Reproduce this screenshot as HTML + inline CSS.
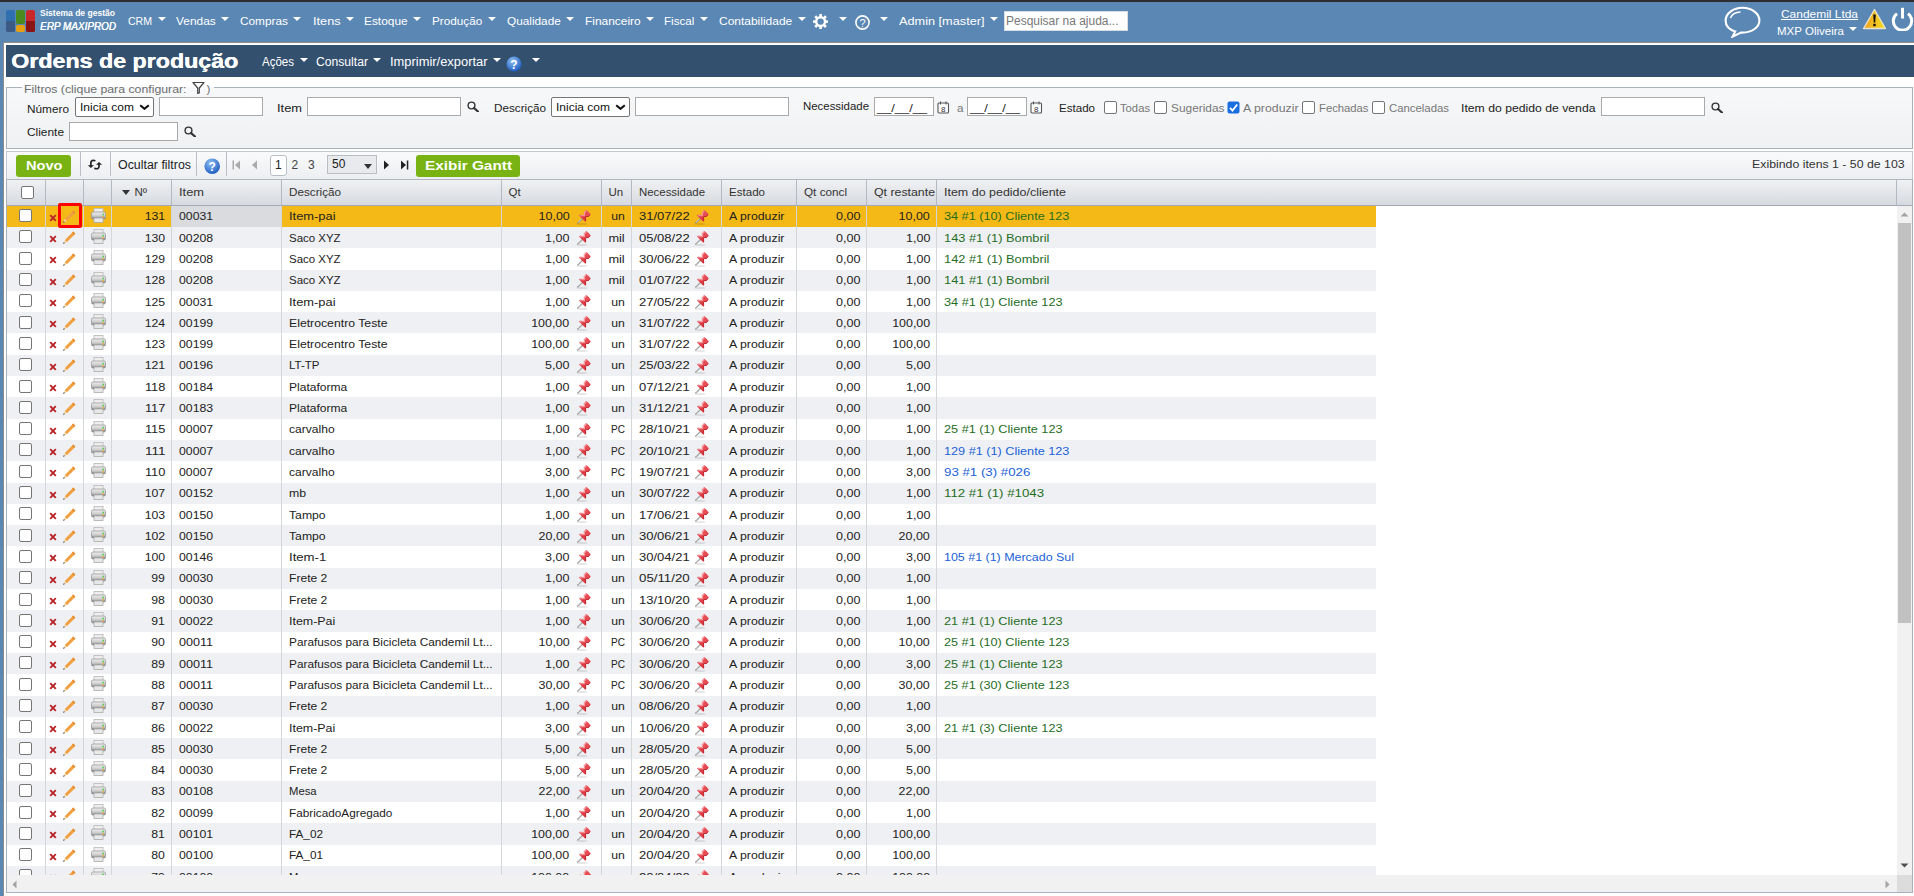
<!DOCTYPE html><html><head><meta charset="utf-8"><title>Ordens de produção</title><style>
html,body{margin:0;padding:0}
body{width:1914px;height:896px;overflow:hidden;position:relative;background:#fff;font-family:"Liberation Sans", sans-serif}
.t{position:absolute;white-space:nowrap;line-height:1.149;transform-origin:left center;}
</style></head><body>
<div style="position:absolute;left:0px;top:0px;width:1914px;height:2px;background:#2e2e2e"></div>
<div style="position:absolute;left:0px;top:2px;width:1914px;height:40px;background:#5b87b4"></div>
<div style="position:absolute;left:0px;top:42px;width:3px;height:854px;background:#5b87b4"></div>
<div style="position:absolute;left:3px;top:42px;width:1911px;height:1px;background:#8c8c8c"></div>
<div style="position:absolute;left:3px;top:42px;width:1px;height:854px;background:#8c8c8c"></div>
<div style="position:absolute;left:6px;top:45px;width:1908px;height:32px;background:#34506f"></div>
<div style="position:absolute;left:6px;top:10px;width:9px;height:22px;background:#2f6fb0;border-radius:2px"></div>
<div style="position:absolute;left:6px;top:21px;width:9px;height:11px;background:#3d5a86;border-radius:0 0 2px 2px"></div>
<div style="position:absolute;left:16px;top:10px;width:9px;height:14px;background:#4a8a1e;border-radius:2px"></div>
<div style="position:absolute;left:16px;top:25px;width:9px;height:7px;background:#e8a010;border-radius:2px"></div>
<div style="position:absolute;left:26px;top:10px;width:9px;height:22px;background:#c8282a;border-radius:2px"></div>
<div style="position:absolute;left:26px;top:21px;width:9px;height:11px;background:#8a1414;border-radius:0 0 2px 2px"></div>
<div class="t" id="t0" style="transform:scaleX(0.9490);left:40px;top:8.46px;font-size:9px;color:#fff;font-weight:bold;">Sistema de gestão</div>
<div class="t" id="t1" style="transform:scaleX(0.9053);left:39.5px;top:19.95px;font-size:11px;color:#fff;font-weight:normal;font-style:italic;text-shadow:0.3px 0 0 #fff;">ERP MAXIPROD</div>
<div class="t" id="t2" style="transform:scaleX(0.9159);left:128.0px;top:15.39px;font-size:11.5px;color:#fff;font-weight:normal;">CRM</div>
<div style="position:absolute;left:157.8px;top:17px;width:0;height:0;border-left:4.0px solid transparent;border-right:4.0px solid transparent;border-top:4px solid #fff"></div>
<div class="t" id="t3" style="transform:scaleX(1.0345);left:176.1px;top:15.39px;font-size:11.5px;color:#fff;font-weight:normal;">Vendas</div>
<div style="position:absolute;left:221.3px;top:17px;width:0;height:0;border-left:4.0px solid transparent;border-right:4.0px solid transparent;border-top:4px solid #fff"></div>
<div class="t" id="t4" style="transform:scaleX(1.0288);left:240.1px;top:15.39px;font-size:11.5px;color:#fff;font-weight:normal;">Compras</div>
<div style="position:absolute;left:293.4px;top:17px;width:0;height:0;border-left:4.0px solid transparent;border-right:4.0px solid transparent;border-top:4px solid #fff"></div>
<div class="t" id="t5" style="transform:scaleX(1.1068);left:312.5px;top:15.39px;font-size:11.5px;color:#fff;font-weight:normal;">Itens</div>
<div style="position:absolute;left:346.4px;top:17px;width:0;height:0;border-left:4.0px solid transparent;border-right:4.0px solid transparent;border-top:4px solid #fff"></div>
<div class="t" id="t6" style="transform:scaleX(1.0331);left:364.2px;top:15.39px;font-size:11.5px;color:#fff;font-weight:normal;">Estoque</div>
<div style="position:absolute;left:412.9px;top:17px;width:0;height:0;border-left:4.0px solid transparent;border-right:4.0px solid transparent;border-top:4px solid #fff"></div>
<div class="t" id="t7" style="transform:scaleX(1.0196);left:432.1px;top:15.39px;font-size:11.5px;color:#fff;font-weight:normal;">Produção</div>
<div style="position:absolute;left:487.8px;top:17px;width:0;height:0;border-left:4.0px solid transparent;border-right:4.0px solid transparent;border-top:4px solid #fff"></div>
<div class="t" id="t8" style="transform:scaleX(1.0260);left:506.9px;top:15.39px;font-size:11.5px;color:#fff;font-weight:normal;">Qualidade</div>
<div style="position:absolute;left:566.1px;top:17px;width:0;height:0;border-left:4.0px solid transparent;border-right:4.0px solid transparent;border-top:4px solid #fff"></div>
<div class="t" id="t9" style="transform:scaleX(1.0372);left:584.9px;top:15.39px;font-size:11.5px;color:#fff;font-weight:normal;">Financeiro</div>
<div style="position:absolute;left:645.8px;top:17px;width:0;height:0;border-left:4.0px solid transparent;border-right:4.0px solid transparent;border-top:4px solid #fff"></div>
<div class="t" id="t10" style="transform:scaleX(1.0089);left:664.4px;top:15.39px;font-size:11.5px;color:#fff;font-weight:normal;">Fiscal</div>
<div style="position:absolute;left:700.4px;top:17px;width:0;height:0;border-left:4.0px solid transparent;border-right:4.0px solid transparent;border-top:4px solid #fff"></div>
<div class="t" id="t11" style="transform:scaleX(1.0406);left:719.3px;top:15.39px;font-size:11.5px;color:#fff;font-weight:normal;">Contabilidade</div>
<div style="position:absolute;left:797.9px;top:17px;width:0;height:0;border-left:4.0px solid transparent;border-right:4.0px solid transparent;border-top:4px solid #fff"></div>
<svg style="position:absolute;left:813.3px;top:14px" width="15.2" height="15.2" viewBox="0 0 15.2 15.2"><g fill="#fff"><rect x="6.3" y="0" width="2.6" height="4" transform="rotate(0 7.6 7.6)"/><rect x="6.3" y="0" width="2.6" height="4" transform="rotate(45 7.6 7.6)"/><rect x="6.3" y="0" width="2.6" height="4" transform="rotate(90 7.6 7.6)"/><rect x="6.3" y="0" width="2.6" height="4" transform="rotate(135 7.6 7.6)"/><rect x="6.3" y="0" width="2.6" height="4" transform="rotate(180 7.6 7.6)"/><rect x="6.3" y="0" width="2.6" height="4" transform="rotate(225 7.6 7.6)"/><rect x="6.3" y="0" width="2.6" height="4" transform="rotate(270 7.6 7.6)"/><rect x="6.3" y="0" width="2.6" height="4" transform="rotate(315 7.6 7.6)"/><circle cx="7.6" cy="7.6" r="5.6"/></g><circle cx="7.6" cy="7.6" r="3.2" fill="#5b87b4"/></svg>
<div style="position:absolute;left:838.8px;top:17px;width:0;height:0;border-left:4.0px solid transparent;border-right:4.0px solid transparent;border-top:4px solid #fff"></div>
<svg style="position:absolute;left:854.7px;top:15px" width="15" height="15" viewBox="0 0 15 15"><circle cx="7.5" cy="7.5" r="6.6" fill="none" stroke="#fff" stroke-width="1.6"/><text x="7.5" y="11.6" font-family="Liberation Sans" font-size="11" fill="#fff" text-anchor="middle">?</text></svg>
<div style="position:absolute;left:879.8px;top:17px;width:0;height:0;border-left:4.0px solid transparent;border-right:4.0px solid transparent;border-top:4px solid #fff"></div>
<div class="t" id="t12" style="transform:scaleX(1.1057);left:898.5px;top:15.39px;font-size:11.5px;color:#fff;font-weight:normal;">Admin [master]</div>
<div style="position:absolute;left:990px;top:17px;width:0;height:0;border-left:4.0px solid transparent;border-right:4.0px solid transparent;border-top:4px solid #fff"></div>
<div style="position:absolute;left:1003.5px;top:11px;width:124.5px;height:20px;background:#fff;box-sizing:border-box;border:1px solid #d8dde4"></div>
<div class="t" id="t13" style="transform:scaleX(0.9978);left:1006px;top:14.94px;font-size:12px;color:#777;font-weight:normal;">Pesquisar na ajuda...</div>
<svg style="position:absolute;left:1724px;top:6px" width="37" height="32" viewBox="0 0 37 32"><path d="M18.5 1.8 C9 1.8 1.6 7.6 1.6 14.4 C1.6 19.6 5.6 23.6 11.2 25.4 L8.6 30.6 L17 26.6 C17.5 26.6 18 26.6 18.5 26.6 C28 26.6 35.4 21 35.4 14.4 C35.4 7.6 28 1.8 18.5 1.8 Z" fill="none" stroke="#fff" stroke-width="2.1"/><path d="M6.5 12 C8 8 11.5 6.2 16.5 6" fill="none" stroke="#fff" stroke-width="1.6"/></svg>
<div class="t" id="t14" style="transform:scaleX(1.0383);left:1780.5px;top:7.99px;font-size:11.5px;color:#fff;font-weight:normal;text-decoration:underline;">Candemil Ltda</div>
<div class="t" id="t15" style="transform:scaleX(1.0016);left:1776.5px;top:25.19px;font-size:11.5px;color:#fff;font-weight:normal;">MXP Oliveira</div>
<div style="position:absolute;left:1849.3px;top:27px;width:0;height:0;border-left:4.0px solid transparent;border-right:4.0px solid transparent;border-top:4.5px solid #fff"></div>
<svg style="position:absolute;left:1861.5px;top:8px" width="25" height="22" viewBox="0 0 25 22"><defs><linearGradient id="wg" x1="0" y1="0" x2="1" y2="0"><stop offset="0" stop-color="#f0a020"/><stop offset="1" stop-color="#f4e020"/></linearGradient></defs><path d="M12.5 1.5 L23.5 20.5 L1.5 20.5 Z" fill="url(#wg)" stroke="#e8e4d0" stroke-width="1.3" stroke-linejoin="round"/><path d="M11.2 6.5 L13.8 6.5 L13.2 14.5 L11.8 14.5 Z" fill="#111"/><rect x="11.3" y="15.8" width="2.4" height="2.4" fill="#111"/></svg>
<svg style="position:absolute;left:1891px;top:7px" width="23" height="24" viewBox="0 0 23 24"><path d="M6 6.6 A9.2 9.2 0 1 0 17 6.6" fill="none" stroke="#fff" stroke-width="3"/><line x1="11.5" y1="0.8" x2="11.5" y2="11.5" stroke="#fff" stroke-width="3"/></svg>
<div class="t" id="t16" style="transform:scaleX(1.1606);left:11px;top:49.60px;font-size:20px;color:#fff;font-weight:bold;text-shadow:0.5px 0 0 #fff;">Ordens de produção</div>
<div class="t" id="t17" style="transform:scaleX(0.9593);left:261.5px;top:55.94px;font-size:12px;color:#fff;font-weight:normal;">Ações</div>
<div style="position:absolute;left:299.7px;top:58px;width:0;height:0;border-left:4.0px solid transparent;border-right:4.0px solid transparent;border-top:4.5px solid #fff"></div>
<div class="t" id="t18" style="transform:scaleX(1.0125);left:316px;top:55.94px;font-size:12px;color:#fff;font-weight:normal;">Consultar</div>
<div style="position:absolute;left:372.9px;top:58px;width:0;height:0;border-left:4.0px solid transparent;border-right:4.0px solid transparent;border-top:4.5px solid #fff"></div>
<div class="t" id="t19" style="transform:scaleX(1.0751);left:390px;top:55.94px;font-size:12px;color:#fff;font-weight:normal;">Imprimir/exportar</div>
<div style="position:absolute;left:493.1px;top:58px;width:0;height:0;border-left:4.0px solid transparent;border-right:4.0px solid transparent;border-top:4.5px solid #fff"></div>
<svg style="position:absolute;left:506px;top:56px" width="16" height="16" viewBox="0 0 16 16"><defs><radialGradient id="hg" cx="40%" cy="30%" r="70%"><stop offset="0" stop-color="#8fc0f5"/><stop offset="1" stop-color="#1f5fc0"/></radialGradient></defs><circle cx="8" cy="8" r="7.5" fill="url(#hg)"/><text x="8" y="12.5" font-family="Liberation Sans" font-weight="bold" font-size="12" fill="#fff" text-anchor="middle">?</text></svg>
<div style="position:absolute;left:532px;top:58px;width:0;height:0;border-left:4.0px solid transparent;border-right:4.0px solid transparent;border-top:4.5px solid #fff"></div>
<div style="position:absolute;left:6px;top:87px;width:1907px;height:62px;background:linear-gradient(#f7f8f9,#eff1f3);box-sizing:border-box;border:1px solid #aab1b9"></div>
<div style="position:absolute;left:22px;top:80px;width:192px;height:7px;background:#fff"></div>
<div style="position:absolute;left:22px;top:87px;width:192px;height:7px;background:#f7f8f9"></div>
<div class="t" id="t20" style="transform:scaleX(1.0682);left:24px;top:83.09px;font-size:11.5px;color:#6e6e6e;font-weight:normal;">Filtros (clique para configurar:</div>
<svg style="position:absolute;left:192px;top:81px" width="13" height="13" viewBox="0 0 13 13"><path d="M1 1.5 L12 1.5 L7.3 7 L7.3 12 L5.7 12.5 L5.7 7 Z" fill="none" stroke="#444" stroke-width="1.2" stroke-linejoin="round"/></svg>
<div class="t" id="t21" style="left:206.5px;top:83.09px;font-size:11.5px;color:#6e6e6e;font-weight:normal;">)</div>
<div class="t" id="t22" style="transform:scaleX(1.0267);left:27px;top:102.59px;font-size:11.5px;color:#222;font-weight:normal;">Número</div>
<div style="position:absolute;left:74.5px;top:97.3px;width:79px;height:20px;background:#fff;box-sizing:border-box;border:1px solid #767676;border-radius:2px"></div>
<div class="t" id="t23" style="transform:scaleX(1.0428);left:79.5px;top:101.09px;font-size:11.5px;color:#111;font-weight:normal;">Inicia com</div>
<svg style="position:absolute;left:138.5px;top:104.3px" width="11" height="6" viewBox="0 0 11 6"><path d="M1.2 1.2 L5.5 4.8 L9.8 1.2" fill="none" stroke="#111" stroke-width="2.1"/></svg>
<div style="position:absolute;left:159px;top:97.3px;width:104px;height:19px;background:#fff;box-sizing:border-box;border:1px solid #a9a9a9"></div>
<div class="t" id="t24" style="transform:scaleX(1.1173);left:276.5px;top:102.49px;font-size:11.5px;color:#222;font-weight:normal;">Item</div>
<div style="position:absolute;left:307px;top:97.3px;width:154px;height:19px;background:#fff;box-sizing:border-box;border:1px solid #a9a9a9"></div>
<svg style="position:absolute;left:466.5px;top:101px" width="12" height="11" viewBox="0 0 12 11"><circle cx="4.5" cy="4.5" r="3.4" fill="none" stroke="#333" stroke-width="1.4"/><line x1="7" y1="7" x2="11" y2="10.5" stroke="#333" stroke-width="2.2" stroke-linecap="round"/></svg>
<div class="t" id="t25" style="transform:scaleX(1.0168);left:493.5px;top:102.49px;font-size:11.5px;color:#222;font-weight:normal;">Descrição</div>
<div style="position:absolute;left:550.5px;top:97.3px;width:79px;height:20px;background:#fff;box-sizing:border-box;border:1px solid #767676;border-radius:2px"></div>
<div class="t" id="t26" style="transform:scaleX(1.0428);left:555.5px;top:101.09px;font-size:11.5px;color:#111;font-weight:normal;">Inicia com</div>
<svg style="position:absolute;left:614.5px;top:104.3px" width="11" height="6" viewBox="0 0 11 6"><path d="M1.2 1.2 L5.5 4.8 L9.8 1.2" fill="none" stroke="#111" stroke-width="2.1"/></svg>
<div style="position:absolute;left:635.3px;top:97.3px;width:153.5px;height:19px;background:#fff;box-sizing:border-box;border:1px solid #a9a9a9"></div>
<div class="t" id="t27" style="transform:scaleX(0.9927);left:802.5px;top:99.79px;font-size:11.5px;color:#222;font-weight:normal;">Necessidade</div>
<div style="position:absolute;left:874.2px;top:97.3px;width:59.6px;height:19px;background:#fff;box-sizing:border-box;border:1px solid #a9a9a9"></div>
<div class="t" id="t28" style="transform:scaleX(1.1169);left:877px;top:102.09px;font-size:11.5px;color:#222;font-weight:normal;">__/__/__</div>
<svg style="position:absolute;left:937px;top:101px" width="13" height="13" viewBox="0 0 13 13"><rect x="1" y="2" width="10.5" height="10" rx="1" fill="#fff" stroke="#555" stroke-width="1.1"/><line x1="3.5" y1="0.5" x2="3.5" y2="3.5" stroke="#555" stroke-width="1.1"/><line x1="9" y1="0.5" x2="9" y2="3.5" stroke="#555" stroke-width="1.1"/><text x="6.3" y="11" font-family="Liberation Sans" font-size="8" fill="#333" text-anchor="middle">8</text></svg>
<div class="t" id="t29" style="transform:scaleX(1.0146);left:956.5px;top:101.79px;font-size:11.5px;color:#777;font-weight:normal;">a</div>
<div style="position:absolute;left:967.2px;top:97.3px;width:59.6px;height:19px;background:#fff;box-sizing:border-box;border:1px solid #a9a9a9"></div>
<div class="t" id="t30" style="transform:scaleX(1.1169);left:970px;top:102.09px;font-size:11.5px;color:#222;font-weight:normal;">__/__/__</div>
<svg style="position:absolute;left:1030px;top:101px" width="13" height="13" viewBox="0 0 13 13"><rect x="1" y="2" width="10.5" height="10" rx="1" fill="#fff" stroke="#555" stroke-width="1.1"/><line x1="3.5" y1="0.5" x2="3.5" y2="3.5" stroke="#555" stroke-width="1.1"/><line x1="9" y1="0.5" x2="9" y2="3.5" stroke="#555" stroke-width="1.1"/><text x="6.3" y="11" font-family="Liberation Sans" font-size="8" fill="#333" text-anchor="middle">8</text></svg>
<div class="t" id="t31" style="transform:scaleX(1.0052);left:1058.5px;top:101.89px;font-size:11.5px;color:#222;font-weight:normal;">Estado</div>
<div style="position:absolute;left:1104px;top:101px;width:13px;height:13px;background:#fff;box-sizing:border-box;border:1px solid #767676;border-radius:2px"></div>
<div class="t" id="t32" style="transform:scaleX(0.9776);left:1120px;top:101.79px;font-size:11.5px;color:#777;font-weight:normal;">Todas</div>
<div style="position:absolute;left:1154px;top:101px;width:13px;height:13px;background:#fff;box-sizing:border-box;border:1px solid #767676;border-radius:2px"></div>
<div class="t" id="t33" style="transform:scaleX(1.0329);left:1170.5px;top:101.79px;font-size:11.5px;color:#777;font-weight:normal;">Sugeridas</div>
<svg style="position:absolute;left:1227px;top:101px" width="13" height="13" viewBox="0 0 13 13"><rect x="0.5" y="0.5" width="12" height="12" rx="2" fill="#1a6fe0"/><path d="M3 6.8 L5.5 9.5 L10.2 3.5" fill="none" stroke="#fff" stroke-width="1.8"/></svg>
<div class="t" id="t34" style="transform:scaleX(1.0718);left:1243px;top:101.79px;font-size:11.5px;color:#777;font-weight:normal;">A produzir</div>
<div style="position:absolute;left:1302px;top:101px;width:13px;height:13px;background:#fff;box-sizing:border-box;border:1px solid #767676;border-radius:2px"></div>
<div class="t" id="t35" style="transform:scaleX(0.9799);left:1318.5px;top:101.79px;font-size:11.5px;color:#777;font-weight:normal;">Fechadas</div>
<div style="position:absolute;left:1372px;top:101px;width:13px;height:13px;background:#fff;box-sizing:border-box;border:1px solid #767676;border-radius:2px"></div>
<div class="t" id="t36" style="transform:scaleX(0.9879);left:1388.5px;top:101.79px;font-size:11.5px;color:#777;font-weight:normal;">Canceladas</div>
<div class="t" id="t37" style="transform:scaleX(1.0623);left:1461px;top:102.49px;font-size:11.5px;color:#222;font-weight:normal;">Item do pedido de venda</div>
<div style="position:absolute;left:1601.4px;top:97.3px;width:103.5px;height:19px;background:#fff;box-sizing:border-box;border:1px solid #a9a9a9"></div>
<svg style="position:absolute;left:1710.5px;top:101.5px" width="12" height="11" viewBox="0 0 12 11"><circle cx="4.5" cy="4.5" r="3.4" fill="none" stroke="#333" stroke-width="1.4"/><line x1="7" y1="7" x2="11" y2="10.5" stroke="#333" stroke-width="2.2" stroke-linecap="round"/></svg>
<div class="t" id="t38" style="transform:scaleX(1.0332);left:27px;top:126.09px;font-size:11.5px;color:#222;font-weight:normal;">Cliente</div>
<div style="position:absolute;left:69.4px;top:121.6px;width:108.2px;height:19px;background:#fff;box-sizing:border-box;border:1px solid #a9a9a9"></div>
<svg style="position:absolute;left:184px;top:125.8px" width="12" height="11" viewBox="0 0 12 11"><circle cx="4.5" cy="4.5" r="3.4" fill="none" stroke="#333" stroke-width="1.4"/><line x1="7" y1="7" x2="11" y2="10.5" stroke="#333" stroke-width="2.2" stroke-linecap="round"/></svg>
<div style="position:absolute;left:6px;top:151px;width:1907px;height:29px;background:linear-gradient(#f9fafb,#eceef1);box-sizing:border-box;border:1px solid #c3c8ce;border-bottom:none"></div>
<div style="position:absolute;left:16px;top:154.5px;width:55px;height:22.5px;background:#78b313;border-radius:3px"></div>
<div class="t" id="t39" style="transform:scaleX(1.1231);left:25.5px;top:158.83px;font-size:13px;color:#fff;font-weight:bold;">Novo</div>
<div style="position:absolute;left:80px;top:152px;width:1px;height:24px;background:#b9bec6"></div>
<div style="position:absolute;left:110px;top:152px;width:1px;height:24px;background:#b9bec6"></div>
<div style="position:absolute;left:196px;top:152px;width:1px;height:24px;background:#b9bec6"></div>
<div style="position:absolute;left:226px;top:152px;width:1px;height:24px;background:#b9bec6"></div>
<svg style="position:absolute;left:84px;top:155px" width="22" height="20" viewBox="0 0 22 20"><path d="M11.4 5.8 Q7.2 4.6 6.9 7.4 L6.9 11" fill="none" stroke="#222" stroke-width="1.7"/><path d="M3.8 10.2 L10 10.2 L6.9 13 Z" fill="#222"/><path d="M10.3 13.4 Q14.8 14.6 15 11.8 L15 9" fill="none" stroke="#222" stroke-width="1.7"/><path d="M12 9.8 L18.1 9.8 L15 7 Z" fill="#222"/></svg>
<div class="t" id="t40" style="transform:scaleX(1.0327);left:117.5px;top:158.64px;font-size:12px;color:#222;font-weight:normal;">Ocultar filtros</div>
<svg style="position:absolute;left:203.5px;top:158px" width="17" height="17" viewBox="0 0 17 17"><defs><radialGradient id="hg2" cx="40%" cy="30%" r="70%"><stop offset="0" stop-color="#8fc0f5"/><stop offset="1" stop-color="#1f5fc0"/></radialGradient></defs><circle cx="8.2" cy="8.2" r="7.8" fill="url(#hg2)"/><text x="8.2" y="12.8" font-family="Liberation Sans" font-weight="bold" font-size="12" fill="#fff" text-anchor="middle">?</text></svg>
<svg style="position:absolute;left:232px;top:159.5px" width="9" height="10" viewBox="0 0 9 10"><rect x="0.5" y="0.5" width="1.5" height="9" fill="#aaa"/><path d="M8 0.5 L8 9.5 L3 5 Z" fill="#aaa"/></svg>
<svg style="position:absolute;left:251px;top:159.5px" width="7" height="10" viewBox="0 0 7 10"><path d="M6 0.5 L6 9.5 L1 5 Z" fill="#aaa"/></svg>
<div style="position:absolute;left:269.5px;top:154.5px;width:17.5px;height:21.5px;background:#fff;box-sizing:border-box;border:1px solid #b9bec5;border-radius:3px"></div>
<div class="t" id="t41" style="left:275px;top:158.64px;font-size:12px;color:#222;font-weight:normal;">1</div>
<div class="t" id="t42" style="left:291.5px;top:158.64px;font-size:12px;color:#444;font-weight:normal;">2</div>
<div class="t" id="t43" style="left:308px;top:158.64px;font-size:12px;color:#444;font-weight:normal;">3</div>
<div style="position:absolute;left:327px;top:155.3px;width:49.5px;height:18.5px;background:#e8eaed;box-sizing:border-box;border:1px solid #b9bec5"></div>
<div class="t" id="t44" style="left:332px;top:157.64px;font-size:12px;color:#222;font-weight:normal;">50</div>
<div style="position:absolute;left:364px;top:164px;width:0;height:0;border-left:4.5px solid transparent;border-right:4.5px solid transparent;border-top:5px solid #333"></div>
<svg style="position:absolute;left:383px;top:159.5px" width="7" height="10" viewBox="0 0 7 10"><path d="M1 0.5 L1 9.5 L6 5 Z" fill="#222"/></svg>
<svg style="position:absolute;left:400px;top:159.5px" width="9" height="10" viewBox="0 0 9 10"><path d="M1 0.5 L1 9.5 L6 5 Z" fill="#222"/><rect x="6.8" y="0.5" width="1.5" height="9" fill="#222"/></svg>
<div style="position:absolute;left:416px;top:154.5px;width:104px;height:22px;background:#78b313;border-radius:3px"></div>
<div class="t" id="t45" style="transform:scaleX(1.1807);left:424.5px;top:158.83px;font-size:13px;color:#fff;font-weight:bold;">Exibir Gantt</div>
<div class="t" id="t46" style="transform:scaleX(1.0696);right:9px;top:157.79px;font-size:11.5px;color:#333;font-weight:normal;transform-origin:right center;">Exibindo itens 1 - 50 de 103</div>
<div style="position:absolute;left:6px;top:179px;width:1907px;height:714px;box-sizing:border-box;border:1px solid #a9b0b9;border-top:1px solid #b0b6be"></div>
<div style="position:absolute;left:7px;top:180px;width:1890px;height:26px;background:linear-gradient(#f0f1f3,#d6dae0);border-bottom:1px solid #a4abb4;box-sizing:border-box"></div>
<div style="position:absolute;left:1897px;top:180px;width:15px;height:26px;background:linear-gradient(#f0f1f3,#d6dae0);border-bottom:1px solid #a4abb4;box-sizing:border-box"></div>
<div style="position:absolute;left:45.0px;top:180px;width:1px;height:25px;background:#b3b9c1"></div>
<div style="position:absolute;left:83.0px;top:180px;width:1px;height:25px;background:#b3b9c1"></div>
<div style="position:absolute;left:111.0px;top:180px;width:1px;height:25px;background:#b3b9c1"></div>
<div style="position:absolute;left:171.0px;top:180px;width:1px;height:25px;background:#b3b9c1"></div>
<div style="position:absolute;left:281.0px;top:180px;width:1px;height:25px;background:#b3b9c1"></div>
<div style="position:absolute;left:501.0px;top:180px;width:1px;height:25px;background:#b3b9c1"></div>
<div style="position:absolute;left:601.0px;top:180px;width:1px;height:25px;background:#b3b9c1"></div>
<div style="position:absolute;left:631.0px;top:180px;width:1px;height:25px;background:#b3b9c1"></div>
<div style="position:absolute;left:721.0px;top:180px;width:1px;height:25px;background:#b3b9c1"></div>
<div style="position:absolute;left:796.0px;top:180px;width:1px;height:25px;background:#b3b9c1"></div>
<div style="position:absolute;left:866.0px;top:180px;width:1px;height:25px;background:#b3b9c1"></div>
<div style="position:absolute;left:936.0px;top:180px;width:1px;height:25px;background:#b3b9c1"></div>
<div style="position:absolute;left:1896.0px;top:180px;width:1px;height:25px;background:#b3b9c1"></div>
<div style="position:absolute;left:20.5px;top:185.5px;width:13px;height:13px;background:#fff;box-sizing:border-box;border:1px solid #767676;border-radius:2px"></div>
<div style="position:absolute;left:122px;top:189.5px;width:0;height:0;border-left:4.0px solid transparent;border-right:4.0px solid transparent;border-top:5px solid #333"></div>
<div class="t" id="t47" style="left:134.5px;top:185.99px;font-size:11.5px;color:#333;font-weight:normal;">Nº</div>
<div class="t" id="t48" style="transform:scaleX(1.1173);left:178.5px;top:185.99px;font-size:11.5px;color:#333;font-weight:normal;">Item</div>
<div class="t" id="t49" style="transform:scaleX(1.0168);left:288.5px;top:185.99px;font-size:11.5px;color:#333;font-weight:normal;">Descrição</div>
<div class="t" id="t50" style="left:508.5px;top:185.99px;font-size:11.5px;color:#333;font-weight:normal;">Qt</div>
<div class="t" id="t51" style="left:608.5px;top:185.99px;font-size:11.5px;color:#333;font-weight:normal;">Un</div>
<div class="t" id="t52" style="transform:scaleX(0.9927);left:639px;top:185.99px;font-size:11.5px;color:#333;font-weight:normal;">Necessidade</div>
<div class="t" id="t53" style="transform:scaleX(1.0052);left:728.5px;top:185.99px;font-size:11.5px;color:#333;font-weight:normal;">Estado</div>
<div class="t" id="t54" style="transform:scaleX(1.0193);left:803.5px;top:185.99px;font-size:11.5px;color:#333;font-weight:normal;">Qt concl</div>
<div class="t" id="t55" style="transform:scaleX(1.0722);left:873.5px;top:185.99px;font-size:11.5px;color:#333;font-weight:normal;">Qt restante</div>
<div class="t" id="t56" style="transform:scaleX(1.0841);left:943.5px;top:185.99px;font-size:11.5px;color:#333;font-weight:normal;">Item do pedido/cliente</div>
<div style="position:absolute;left:7px;top:205.67px;width:1890px;height:669.33px;overflow:hidden">
<div style="position:absolute;left:0;top:0.000px;width:1369px;height:21.3px;background:#f5b917"></div>
<div style="position:absolute;left:165px;top:0;width:110px;height:21.3px;background:#d9dbde"></div>
<div style="position:absolute;left:38.0px;top:0.000px;width:1px;height:21.3px;background:#d3d7dc"></div>
<div style="position:absolute;left:76.0px;top:0.000px;width:1px;height:21.3px;background:#d3d7dc"></div>
<div style="position:absolute;left:104.0px;top:0.000px;width:1px;height:21.3px;background:#d3d7dc"></div>
<div style="position:absolute;left:164.0px;top:0.000px;width:1px;height:21.3px;background:#d3d7dc"></div>
<div style="position:absolute;left:274.0px;top:0.000px;width:1px;height:21.3px;background:#d3d7dc"></div>
<div style="position:absolute;left:494.0px;top:0.000px;width:1px;height:21.3px;background:#d3d7dc"></div>
<div style="position:absolute;left:594.0px;top:0.000px;width:1px;height:21.3px;background:#d3d7dc"></div>
<div style="position:absolute;left:624.0px;top:0.000px;width:1px;height:21.3px;background:#d3d7dc"></div>
<div style="position:absolute;left:714.0px;top:0.000px;width:1px;height:21.3px;background:#d3d7dc"></div>
<div style="position:absolute;left:789.0px;top:0.000px;width:1px;height:21.3px;background:#d3d7dc"></div>
<div style="position:absolute;left:859.0px;top:0.000px;width:1px;height:21.3px;background:#d3d7dc"></div>
<div style="position:absolute;left:929.0px;top:0.000px;width:1px;height:21.3px;background:#d3d7dc"></div>
<div style="position:absolute;left:12px;top:3.50px;width:13px;height:13px;background:#fff;box-sizing:border-box;border:1px solid #767676;border-radius:2px"></div>
<svg style="position:absolute;left:42px;top:8.00px" width="8" height="8" viewBox="0 0 8 8"><path d="M1.2 1.2 L6.8 6.8 M6.8 1.2 L1.2 6.8" stroke="#b82428" stroke-width="1.9"/></svg>
<svg style="position:absolute;left:55px;top:3.50px" width="15" height="15" viewBox="0 0 14 14"><path d="M2.5 9.5 L10.5 1.5 L12.5 3.5 L4.5 11.5 Z" fill="#f0a040"/><path d="M10.5 1.5 L12.5 3.5 L11.5 4.5 L9.5 2.5 Z" fill="#e88a30"/><path d="M2.5 9.5 L4.5 11.5 L1 13 Z" fill="#f6e0b0"/><path d="M1 13 L1.8 11.3 L2.7 12.2 Z" fill="#333"/></svg>
<svg style="position:absolute;left:83.5px;top:2.00px" width="15" height="15" viewBox="0 0 15 15"><defs><linearGradient id="pg0" x1="0" y1="0" x2="0" y2="1"><stop offset="0" stop-color="#f0f0f0"/><stop offset="0.6" stop-color="#c8c8c8"/><stop offset="1" stop-color="#6a6a6a"/></linearGradient></defs><rect x="3" y="0.5" width="9" height="4" fill="#eee" stroke="#b8b8b8" stroke-width="0.8"/><rect x="0.5" y="4" width="14" height="7" rx="1.5" fill="url(#pg0)" stroke="#999" stroke-width="0.8"/><rect x="3" y="10" width="9" height="4.5" fill="#e8e8e8" stroke="#aaa" stroke-width="0.8"/><circle cx="12.2" cy="6.5" r="0.9" fill="#5c5"/><circle cx="12.2" cy="8.8" r="0.9" fill="#ea3"/></svg>
<div class="t" id="t57" style="transform:scaleX(1.0666);right:1732px;top:4.69px;font-size:11.5px;color:#222;font-weight:normal;transform-origin:right center;">131</div>
<div class="t" id="t58" style="transform:scaleX(1.0664);left:171.5px;top:4.69px;font-size:11.5px;color:#222;font-weight:normal;">00031</div>
<div class="t" id="t59" style="transform:scaleX(1.1196);left:281.5px;top:4.69px;font-size:11.5px;color:#222;font-weight:normal;">Item-pai</div>
<div class="t" id="t60" style="transform:scaleX(1.0837);right:1327.5px;top:4.69px;font-size:11.5px;color:#222;font-weight:normal;transform-origin:right center;">10,00</div>
<svg style="position:absolute;left:565px;top:0.00px" width="24" height="21" viewBox="0 0 24 21"><ellipse cx="10" cy="18" rx="5.5" ry="0.9" fill="#000" opacity="0.10"/><g transform="translate(5.2,17.6) rotate(-45)"><line x1="0.3" y1="0" x2="8" y2="0" stroke="#8c8c8c" stroke-width="1.3"/><line x1="1.5" y1="-0.3" x2="7" y2="-0.3" stroke="#f0f0f0" stroke-width="0.6"/><path d="M7 -4.4 L8.2 -4.4 L10.8 -1.2 L10.8 1.2 L8.2 4.4 L7 4.4 Z" fill="#e03a42"/><path d="M10.8 -1.2 L12.6 -3.2 L15.9 -3.2 Q16.6 0 15.9 3.2 L12.6 3.2 L10.8 1.2 Z" fill="#e64c54"/><path d="M7.5 -3.6 L10.5 -0.6 L12.8 -2.5 L15.5 -2.5" fill="none" stroke="#f8a4a8" stroke-width="1"/><path d="M8 4 L10.8 1 L12.8 2.8 L15.6 2.8" fill="none" stroke="#b8202a" stroke-width="0.8"/></g></svg>
<div class="t" id="t61" style="transform:scaleX(1.0612);right:1272px;top:4.69px;font-size:11.5px;color:#222;font-weight:normal;transform-origin:right center;">un</div>
<div class="t" id="t62" style="transform:scaleX(1.1320);left:631.5px;top:4.69px;font-size:11.5px;color:#222;font-weight:normal;">31/07/22</div>
<svg style="position:absolute;left:683px;top:0.00px" width="24" height="21" viewBox="0 0 24 21"><ellipse cx="10" cy="18" rx="5.5" ry="0.9" fill="#000" opacity="0.10"/><g transform="translate(5.2,17.6) rotate(-45)"><line x1="0.3" y1="0" x2="8" y2="0" stroke="#8c8c8c" stroke-width="1.3"/><line x1="1.5" y1="-0.3" x2="7" y2="-0.3" stroke="#f0f0f0" stroke-width="0.6"/><path d="M7 -4.4 L8.2 -4.4 L10.8 -1.2 L10.8 1.2 L8.2 4.4 L7 4.4 Z" fill="#e03a42"/><path d="M10.8 -1.2 L12.6 -3.2 L15.9 -3.2 Q16.6 0 15.9 3.2 L12.6 3.2 L10.8 1.2 Z" fill="#e64c54"/><path d="M7.5 -3.6 L10.5 -0.6 L12.8 -2.5 L15.5 -2.5" fill="none" stroke="#f8a4a8" stroke-width="1"/><path d="M8 4 L10.8 1 L12.8 2.8 L15.6 2.8" fill="none" stroke="#b8202a" stroke-width="0.8"/></g></svg>
<div class="t" id="t63" style="transform:scaleX(1.0712);left:721.5px;top:4.69px;font-size:11.5px;color:#222;font-weight:normal;">A produzir</div>
<div class="t" id="t64" style="transform:scaleX(1.0883);right:1037px;top:4.69px;font-size:11.5px;color:#222;font-weight:normal;transform-origin:right center;">0,00</div>
<div class="t" id="t65" style="transform:scaleX(1.0837);right:967px;top:4.69px;font-size:11.5px;color:#222;font-weight:normal;transform-origin:right center;">10,00</div>
<div class="t" id="t66" style="transform:scaleX(1.1016);left:936.5px;top:4.69px;font-size:11.5px;color:#1f6e1f;font-weight:normal;">34 #1 (10) Cliente 123</div>
<div style="position:absolute;left:0;top:21.300px;width:1369px;height:21.3px;background:#eff0f3"></div>
<div style="position:absolute;left:38.0px;top:21.300px;width:1px;height:21.3px;background:#d3d7dc"></div>
<div style="position:absolute;left:76.0px;top:21.300px;width:1px;height:21.3px;background:#d3d7dc"></div>
<div style="position:absolute;left:104.0px;top:21.300px;width:1px;height:21.3px;background:#d3d7dc"></div>
<div style="position:absolute;left:164.0px;top:21.300px;width:1px;height:21.3px;background:#d3d7dc"></div>
<div style="position:absolute;left:274.0px;top:21.300px;width:1px;height:21.3px;background:#d3d7dc"></div>
<div style="position:absolute;left:494.0px;top:21.300px;width:1px;height:21.3px;background:#d3d7dc"></div>
<div style="position:absolute;left:594.0px;top:21.300px;width:1px;height:21.3px;background:#d3d7dc"></div>
<div style="position:absolute;left:624.0px;top:21.300px;width:1px;height:21.3px;background:#d3d7dc"></div>
<div style="position:absolute;left:714.0px;top:21.300px;width:1px;height:21.3px;background:#d3d7dc"></div>
<div style="position:absolute;left:789.0px;top:21.300px;width:1px;height:21.3px;background:#d3d7dc"></div>
<div style="position:absolute;left:859.0px;top:21.300px;width:1px;height:21.3px;background:#d3d7dc"></div>
<div style="position:absolute;left:929.0px;top:21.300px;width:1px;height:21.3px;background:#d3d7dc"></div>
<div style="position:absolute;left:12px;top:24.80px;width:13px;height:13px;background:#fff;box-sizing:border-box;border:1px solid #767676;border-radius:2px"></div>
<svg style="position:absolute;left:42px;top:29.30px" width="8" height="8" viewBox="0 0 8 8"><path d="M1.2 1.2 L6.8 6.8 M6.8 1.2 L1.2 6.8" stroke="#b82428" stroke-width="1.9"/></svg>
<svg style="position:absolute;left:55px;top:24.80px" width="15" height="15" viewBox="0 0 14 14"><path d="M2.5 9.5 L10.5 1.5 L12.5 3.5 L4.5 11.5 Z" fill="#f0a040"/><path d="M10.5 1.5 L12.5 3.5 L11.5 4.5 L9.5 2.5 Z" fill="#e88a30"/><path d="M2.5 9.5 L4.5 11.5 L1 13 Z" fill="#f6e0b0"/><path d="M1 13 L1.8 11.3 L2.7 12.2 Z" fill="#333"/></svg>
<svg style="position:absolute;left:83.5px;top:23.30px" width="15" height="15" viewBox="0 0 15 15"><defs><linearGradient id="pg1" x1="0" y1="0" x2="0" y2="1"><stop offset="0" stop-color="#f0f0f0"/><stop offset="0.6" stop-color="#c8c8c8"/><stop offset="1" stop-color="#6a6a6a"/></linearGradient></defs><rect x="3" y="0.5" width="9" height="4" fill="#eee" stroke="#b8b8b8" stroke-width="0.8"/><rect x="0.5" y="4" width="14" height="7" rx="1.5" fill="url(#pg1)" stroke="#999" stroke-width="0.8"/><rect x="3" y="10" width="9" height="4.5" fill="#e8e8e8" stroke="#aaa" stroke-width="0.8"/><circle cx="12.2" cy="6.5" r="0.9" fill="#5c5"/><circle cx="12.2" cy="8.8" r="0.9" fill="#ea3"/></svg>
<div class="t" id="t67" style="transform:scaleX(1.0666);right:1732px;top:25.99px;font-size:11.5px;color:#222;font-weight:normal;transform-origin:right center;">130</div>
<div class="t" id="t68" style="transform:scaleX(1.0664);left:171.5px;top:25.99px;font-size:11.5px;color:#222;font-weight:normal;">00208</div>
<div class="t" id="t69" style="transform:scaleX(0.9961);left:281.5px;top:25.99px;font-size:11.5px;color:#222;font-weight:normal;">Saco XYZ</div>
<div class="t" id="t70" style="transform:scaleX(1.0883);right:1327.5px;top:25.99px;font-size:11.5px;color:#222;font-weight:normal;transform-origin:right center;">1,00</div>
<svg style="position:absolute;left:565px;top:21.30px" width="24" height="21" viewBox="0 0 24 21"><ellipse cx="10" cy="18" rx="5.5" ry="0.9" fill="#000" opacity="0.10"/><g transform="translate(5.2,17.6) rotate(-45)"><line x1="0.3" y1="0" x2="8" y2="0" stroke="#8c8c8c" stroke-width="1.3"/><line x1="1.5" y1="-0.3" x2="7" y2="-0.3" stroke="#f0f0f0" stroke-width="0.6"/><path d="M7 -4.4 L8.2 -4.4 L10.8 -1.2 L10.8 1.2 L8.2 4.4 L7 4.4 Z" fill="#e03a42"/><path d="M10.8 -1.2 L12.6 -3.2 L15.9 -3.2 Q16.6 0 15.9 3.2 L12.6 3.2 L10.8 1.2 Z" fill="#e64c54"/><path d="M7.5 -3.6 L10.5 -0.6 L12.8 -2.5 L15.5 -2.5" fill="none" stroke="#f8a4a8" stroke-width="1"/><path d="M8 4 L10.8 1 L12.8 2.8 L15.6 2.8" fill="none" stroke="#b8202a" stroke-width="0.8"/></g></svg>
<div class="t" id="t71" style="transform:scaleX(1.1103);right:1272px;top:25.99px;font-size:11.5px;color:#222;font-weight:normal;transform-origin:right center;">mil</div>
<div class="t" id="t72" style="transform:scaleX(1.1320);left:631.5px;top:25.99px;font-size:11.5px;color:#222;font-weight:normal;">05/08/22</div>
<svg style="position:absolute;left:683px;top:21.30px" width="24" height="21" viewBox="0 0 24 21"><ellipse cx="10" cy="18" rx="5.5" ry="0.9" fill="#000" opacity="0.10"/><g transform="translate(5.2,17.6) rotate(-45)"><line x1="0.3" y1="0" x2="8" y2="0" stroke="#8c8c8c" stroke-width="1.3"/><line x1="1.5" y1="-0.3" x2="7" y2="-0.3" stroke="#f0f0f0" stroke-width="0.6"/><path d="M7 -4.4 L8.2 -4.4 L10.8 -1.2 L10.8 1.2 L8.2 4.4 L7 4.4 Z" fill="#e03a42"/><path d="M10.8 -1.2 L12.6 -3.2 L15.9 -3.2 Q16.6 0 15.9 3.2 L12.6 3.2 L10.8 1.2 Z" fill="#e64c54"/><path d="M7.5 -3.6 L10.5 -0.6 L12.8 -2.5 L15.5 -2.5" fill="none" stroke="#f8a4a8" stroke-width="1"/><path d="M8 4 L10.8 1 L12.8 2.8 L15.6 2.8" fill="none" stroke="#b8202a" stroke-width="0.8"/></g></svg>
<div class="t" id="t73" style="transform:scaleX(1.0712);left:721.5px;top:25.99px;font-size:11.5px;color:#222;font-weight:normal;">A produzir</div>
<div class="t" id="t74" style="transform:scaleX(1.0883);right:1037px;top:25.99px;font-size:11.5px;color:#222;font-weight:normal;transform-origin:right center;">0,00</div>
<div class="t" id="t75" style="transform:scaleX(1.0883);right:967px;top:25.99px;font-size:11.5px;color:#222;font-weight:normal;transform-origin:right center;">1,00</div>
<div class="t" id="t76" style="transform:scaleX(1.1141);left:936.5px;top:25.99px;font-size:11.5px;color:#1f6e1f;font-weight:normal;">143 #1 (1) Bombril</div>
<div style="position:absolute;left:0;top:42.600px;width:1369px;height:21.3px;background:#fff"></div>
<div style="position:absolute;left:38.0px;top:42.600px;width:1px;height:21.3px;background:#d3d7dc"></div>
<div style="position:absolute;left:76.0px;top:42.600px;width:1px;height:21.3px;background:#d3d7dc"></div>
<div style="position:absolute;left:104.0px;top:42.600px;width:1px;height:21.3px;background:#d3d7dc"></div>
<div style="position:absolute;left:164.0px;top:42.600px;width:1px;height:21.3px;background:#d3d7dc"></div>
<div style="position:absolute;left:274.0px;top:42.600px;width:1px;height:21.3px;background:#d3d7dc"></div>
<div style="position:absolute;left:494.0px;top:42.600px;width:1px;height:21.3px;background:#d3d7dc"></div>
<div style="position:absolute;left:594.0px;top:42.600px;width:1px;height:21.3px;background:#d3d7dc"></div>
<div style="position:absolute;left:624.0px;top:42.600px;width:1px;height:21.3px;background:#d3d7dc"></div>
<div style="position:absolute;left:714.0px;top:42.600px;width:1px;height:21.3px;background:#d3d7dc"></div>
<div style="position:absolute;left:789.0px;top:42.600px;width:1px;height:21.3px;background:#d3d7dc"></div>
<div style="position:absolute;left:859.0px;top:42.600px;width:1px;height:21.3px;background:#d3d7dc"></div>
<div style="position:absolute;left:929.0px;top:42.600px;width:1px;height:21.3px;background:#d3d7dc"></div>
<div style="position:absolute;left:12px;top:46.10px;width:13px;height:13px;background:#fff;box-sizing:border-box;border:1px solid #767676;border-radius:2px"></div>
<svg style="position:absolute;left:42px;top:50.60px" width="8" height="8" viewBox="0 0 8 8"><path d="M1.2 1.2 L6.8 6.8 M6.8 1.2 L1.2 6.8" stroke="#b82428" stroke-width="1.9"/></svg>
<svg style="position:absolute;left:55px;top:46.10px" width="15" height="15" viewBox="0 0 14 14"><path d="M2.5 9.5 L10.5 1.5 L12.5 3.5 L4.5 11.5 Z" fill="#f0a040"/><path d="M10.5 1.5 L12.5 3.5 L11.5 4.5 L9.5 2.5 Z" fill="#e88a30"/><path d="M2.5 9.5 L4.5 11.5 L1 13 Z" fill="#f6e0b0"/><path d="M1 13 L1.8 11.3 L2.7 12.2 Z" fill="#333"/></svg>
<svg style="position:absolute;left:83.5px;top:44.60px" width="15" height="15" viewBox="0 0 15 15"><defs><linearGradient id="pg2" x1="0" y1="0" x2="0" y2="1"><stop offset="0" stop-color="#f0f0f0"/><stop offset="0.6" stop-color="#c8c8c8"/><stop offset="1" stop-color="#6a6a6a"/></linearGradient></defs><rect x="3" y="0.5" width="9" height="4" fill="#eee" stroke="#b8b8b8" stroke-width="0.8"/><rect x="0.5" y="4" width="14" height="7" rx="1.5" fill="url(#pg2)" stroke="#999" stroke-width="0.8"/><rect x="3" y="10" width="9" height="4.5" fill="#e8e8e8" stroke="#aaa" stroke-width="0.8"/><circle cx="12.2" cy="6.5" r="0.9" fill="#5c5"/><circle cx="12.2" cy="8.8" r="0.9" fill="#ea3"/></svg>
<div class="t" id="t77" style="transform:scaleX(1.0666);right:1732px;top:47.29px;font-size:11.5px;color:#222;font-weight:normal;transform-origin:right center;">129</div>
<div class="t" id="t78" style="transform:scaleX(1.0664);left:171.5px;top:47.29px;font-size:11.5px;color:#222;font-weight:normal;">00208</div>
<div class="t" id="t79" style="transform:scaleX(0.9961);left:281.5px;top:47.29px;font-size:11.5px;color:#222;font-weight:normal;">Saco XYZ</div>
<div class="t" id="t80" style="transform:scaleX(1.0883);right:1327.5px;top:47.29px;font-size:11.5px;color:#222;font-weight:normal;transform-origin:right center;">1,00</div>
<svg style="position:absolute;left:565px;top:42.60px" width="24" height="21" viewBox="0 0 24 21"><ellipse cx="10" cy="18" rx="5.5" ry="0.9" fill="#000" opacity="0.10"/><g transform="translate(5.2,17.6) rotate(-45)"><line x1="0.3" y1="0" x2="8" y2="0" stroke="#8c8c8c" stroke-width="1.3"/><line x1="1.5" y1="-0.3" x2="7" y2="-0.3" stroke="#f0f0f0" stroke-width="0.6"/><path d="M7 -4.4 L8.2 -4.4 L10.8 -1.2 L10.8 1.2 L8.2 4.4 L7 4.4 Z" fill="#e03a42"/><path d="M10.8 -1.2 L12.6 -3.2 L15.9 -3.2 Q16.6 0 15.9 3.2 L12.6 3.2 L10.8 1.2 Z" fill="#e64c54"/><path d="M7.5 -3.6 L10.5 -0.6 L12.8 -2.5 L15.5 -2.5" fill="none" stroke="#f8a4a8" stroke-width="1"/><path d="M8 4 L10.8 1 L12.8 2.8 L15.6 2.8" fill="none" stroke="#b8202a" stroke-width="0.8"/></g></svg>
<div class="t" id="t81" style="transform:scaleX(1.1103);right:1272px;top:47.29px;font-size:11.5px;color:#222;font-weight:normal;transform-origin:right center;">mil</div>
<div class="t" id="t82" style="transform:scaleX(1.1320);left:631.5px;top:47.29px;font-size:11.5px;color:#222;font-weight:normal;">30/06/22</div>
<svg style="position:absolute;left:683px;top:42.60px" width="24" height="21" viewBox="0 0 24 21"><ellipse cx="10" cy="18" rx="5.5" ry="0.9" fill="#000" opacity="0.10"/><g transform="translate(5.2,17.6) rotate(-45)"><line x1="0.3" y1="0" x2="8" y2="0" stroke="#8c8c8c" stroke-width="1.3"/><line x1="1.5" y1="-0.3" x2="7" y2="-0.3" stroke="#f0f0f0" stroke-width="0.6"/><path d="M7 -4.4 L8.2 -4.4 L10.8 -1.2 L10.8 1.2 L8.2 4.4 L7 4.4 Z" fill="#e03a42"/><path d="M10.8 -1.2 L12.6 -3.2 L15.9 -3.2 Q16.6 0 15.9 3.2 L12.6 3.2 L10.8 1.2 Z" fill="#e64c54"/><path d="M7.5 -3.6 L10.5 -0.6 L12.8 -2.5 L15.5 -2.5" fill="none" stroke="#f8a4a8" stroke-width="1"/><path d="M8 4 L10.8 1 L12.8 2.8 L15.6 2.8" fill="none" stroke="#b8202a" stroke-width="0.8"/></g></svg>
<div class="t" id="t83" style="transform:scaleX(1.0712);left:721.5px;top:47.29px;font-size:11.5px;color:#222;font-weight:normal;">A produzir</div>
<div class="t" id="t84" style="transform:scaleX(1.0883);right:1037px;top:47.29px;font-size:11.5px;color:#222;font-weight:normal;transform-origin:right center;">0,00</div>
<div class="t" id="t85" style="transform:scaleX(1.0883);right:967px;top:47.29px;font-size:11.5px;color:#222;font-weight:normal;transform-origin:right center;">1,00</div>
<div class="t" id="t86" style="transform:scaleX(1.1141);left:936.5px;top:47.29px;font-size:11.5px;color:#1f6e1f;font-weight:normal;">142 #1 (1) Bombril</div>
<div style="position:absolute;left:0;top:63.900px;width:1369px;height:21.3px;background:#eff0f3"></div>
<div style="position:absolute;left:38.0px;top:63.900px;width:1px;height:21.3px;background:#d3d7dc"></div>
<div style="position:absolute;left:76.0px;top:63.900px;width:1px;height:21.3px;background:#d3d7dc"></div>
<div style="position:absolute;left:104.0px;top:63.900px;width:1px;height:21.3px;background:#d3d7dc"></div>
<div style="position:absolute;left:164.0px;top:63.900px;width:1px;height:21.3px;background:#d3d7dc"></div>
<div style="position:absolute;left:274.0px;top:63.900px;width:1px;height:21.3px;background:#d3d7dc"></div>
<div style="position:absolute;left:494.0px;top:63.900px;width:1px;height:21.3px;background:#d3d7dc"></div>
<div style="position:absolute;left:594.0px;top:63.900px;width:1px;height:21.3px;background:#d3d7dc"></div>
<div style="position:absolute;left:624.0px;top:63.900px;width:1px;height:21.3px;background:#d3d7dc"></div>
<div style="position:absolute;left:714.0px;top:63.900px;width:1px;height:21.3px;background:#d3d7dc"></div>
<div style="position:absolute;left:789.0px;top:63.900px;width:1px;height:21.3px;background:#d3d7dc"></div>
<div style="position:absolute;left:859.0px;top:63.900px;width:1px;height:21.3px;background:#d3d7dc"></div>
<div style="position:absolute;left:929.0px;top:63.900px;width:1px;height:21.3px;background:#d3d7dc"></div>
<div style="position:absolute;left:12px;top:67.40px;width:13px;height:13px;background:#fff;box-sizing:border-box;border:1px solid #767676;border-radius:2px"></div>
<svg style="position:absolute;left:42px;top:71.90px" width="8" height="8" viewBox="0 0 8 8"><path d="M1.2 1.2 L6.8 6.8 M6.8 1.2 L1.2 6.8" stroke="#b82428" stroke-width="1.9"/></svg>
<svg style="position:absolute;left:55px;top:67.40px" width="15" height="15" viewBox="0 0 14 14"><path d="M2.5 9.5 L10.5 1.5 L12.5 3.5 L4.5 11.5 Z" fill="#f0a040"/><path d="M10.5 1.5 L12.5 3.5 L11.5 4.5 L9.5 2.5 Z" fill="#e88a30"/><path d="M2.5 9.5 L4.5 11.5 L1 13 Z" fill="#f6e0b0"/><path d="M1 13 L1.8 11.3 L2.7 12.2 Z" fill="#333"/></svg>
<svg style="position:absolute;left:83.5px;top:65.90px" width="15" height="15" viewBox="0 0 15 15"><defs><linearGradient id="pg3" x1="0" y1="0" x2="0" y2="1"><stop offset="0" stop-color="#f0f0f0"/><stop offset="0.6" stop-color="#c8c8c8"/><stop offset="1" stop-color="#6a6a6a"/></linearGradient></defs><rect x="3" y="0.5" width="9" height="4" fill="#eee" stroke="#b8b8b8" stroke-width="0.8"/><rect x="0.5" y="4" width="14" height="7" rx="1.5" fill="url(#pg3)" stroke="#999" stroke-width="0.8"/><rect x="3" y="10" width="9" height="4.5" fill="#e8e8e8" stroke="#aaa" stroke-width="0.8"/><circle cx="12.2" cy="6.5" r="0.9" fill="#5c5"/><circle cx="12.2" cy="8.8" r="0.9" fill="#ea3"/></svg>
<div class="t" id="t87" style="transform:scaleX(1.0666);right:1732px;top:68.59px;font-size:11.5px;color:#222;font-weight:normal;transform-origin:right center;">128</div>
<div class="t" id="t88" style="transform:scaleX(1.0664);left:171.5px;top:68.59px;font-size:11.5px;color:#222;font-weight:normal;">00208</div>
<div class="t" id="t89" style="transform:scaleX(0.9961);left:281.5px;top:68.59px;font-size:11.5px;color:#222;font-weight:normal;">Saco XYZ</div>
<div class="t" id="t90" style="transform:scaleX(1.0883);right:1327.5px;top:68.59px;font-size:11.5px;color:#222;font-weight:normal;transform-origin:right center;">1,00</div>
<svg style="position:absolute;left:565px;top:63.90px" width="24" height="21" viewBox="0 0 24 21"><ellipse cx="10" cy="18" rx="5.5" ry="0.9" fill="#000" opacity="0.10"/><g transform="translate(5.2,17.6) rotate(-45)"><line x1="0.3" y1="0" x2="8" y2="0" stroke="#8c8c8c" stroke-width="1.3"/><line x1="1.5" y1="-0.3" x2="7" y2="-0.3" stroke="#f0f0f0" stroke-width="0.6"/><path d="M7 -4.4 L8.2 -4.4 L10.8 -1.2 L10.8 1.2 L8.2 4.4 L7 4.4 Z" fill="#e03a42"/><path d="M10.8 -1.2 L12.6 -3.2 L15.9 -3.2 Q16.6 0 15.9 3.2 L12.6 3.2 L10.8 1.2 Z" fill="#e64c54"/><path d="M7.5 -3.6 L10.5 -0.6 L12.8 -2.5 L15.5 -2.5" fill="none" stroke="#f8a4a8" stroke-width="1"/><path d="M8 4 L10.8 1 L12.8 2.8 L15.6 2.8" fill="none" stroke="#b8202a" stroke-width="0.8"/></g></svg>
<div class="t" id="t91" style="transform:scaleX(1.1103);right:1272px;top:68.59px;font-size:11.5px;color:#222;font-weight:normal;transform-origin:right center;">mil</div>
<div class="t" id="t92" style="transform:scaleX(1.1320);left:631.5px;top:68.59px;font-size:11.5px;color:#222;font-weight:normal;">01/07/22</div>
<svg style="position:absolute;left:683px;top:63.90px" width="24" height="21" viewBox="0 0 24 21"><ellipse cx="10" cy="18" rx="5.5" ry="0.9" fill="#000" opacity="0.10"/><g transform="translate(5.2,17.6) rotate(-45)"><line x1="0.3" y1="0" x2="8" y2="0" stroke="#8c8c8c" stroke-width="1.3"/><line x1="1.5" y1="-0.3" x2="7" y2="-0.3" stroke="#f0f0f0" stroke-width="0.6"/><path d="M7 -4.4 L8.2 -4.4 L10.8 -1.2 L10.8 1.2 L8.2 4.4 L7 4.4 Z" fill="#e03a42"/><path d="M10.8 -1.2 L12.6 -3.2 L15.9 -3.2 Q16.6 0 15.9 3.2 L12.6 3.2 L10.8 1.2 Z" fill="#e64c54"/><path d="M7.5 -3.6 L10.5 -0.6 L12.8 -2.5 L15.5 -2.5" fill="none" stroke="#f8a4a8" stroke-width="1"/><path d="M8 4 L10.8 1 L12.8 2.8 L15.6 2.8" fill="none" stroke="#b8202a" stroke-width="0.8"/></g></svg>
<div class="t" id="t93" style="transform:scaleX(1.0712);left:721.5px;top:68.59px;font-size:11.5px;color:#222;font-weight:normal;">A produzir</div>
<div class="t" id="t94" style="transform:scaleX(1.0883);right:1037px;top:68.59px;font-size:11.5px;color:#222;font-weight:normal;transform-origin:right center;">0,00</div>
<div class="t" id="t95" style="transform:scaleX(1.0883);right:967px;top:68.59px;font-size:11.5px;color:#222;font-weight:normal;transform-origin:right center;">1,00</div>
<div class="t" id="t96" style="transform:scaleX(1.1141);left:936.5px;top:68.59px;font-size:11.5px;color:#1f6e1f;font-weight:normal;">141 #1 (1) Bombril</div>
<div style="position:absolute;left:0;top:85.200px;width:1369px;height:21.3px;background:#fff"></div>
<div style="position:absolute;left:38.0px;top:85.200px;width:1px;height:21.3px;background:#d3d7dc"></div>
<div style="position:absolute;left:76.0px;top:85.200px;width:1px;height:21.3px;background:#d3d7dc"></div>
<div style="position:absolute;left:104.0px;top:85.200px;width:1px;height:21.3px;background:#d3d7dc"></div>
<div style="position:absolute;left:164.0px;top:85.200px;width:1px;height:21.3px;background:#d3d7dc"></div>
<div style="position:absolute;left:274.0px;top:85.200px;width:1px;height:21.3px;background:#d3d7dc"></div>
<div style="position:absolute;left:494.0px;top:85.200px;width:1px;height:21.3px;background:#d3d7dc"></div>
<div style="position:absolute;left:594.0px;top:85.200px;width:1px;height:21.3px;background:#d3d7dc"></div>
<div style="position:absolute;left:624.0px;top:85.200px;width:1px;height:21.3px;background:#d3d7dc"></div>
<div style="position:absolute;left:714.0px;top:85.200px;width:1px;height:21.3px;background:#d3d7dc"></div>
<div style="position:absolute;left:789.0px;top:85.200px;width:1px;height:21.3px;background:#d3d7dc"></div>
<div style="position:absolute;left:859.0px;top:85.200px;width:1px;height:21.3px;background:#d3d7dc"></div>
<div style="position:absolute;left:929.0px;top:85.200px;width:1px;height:21.3px;background:#d3d7dc"></div>
<div style="position:absolute;left:12px;top:88.70px;width:13px;height:13px;background:#fff;box-sizing:border-box;border:1px solid #767676;border-radius:2px"></div>
<svg style="position:absolute;left:42px;top:93.20px" width="8" height="8" viewBox="0 0 8 8"><path d="M1.2 1.2 L6.8 6.8 M6.8 1.2 L1.2 6.8" stroke="#b82428" stroke-width="1.9"/></svg>
<svg style="position:absolute;left:55px;top:88.70px" width="15" height="15" viewBox="0 0 14 14"><path d="M2.5 9.5 L10.5 1.5 L12.5 3.5 L4.5 11.5 Z" fill="#f0a040"/><path d="M10.5 1.5 L12.5 3.5 L11.5 4.5 L9.5 2.5 Z" fill="#e88a30"/><path d="M2.5 9.5 L4.5 11.5 L1 13 Z" fill="#f6e0b0"/><path d="M1 13 L1.8 11.3 L2.7 12.2 Z" fill="#333"/></svg>
<svg style="position:absolute;left:83.5px;top:87.20px" width="15" height="15" viewBox="0 0 15 15"><defs><linearGradient id="pg4" x1="0" y1="0" x2="0" y2="1"><stop offset="0" stop-color="#f0f0f0"/><stop offset="0.6" stop-color="#c8c8c8"/><stop offset="1" stop-color="#6a6a6a"/></linearGradient></defs><rect x="3" y="0.5" width="9" height="4" fill="#eee" stroke="#b8b8b8" stroke-width="0.8"/><rect x="0.5" y="4" width="14" height="7" rx="1.5" fill="url(#pg4)" stroke="#999" stroke-width="0.8"/><rect x="3" y="10" width="9" height="4.5" fill="#e8e8e8" stroke="#aaa" stroke-width="0.8"/><circle cx="12.2" cy="6.5" r="0.9" fill="#5c5"/><circle cx="12.2" cy="8.8" r="0.9" fill="#ea3"/></svg>
<div class="t" id="t97" style="transform:scaleX(1.0666);right:1732px;top:89.89px;font-size:11.5px;color:#222;font-weight:normal;transform-origin:right center;">125</div>
<div class="t" id="t98" style="transform:scaleX(1.0664);left:171.5px;top:89.89px;font-size:11.5px;color:#222;font-weight:normal;">00031</div>
<div class="t" id="t99" style="transform:scaleX(1.1196);left:281.5px;top:89.89px;font-size:11.5px;color:#222;font-weight:normal;">Item-pai</div>
<div class="t" id="t100" style="transform:scaleX(1.0883);right:1327.5px;top:89.89px;font-size:11.5px;color:#222;font-weight:normal;transform-origin:right center;">1,00</div>
<svg style="position:absolute;left:565px;top:85.20px" width="24" height="21" viewBox="0 0 24 21"><ellipse cx="10" cy="18" rx="5.5" ry="0.9" fill="#000" opacity="0.10"/><g transform="translate(5.2,17.6) rotate(-45)"><line x1="0.3" y1="0" x2="8" y2="0" stroke="#8c8c8c" stroke-width="1.3"/><line x1="1.5" y1="-0.3" x2="7" y2="-0.3" stroke="#f0f0f0" stroke-width="0.6"/><path d="M7 -4.4 L8.2 -4.4 L10.8 -1.2 L10.8 1.2 L8.2 4.4 L7 4.4 Z" fill="#e03a42"/><path d="M10.8 -1.2 L12.6 -3.2 L15.9 -3.2 Q16.6 0 15.9 3.2 L12.6 3.2 L10.8 1.2 Z" fill="#e64c54"/><path d="M7.5 -3.6 L10.5 -0.6 L12.8 -2.5 L15.5 -2.5" fill="none" stroke="#f8a4a8" stroke-width="1"/><path d="M8 4 L10.8 1 L12.8 2.8 L15.6 2.8" fill="none" stroke="#b8202a" stroke-width="0.8"/></g></svg>
<div class="t" id="t101" style="transform:scaleX(1.0612);right:1272px;top:89.89px;font-size:11.5px;color:#222;font-weight:normal;transform-origin:right center;">un</div>
<div class="t" id="t102" style="transform:scaleX(1.1320);left:631.5px;top:89.89px;font-size:11.5px;color:#222;font-weight:normal;">27/05/22</div>
<svg style="position:absolute;left:683px;top:85.20px" width="24" height="21" viewBox="0 0 24 21"><ellipse cx="10" cy="18" rx="5.5" ry="0.9" fill="#000" opacity="0.10"/><g transform="translate(5.2,17.6) rotate(-45)"><line x1="0.3" y1="0" x2="8" y2="0" stroke="#8c8c8c" stroke-width="1.3"/><line x1="1.5" y1="-0.3" x2="7" y2="-0.3" stroke="#f0f0f0" stroke-width="0.6"/><path d="M7 -4.4 L8.2 -4.4 L10.8 -1.2 L10.8 1.2 L8.2 4.4 L7 4.4 Z" fill="#e03a42"/><path d="M10.8 -1.2 L12.6 -3.2 L15.9 -3.2 Q16.6 0 15.9 3.2 L12.6 3.2 L10.8 1.2 Z" fill="#e64c54"/><path d="M7.5 -3.6 L10.5 -0.6 L12.8 -2.5 L15.5 -2.5" fill="none" stroke="#f8a4a8" stroke-width="1"/><path d="M8 4 L10.8 1 L12.8 2.8 L15.6 2.8" fill="none" stroke="#b8202a" stroke-width="0.8"/></g></svg>
<div class="t" id="t103" style="transform:scaleX(1.0712);left:721.5px;top:89.89px;font-size:11.5px;color:#222;font-weight:normal;">A produzir</div>
<div class="t" id="t104" style="transform:scaleX(1.0883);right:1037px;top:89.89px;font-size:11.5px;color:#222;font-weight:normal;transform-origin:right center;">0,00</div>
<div class="t" id="t105" style="transform:scaleX(1.0883);right:967px;top:89.89px;font-size:11.5px;color:#222;font-weight:normal;transform-origin:right center;">1,00</div>
<div class="t" id="t106" style="transform:scaleX(1.1037);left:936.5px;top:89.89px;font-size:11.5px;color:#1f6e1f;font-weight:normal;">34 #1 (1) Cliente 123</div>
<div style="position:absolute;left:0;top:106.500px;width:1369px;height:21.3px;background:#eff0f3"></div>
<div style="position:absolute;left:38.0px;top:106.500px;width:1px;height:21.3px;background:#d3d7dc"></div>
<div style="position:absolute;left:76.0px;top:106.500px;width:1px;height:21.3px;background:#d3d7dc"></div>
<div style="position:absolute;left:104.0px;top:106.500px;width:1px;height:21.3px;background:#d3d7dc"></div>
<div style="position:absolute;left:164.0px;top:106.500px;width:1px;height:21.3px;background:#d3d7dc"></div>
<div style="position:absolute;left:274.0px;top:106.500px;width:1px;height:21.3px;background:#d3d7dc"></div>
<div style="position:absolute;left:494.0px;top:106.500px;width:1px;height:21.3px;background:#d3d7dc"></div>
<div style="position:absolute;left:594.0px;top:106.500px;width:1px;height:21.3px;background:#d3d7dc"></div>
<div style="position:absolute;left:624.0px;top:106.500px;width:1px;height:21.3px;background:#d3d7dc"></div>
<div style="position:absolute;left:714.0px;top:106.500px;width:1px;height:21.3px;background:#d3d7dc"></div>
<div style="position:absolute;left:789.0px;top:106.500px;width:1px;height:21.3px;background:#d3d7dc"></div>
<div style="position:absolute;left:859.0px;top:106.500px;width:1px;height:21.3px;background:#d3d7dc"></div>
<div style="position:absolute;left:929.0px;top:106.500px;width:1px;height:21.3px;background:#d3d7dc"></div>
<div style="position:absolute;left:12px;top:110.00px;width:13px;height:13px;background:#fff;box-sizing:border-box;border:1px solid #767676;border-radius:2px"></div>
<svg style="position:absolute;left:42px;top:114.50px" width="8" height="8" viewBox="0 0 8 8"><path d="M1.2 1.2 L6.8 6.8 M6.8 1.2 L1.2 6.8" stroke="#b82428" stroke-width="1.9"/></svg>
<svg style="position:absolute;left:55px;top:110.00px" width="15" height="15" viewBox="0 0 14 14"><path d="M2.5 9.5 L10.5 1.5 L12.5 3.5 L4.5 11.5 Z" fill="#f0a040"/><path d="M10.5 1.5 L12.5 3.5 L11.5 4.5 L9.5 2.5 Z" fill="#e88a30"/><path d="M2.5 9.5 L4.5 11.5 L1 13 Z" fill="#f6e0b0"/><path d="M1 13 L1.8 11.3 L2.7 12.2 Z" fill="#333"/></svg>
<svg style="position:absolute;left:83.5px;top:108.50px" width="15" height="15" viewBox="0 0 15 15"><defs><linearGradient id="pg5" x1="0" y1="0" x2="0" y2="1"><stop offset="0" stop-color="#f0f0f0"/><stop offset="0.6" stop-color="#c8c8c8"/><stop offset="1" stop-color="#6a6a6a"/></linearGradient></defs><rect x="3" y="0.5" width="9" height="4" fill="#eee" stroke="#b8b8b8" stroke-width="0.8"/><rect x="0.5" y="4" width="14" height="7" rx="1.5" fill="url(#pg5)" stroke="#999" stroke-width="0.8"/><rect x="3" y="10" width="9" height="4.5" fill="#e8e8e8" stroke="#aaa" stroke-width="0.8"/><circle cx="12.2" cy="6.5" r="0.9" fill="#5c5"/><circle cx="12.2" cy="8.8" r="0.9" fill="#ea3"/></svg>
<div class="t" id="t107" style="transform:scaleX(1.0666);right:1732px;top:111.19px;font-size:11.5px;color:#222;font-weight:normal;transform-origin:right center;">124</div>
<div class="t" id="t108" style="transform:scaleX(1.0664);left:171.5px;top:111.19px;font-size:11.5px;color:#222;font-weight:normal;">00199</div>
<div class="t" id="t109" style="transform:scaleX(1.0648);left:281.5px;top:111.19px;font-size:11.5px;color:#222;font-weight:normal;">Eletrocentro Teste</div>
<div class="t" id="t110" style="transform:scaleX(1.0802);right:1327.5px;top:111.19px;font-size:11.5px;color:#222;font-weight:normal;transform-origin:right center;">100,00</div>
<svg style="position:absolute;left:565px;top:106.50px" width="24" height="21" viewBox="0 0 24 21"><ellipse cx="10" cy="18" rx="5.5" ry="0.9" fill="#000" opacity="0.10"/><g transform="translate(5.2,17.6) rotate(-45)"><line x1="0.3" y1="0" x2="8" y2="0" stroke="#8c8c8c" stroke-width="1.3"/><line x1="1.5" y1="-0.3" x2="7" y2="-0.3" stroke="#f0f0f0" stroke-width="0.6"/><path d="M7 -4.4 L8.2 -4.4 L10.8 -1.2 L10.8 1.2 L8.2 4.4 L7 4.4 Z" fill="#e03a42"/><path d="M10.8 -1.2 L12.6 -3.2 L15.9 -3.2 Q16.6 0 15.9 3.2 L12.6 3.2 L10.8 1.2 Z" fill="#e64c54"/><path d="M7.5 -3.6 L10.5 -0.6 L12.8 -2.5 L15.5 -2.5" fill="none" stroke="#f8a4a8" stroke-width="1"/><path d="M8 4 L10.8 1 L12.8 2.8 L15.6 2.8" fill="none" stroke="#b8202a" stroke-width="0.8"/></g></svg>
<div class="t" id="t111" style="transform:scaleX(1.0612);right:1272px;top:111.19px;font-size:11.5px;color:#222;font-weight:normal;transform-origin:right center;">un</div>
<div class="t" id="t112" style="transform:scaleX(1.1320);left:631.5px;top:111.19px;font-size:11.5px;color:#222;font-weight:normal;">31/07/22</div>
<svg style="position:absolute;left:683px;top:106.50px" width="24" height="21" viewBox="0 0 24 21"><ellipse cx="10" cy="18" rx="5.5" ry="0.9" fill="#000" opacity="0.10"/><g transform="translate(5.2,17.6) rotate(-45)"><line x1="0.3" y1="0" x2="8" y2="0" stroke="#8c8c8c" stroke-width="1.3"/><line x1="1.5" y1="-0.3" x2="7" y2="-0.3" stroke="#f0f0f0" stroke-width="0.6"/><path d="M7 -4.4 L8.2 -4.4 L10.8 -1.2 L10.8 1.2 L8.2 4.4 L7 4.4 Z" fill="#e03a42"/><path d="M10.8 -1.2 L12.6 -3.2 L15.9 -3.2 Q16.6 0 15.9 3.2 L12.6 3.2 L10.8 1.2 Z" fill="#e64c54"/><path d="M7.5 -3.6 L10.5 -0.6 L12.8 -2.5 L15.5 -2.5" fill="none" stroke="#f8a4a8" stroke-width="1"/><path d="M8 4 L10.8 1 L12.8 2.8 L15.6 2.8" fill="none" stroke="#b8202a" stroke-width="0.8"/></g></svg>
<div class="t" id="t113" style="transform:scaleX(1.0712);left:721.5px;top:111.19px;font-size:11.5px;color:#222;font-weight:normal;">A produzir</div>
<div class="t" id="t114" style="transform:scaleX(1.0883);right:1037px;top:111.19px;font-size:11.5px;color:#222;font-weight:normal;transform-origin:right center;">0,00</div>
<div class="t" id="t115" style="transform:scaleX(1.0802);right:967px;top:111.19px;font-size:11.5px;color:#222;font-weight:normal;transform-origin:right center;">100,00</div>
<div style="position:absolute;left:0;top:127.800px;width:1369px;height:21.3px;background:#fff"></div>
<div style="position:absolute;left:38.0px;top:127.800px;width:1px;height:21.3px;background:#d3d7dc"></div>
<div style="position:absolute;left:76.0px;top:127.800px;width:1px;height:21.3px;background:#d3d7dc"></div>
<div style="position:absolute;left:104.0px;top:127.800px;width:1px;height:21.3px;background:#d3d7dc"></div>
<div style="position:absolute;left:164.0px;top:127.800px;width:1px;height:21.3px;background:#d3d7dc"></div>
<div style="position:absolute;left:274.0px;top:127.800px;width:1px;height:21.3px;background:#d3d7dc"></div>
<div style="position:absolute;left:494.0px;top:127.800px;width:1px;height:21.3px;background:#d3d7dc"></div>
<div style="position:absolute;left:594.0px;top:127.800px;width:1px;height:21.3px;background:#d3d7dc"></div>
<div style="position:absolute;left:624.0px;top:127.800px;width:1px;height:21.3px;background:#d3d7dc"></div>
<div style="position:absolute;left:714.0px;top:127.800px;width:1px;height:21.3px;background:#d3d7dc"></div>
<div style="position:absolute;left:789.0px;top:127.800px;width:1px;height:21.3px;background:#d3d7dc"></div>
<div style="position:absolute;left:859.0px;top:127.800px;width:1px;height:21.3px;background:#d3d7dc"></div>
<div style="position:absolute;left:929.0px;top:127.800px;width:1px;height:21.3px;background:#d3d7dc"></div>
<div style="position:absolute;left:12px;top:131.30px;width:13px;height:13px;background:#fff;box-sizing:border-box;border:1px solid #767676;border-radius:2px"></div>
<svg style="position:absolute;left:42px;top:135.80px" width="8" height="8" viewBox="0 0 8 8"><path d="M1.2 1.2 L6.8 6.8 M6.8 1.2 L1.2 6.8" stroke="#b82428" stroke-width="1.9"/></svg>
<svg style="position:absolute;left:55px;top:131.30px" width="15" height="15" viewBox="0 0 14 14"><path d="M2.5 9.5 L10.5 1.5 L12.5 3.5 L4.5 11.5 Z" fill="#f0a040"/><path d="M10.5 1.5 L12.5 3.5 L11.5 4.5 L9.5 2.5 Z" fill="#e88a30"/><path d="M2.5 9.5 L4.5 11.5 L1 13 Z" fill="#f6e0b0"/><path d="M1 13 L1.8 11.3 L2.7 12.2 Z" fill="#333"/></svg>
<svg style="position:absolute;left:83.5px;top:129.80px" width="15" height="15" viewBox="0 0 15 15"><defs><linearGradient id="pg6" x1="0" y1="0" x2="0" y2="1"><stop offset="0" stop-color="#f0f0f0"/><stop offset="0.6" stop-color="#c8c8c8"/><stop offset="1" stop-color="#6a6a6a"/></linearGradient></defs><rect x="3" y="0.5" width="9" height="4" fill="#eee" stroke="#b8b8b8" stroke-width="0.8"/><rect x="0.5" y="4" width="14" height="7" rx="1.5" fill="url(#pg6)" stroke="#999" stroke-width="0.8"/><rect x="3" y="10" width="9" height="4.5" fill="#e8e8e8" stroke="#aaa" stroke-width="0.8"/><circle cx="12.2" cy="6.5" r="0.9" fill="#5c5"/><circle cx="12.2" cy="8.8" r="0.9" fill="#ea3"/></svg>
<div class="t" id="t116" style="transform:scaleX(1.0666);right:1732px;top:132.49px;font-size:11.5px;color:#222;font-weight:normal;transform-origin:right center;">123</div>
<div class="t" id="t117" style="transform:scaleX(1.0664);left:171.5px;top:132.49px;font-size:11.5px;color:#222;font-weight:normal;">00199</div>
<div class="t" id="t118" style="transform:scaleX(1.0648);left:281.5px;top:132.49px;font-size:11.5px;color:#222;font-weight:normal;">Eletrocentro Teste</div>
<div class="t" id="t119" style="transform:scaleX(1.0802);right:1327.5px;top:132.49px;font-size:11.5px;color:#222;font-weight:normal;transform-origin:right center;">100,00</div>
<svg style="position:absolute;left:565px;top:127.80px" width="24" height="21" viewBox="0 0 24 21"><ellipse cx="10" cy="18" rx="5.5" ry="0.9" fill="#000" opacity="0.10"/><g transform="translate(5.2,17.6) rotate(-45)"><line x1="0.3" y1="0" x2="8" y2="0" stroke="#8c8c8c" stroke-width="1.3"/><line x1="1.5" y1="-0.3" x2="7" y2="-0.3" stroke="#f0f0f0" stroke-width="0.6"/><path d="M7 -4.4 L8.2 -4.4 L10.8 -1.2 L10.8 1.2 L8.2 4.4 L7 4.4 Z" fill="#e03a42"/><path d="M10.8 -1.2 L12.6 -3.2 L15.9 -3.2 Q16.6 0 15.9 3.2 L12.6 3.2 L10.8 1.2 Z" fill="#e64c54"/><path d="M7.5 -3.6 L10.5 -0.6 L12.8 -2.5 L15.5 -2.5" fill="none" stroke="#f8a4a8" stroke-width="1"/><path d="M8 4 L10.8 1 L12.8 2.8 L15.6 2.8" fill="none" stroke="#b8202a" stroke-width="0.8"/></g></svg>
<div class="t" id="t120" style="transform:scaleX(1.0612);right:1272px;top:132.49px;font-size:11.5px;color:#222;font-weight:normal;transform-origin:right center;">un</div>
<div class="t" id="t121" style="transform:scaleX(1.1320);left:631.5px;top:132.49px;font-size:11.5px;color:#222;font-weight:normal;">31/07/22</div>
<svg style="position:absolute;left:683px;top:127.80px" width="24" height="21" viewBox="0 0 24 21"><ellipse cx="10" cy="18" rx="5.5" ry="0.9" fill="#000" opacity="0.10"/><g transform="translate(5.2,17.6) rotate(-45)"><line x1="0.3" y1="0" x2="8" y2="0" stroke="#8c8c8c" stroke-width="1.3"/><line x1="1.5" y1="-0.3" x2="7" y2="-0.3" stroke="#f0f0f0" stroke-width="0.6"/><path d="M7 -4.4 L8.2 -4.4 L10.8 -1.2 L10.8 1.2 L8.2 4.4 L7 4.4 Z" fill="#e03a42"/><path d="M10.8 -1.2 L12.6 -3.2 L15.9 -3.2 Q16.6 0 15.9 3.2 L12.6 3.2 L10.8 1.2 Z" fill="#e64c54"/><path d="M7.5 -3.6 L10.5 -0.6 L12.8 -2.5 L15.5 -2.5" fill="none" stroke="#f8a4a8" stroke-width="1"/><path d="M8 4 L10.8 1 L12.8 2.8 L15.6 2.8" fill="none" stroke="#b8202a" stroke-width="0.8"/></g></svg>
<div class="t" id="t122" style="transform:scaleX(1.0712);left:721.5px;top:132.49px;font-size:11.5px;color:#222;font-weight:normal;">A produzir</div>
<div class="t" id="t123" style="transform:scaleX(1.0883);right:1037px;top:132.49px;font-size:11.5px;color:#222;font-weight:normal;transform-origin:right center;">0,00</div>
<div class="t" id="t124" style="transform:scaleX(1.0802);right:967px;top:132.49px;font-size:11.5px;color:#222;font-weight:normal;transform-origin:right center;">100,00</div>
<div style="position:absolute;left:0;top:149.100px;width:1369px;height:21.3px;background:#eff0f3"></div>
<div style="position:absolute;left:38.0px;top:149.100px;width:1px;height:21.3px;background:#d3d7dc"></div>
<div style="position:absolute;left:76.0px;top:149.100px;width:1px;height:21.3px;background:#d3d7dc"></div>
<div style="position:absolute;left:104.0px;top:149.100px;width:1px;height:21.3px;background:#d3d7dc"></div>
<div style="position:absolute;left:164.0px;top:149.100px;width:1px;height:21.3px;background:#d3d7dc"></div>
<div style="position:absolute;left:274.0px;top:149.100px;width:1px;height:21.3px;background:#d3d7dc"></div>
<div style="position:absolute;left:494.0px;top:149.100px;width:1px;height:21.3px;background:#d3d7dc"></div>
<div style="position:absolute;left:594.0px;top:149.100px;width:1px;height:21.3px;background:#d3d7dc"></div>
<div style="position:absolute;left:624.0px;top:149.100px;width:1px;height:21.3px;background:#d3d7dc"></div>
<div style="position:absolute;left:714.0px;top:149.100px;width:1px;height:21.3px;background:#d3d7dc"></div>
<div style="position:absolute;left:789.0px;top:149.100px;width:1px;height:21.3px;background:#d3d7dc"></div>
<div style="position:absolute;left:859.0px;top:149.100px;width:1px;height:21.3px;background:#d3d7dc"></div>
<div style="position:absolute;left:929.0px;top:149.100px;width:1px;height:21.3px;background:#d3d7dc"></div>
<div style="position:absolute;left:12px;top:152.60px;width:13px;height:13px;background:#fff;box-sizing:border-box;border:1px solid #767676;border-radius:2px"></div>
<svg style="position:absolute;left:42px;top:157.10px" width="8" height="8" viewBox="0 0 8 8"><path d="M1.2 1.2 L6.8 6.8 M6.8 1.2 L1.2 6.8" stroke="#b82428" stroke-width="1.9"/></svg>
<svg style="position:absolute;left:55px;top:152.60px" width="15" height="15" viewBox="0 0 14 14"><path d="M2.5 9.5 L10.5 1.5 L12.5 3.5 L4.5 11.5 Z" fill="#f0a040"/><path d="M10.5 1.5 L12.5 3.5 L11.5 4.5 L9.5 2.5 Z" fill="#e88a30"/><path d="M2.5 9.5 L4.5 11.5 L1 13 Z" fill="#f6e0b0"/><path d="M1 13 L1.8 11.3 L2.7 12.2 Z" fill="#333"/></svg>
<svg style="position:absolute;left:83.5px;top:151.10px" width="15" height="15" viewBox="0 0 15 15"><defs><linearGradient id="pg7" x1="0" y1="0" x2="0" y2="1"><stop offset="0" stop-color="#f0f0f0"/><stop offset="0.6" stop-color="#c8c8c8"/><stop offset="1" stop-color="#6a6a6a"/></linearGradient></defs><rect x="3" y="0.5" width="9" height="4" fill="#eee" stroke="#b8b8b8" stroke-width="0.8"/><rect x="0.5" y="4" width="14" height="7" rx="1.5" fill="url(#pg7)" stroke="#999" stroke-width="0.8"/><rect x="3" y="10" width="9" height="4.5" fill="#e8e8e8" stroke="#aaa" stroke-width="0.8"/><circle cx="12.2" cy="6.5" r="0.9" fill="#5c5"/><circle cx="12.2" cy="8.8" r="0.9" fill="#ea3"/></svg>
<div class="t" id="t125" style="transform:scaleX(1.0666);right:1732px;top:153.79px;font-size:11.5px;color:#222;font-weight:normal;transform-origin:right center;">121</div>
<div class="t" id="t126" style="transform:scaleX(1.0664);left:171.5px;top:153.79px;font-size:11.5px;color:#222;font-weight:normal;">00196</div>
<div class="t" id="t127" style="transform:scaleX(1.0008);left:281.5px;top:153.79px;font-size:11.5px;color:#222;font-weight:normal;">LT-TP</div>
<div class="t" id="t128" style="transform:scaleX(1.0883);right:1327.5px;top:153.79px;font-size:11.5px;color:#222;font-weight:normal;transform-origin:right center;">5,00</div>
<svg style="position:absolute;left:565px;top:149.10px" width="24" height="21" viewBox="0 0 24 21"><ellipse cx="10" cy="18" rx="5.5" ry="0.9" fill="#000" opacity="0.10"/><g transform="translate(5.2,17.6) rotate(-45)"><line x1="0.3" y1="0" x2="8" y2="0" stroke="#8c8c8c" stroke-width="1.3"/><line x1="1.5" y1="-0.3" x2="7" y2="-0.3" stroke="#f0f0f0" stroke-width="0.6"/><path d="M7 -4.4 L8.2 -4.4 L10.8 -1.2 L10.8 1.2 L8.2 4.4 L7 4.4 Z" fill="#e03a42"/><path d="M10.8 -1.2 L12.6 -3.2 L15.9 -3.2 Q16.6 0 15.9 3.2 L12.6 3.2 L10.8 1.2 Z" fill="#e64c54"/><path d="M7.5 -3.6 L10.5 -0.6 L12.8 -2.5 L15.5 -2.5" fill="none" stroke="#f8a4a8" stroke-width="1"/><path d="M8 4 L10.8 1 L12.8 2.8 L15.6 2.8" fill="none" stroke="#b8202a" stroke-width="0.8"/></g></svg>
<div class="t" id="t129" style="transform:scaleX(1.0612);right:1272px;top:153.79px;font-size:11.5px;color:#222;font-weight:normal;transform-origin:right center;">un</div>
<div class="t" id="t130" style="transform:scaleX(1.1320);left:631.5px;top:153.79px;font-size:11.5px;color:#222;font-weight:normal;">25/03/22</div>
<svg style="position:absolute;left:683px;top:149.10px" width="24" height="21" viewBox="0 0 24 21"><ellipse cx="10" cy="18" rx="5.5" ry="0.9" fill="#000" opacity="0.10"/><g transform="translate(5.2,17.6) rotate(-45)"><line x1="0.3" y1="0" x2="8" y2="0" stroke="#8c8c8c" stroke-width="1.3"/><line x1="1.5" y1="-0.3" x2="7" y2="-0.3" stroke="#f0f0f0" stroke-width="0.6"/><path d="M7 -4.4 L8.2 -4.4 L10.8 -1.2 L10.8 1.2 L8.2 4.4 L7 4.4 Z" fill="#e03a42"/><path d="M10.8 -1.2 L12.6 -3.2 L15.9 -3.2 Q16.6 0 15.9 3.2 L12.6 3.2 L10.8 1.2 Z" fill="#e64c54"/><path d="M7.5 -3.6 L10.5 -0.6 L12.8 -2.5 L15.5 -2.5" fill="none" stroke="#f8a4a8" stroke-width="1"/><path d="M8 4 L10.8 1 L12.8 2.8 L15.6 2.8" fill="none" stroke="#b8202a" stroke-width="0.8"/></g></svg>
<div class="t" id="t131" style="transform:scaleX(1.0712);left:721.5px;top:153.79px;font-size:11.5px;color:#222;font-weight:normal;">A produzir</div>
<div class="t" id="t132" style="transform:scaleX(1.0883);right:1037px;top:153.79px;font-size:11.5px;color:#222;font-weight:normal;transform-origin:right center;">0,00</div>
<div class="t" id="t133" style="transform:scaleX(1.0883);right:967px;top:153.79px;font-size:11.5px;color:#222;font-weight:normal;transform-origin:right center;">5,00</div>
<div style="position:absolute;left:0;top:170.400px;width:1369px;height:21.3px;background:#fff"></div>
<div style="position:absolute;left:38.0px;top:170.400px;width:1px;height:21.3px;background:#d3d7dc"></div>
<div style="position:absolute;left:76.0px;top:170.400px;width:1px;height:21.3px;background:#d3d7dc"></div>
<div style="position:absolute;left:104.0px;top:170.400px;width:1px;height:21.3px;background:#d3d7dc"></div>
<div style="position:absolute;left:164.0px;top:170.400px;width:1px;height:21.3px;background:#d3d7dc"></div>
<div style="position:absolute;left:274.0px;top:170.400px;width:1px;height:21.3px;background:#d3d7dc"></div>
<div style="position:absolute;left:494.0px;top:170.400px;width:1px;height:21.3px;background:#d3d7dc"></div>
<div style="position:absolute;left:594.0px;top:170.400px;width:1px;height:21.3px;background:#d3d7dc"></div>
<div style="position:absolute;left:624.0px;top:170.400px;width:1px;height:21.3px;background:#d3d7dc"></div>
<div style="position:absolute;left:714.0px;top:170.400px;width:1px;height:21.3px;background:#d3d7dc"></div>
<div style="position:absolute;left:789.0px;top:170.400px;width:1px;height:21.3px;background:#d3d7dc"></div>
<div style="position:absolute;left:859.0px;top:170.400px;width:1px;height:21.3px;background:#d3d7dc"></div>
<div style="position:absolute;left:929.0px;top:170.400px;width:1px;height:21.3px;background:#d3d7dc"></div>
<div style="position:absolute;left:12px;top:173.90px;width:13px;height:13px;background:#fff;box-sizing:border-box;border:1px solid #767676;border-radius:2px"></div>
<svg style="position:absolute;left:42px;top:178.40px" width="8" height="8" viewBox="0 0 8 8"><path d="M1.2 1.2 L6.8 6.8 M6.8 1.2 L1.2 6.8" stroke="#b82428" stroke-width="1.9"/></svg>
<svg style="position:absolute;left:55px;top:173.90px" width="15" height="15" viewBox="0 0 14 14"><path d="M2.5 9.5 L10.5 1.5 L12.5 3.5 L4.5 11.5 Z" fill="#f0a040"/><path d="M10.5 1.5 L12.5 3.5 L11.5 4.5 L9.5 2.5 Z" fill="#e88a30"/><path d="M2.5 9.5 L4.5 11.5 L1 13 Z" fill="#f6e0b0"/><path d="M1 13 L1.8 11.3 L2.7 12.2 Z" fill="#333"/></svg>
<svg style="position:absolute;left:83.5px;top:172.40px" width="15" height="15" viewBox="0 0 15 15"><defs><linearGradient id="pg8" x1="0" y1="0" x2="0" y2="1"><stop offset="0" stop-color="#f0f0f0"/><stop offset="0.6" stop-color="#c8c8c8"/><stop offset="1" stop-color="#6a6a6a"/></linearGradient></defs><rect x="3" y="0.5" width="9" height="4" fill="#eee" stroke="#b8b8b8" stroke-width="0.8"/><rect x="0.5" y="4" width="14" height="7" rx="1.5" fill="url(#pg8)" stroke="#999" stroke-width="0.8"/><rect x="3" y="10" width="9" height="4.5" fill="#e8e8e8" stroke="#aaa" stroke-width="0.8"/><circle cx="12.2" cy="6.5" r="0.9" fill="#5c5"/><circle cx="12.2" cy="8.8" r="0.9" fill="#ea3"/></svg>
<div class="t" id="t134" style="transform:scaleX(1.1156);right:1732px;top:175.09px;font-size:11.5px;color:#222;font-weight:normal;transform-origin:right center;">118</div>
<div class="t" id="t135" style="transform:scaleX(1.0664);left:171.5px;top:175.09px;font-size:11.5px;color:#222;font-weight:normal;">00184</div>
<div class="t" id="t136" style="transform:scaleX(1.0480);left:281.5px;top:175.09px;font-size:11.5px;color:#222;font-weight:normal;">Plataforma</div>
<div class="t" id="t137" style="transform:scaleX(1.0883);right:1327.5px;top:175.09px;font-size:11.5px;color:#222;font-weight:normal;transform-origin:right center;">1,00</div>
<svg style="position:absolute;left:565px;top:170.40px" width="24" height="21" viewBox="0 0 24 21"><ellipse cx="10" cy="18" rx="5.5" ry="0.9" fill="#000" opacity="0.10"/><g transform="translate(5.2,17.6) rotate(-45)"><line x1="0.3" y1="0" x2="8" y2="0" stroke="#8c8c8c" stroke-width="1.3"/><line x1="1.5" y1="-0.3" x2="7" y2="-0.3" stroke="#f0f0f0" stroke-width="0.6"/><path d="M7 -4.4 L8.2 -4.4 L10.8 -1.2 L10.8 1.2 L8.2 4.4 L7 4.4 Z" fill="#e03a42"/><path d="M10.8 -1.2 L12.6 -3.2 L15.9 -3.2 Q16.6 0 15.9 3.2 L12.6 3.2 L10.8 1.2 Z" fill="#e64c54"/><path d="M7.5 -3.6 L10.5 -0.6 L12.8 -2.5 L15.5 -2.5" fill="none" stroke="#f8a4a8" stroke-width="1"/><path d="M8 4 L10.8 1 L12.8 2.8 L15.6 2.8" fill="none" stroke="#b8202a" stroke-width="0.8"/></g></svg>
<div class="t" id="t138" style="transform:scaleX(1.0612);right:1272px;top:175.09px;font-size:11.5px;color:#222;font-weight:normal;transform-origin:right center;">un</div>
<div class="t" id="t139" style="transform:scaleX(1.1320);left:631.5px;top:175.09px;font-size:11.5px;color:#222;font-weight:normal;">07/12/21</div>
<svg style="position:absolute;left:683px;top:170.40px" width="24" height="21" viewBox="0 0 24 21"><ellipse cx="10" cy="18" rx="5.5" ry="0.9" fill="#000" opacity="0.10"/><g transform="translate(5.2,17.6) rotate(-45)"><line x1="0.3" y1="0" x2="8" y2="0" stroke="#8c8c8c" stroke-width="1.3"/><line x1="1.5" y1="-0.3" x2="7" y2="-0.3" stroke="#f0f0f0" stroke-width="0.6"/><path d="M7 -4.4 L8.2 -4.4 L10.8 -1.2 L10.8 1.2 L8.2 4.4 L7 4.4 Z" fill="#e03a42"/><path d="M10.8 -1.2 L12.6 -3.2 L15.9 -3.2 Q16.6 0 15.9 3.2 L12.6 3.2 L10.8 1.2 Z" fill="#e64c54"/><path d="M7.5 -3.6 L10.5 -0.6 L12.8 -2.5 L15.5 -2.5" fill="none" stroke="#f8a4a8" stroke-width="1"/><path d="M8 4 L10.8 1 L12.8 2.8 L15.6 2.8" fill="none" stroke="#b8202a" stroke-width="0.8"/></g></svg>
<div class="t" id="t140" style="transform:scaleX(1.0712);left:721.5px;top:175.09px;font-size:11.5px;color:#222;font-weight:normal;">A produzir</div>
<div class="t" id="t141" style="transform:scaleX(1.0883);right:1037px;top:175.09px;font-size:11.5px;color:#222;font-weight:normal;transform-origin:right center;">0,00</div>
<div class="t" id="t142" style="transform:scaleX(1.0883);right:967px;top:175.09px;font-size:11.5px;color:#222;font-weight:normal;transform-origin:right center;">1,00</div>
<div style="position:absolute;left:0;top:191.700px;width:1369px;height:21.3px;background:#eff0f3"></div>
<div style="position:absolute;left:38.0px;top:191.700px;width:1px;height:21.3px;background:#d3d7dc"></div>
<div style="position:absolute;left:76.0px;top:191.700px;width:1px;height:21.3px;background:#d3d7dc"></div>
<div style="position:absolute;left:104.0px;top:191.700px;width:1px;height:21.3px;background:#d3d7dc"></div>
<div style="position:absolute;left:164.0px;top:191.700px;width:1px;height:21.3px;background:#d3d7dc"></div>
<div style="position:absolute;left:274.0px;top:191.700px;width:1px;height:21.3px;background:#d3d7dc"></div>
<div style="position:absolute;left:494.0px;top:191.700px;width:1px;height:21.3px;background:#d3d7dc"></div>
<div style="position:absolute;left:594.0px;top:191.700px;width:1px;height:21.3px;background:#d3d7dc"></div>
<div style="position:absolute;left:624.0px;top:191.700px;width:1px;height:21.3px;background:#d3d7dc"></div>
<div style="position:absolute;left:714.0px;top:191.700px;width:1px;height:21.3px;background:#d3d7dc"></div>
<div style="position:absolute;left:789.0px;top:191.700px;width:1px;height:21.3px;background:#d3d7dc"></div>
<div style="position:absolute;left:859.0px;top:191.700px;width:1px;height:21.3px;background:#d3d7dc"></div>
<div style="position:absolute;left:929.0px;top:191.700px;width:1px;height:21.3px;background:#d3d7dc"></div>
<div style="position:absolute;left:12px;top:195.20px;width:13px;height:13px;background:#fff;box-sizing:border-box;border:1px solid #767676;border-radius:2px"></div>
<svg style="position:absolute;left:42px;top:199.70px" width="8" height="8" viewBox="0 0 8 8"><path d="M1.2 1.2 L6.8 6.8 M6.8 1.2 L1.2 6.8" stroke="#b82428" stroke-width="1.9"/></svg>
<svg style="position:absolute;left:55px;top:195.20px" width="15" height="15" viewBox="0 0 14 14"><path d="M2.5 9.5 L10.5 1.5 L12.5 3.5 L4.5 11.5 Z" fill="#f0a040"/><path d="M10.5 1.5 L12.5 3.5 L11.5 4.5 L9.5 2.5 Z" fill="#e88a30"/><path d="M2.5 9.5 L4.5 11.5 L1 13 Z" fill="#f6e0b0"/><path d="M1 13 L1.8 11.3 L2.7 12.2 Z" fill="#333"/></svg>
<svg style="position:absolute;left:83.5px;top:193.70px" width="15" height="15" viewBox="0 0 15 15"><defs><linearGradient id="pg9" x1="0" y1="0" x2="0" y2="1"><stop offset="0" stop-color="#f0f0f0"/><stop offset="0.6" stop-color="#c8c8c8"/><stop offset="1" stop-color="#6a6a6a"/></linearGradient></defs><rect x="3" y="0.5" width="9" height="4" fill="#eee" stroke="#b8b8b8" stroke-width="0.8"/><rect x="0.5" y="4" width="14" height="7" rx="1.5" fill="url(#pg9)" stroke="#999" stroke-width="0.8"/><rect x="3" y="10" width="9" height="4.5" fill="#e8e8e8" stroke="#aaa" stroke-width="0.8"/><circle cx="12.2" cy="6.5" r="0.9" fill="#5c5"/><circle cx="12.2" cy="8.8" r="0.9" fill="#ea3"/></svg>
<div class="t" id="t143" style="transform:scaleX(1.1156);right:1732px;top:196.39px;font-size:11.5px;color:#222;font-weight:normal;transform-origin:right center;">117</div>
<div class="t" id="t144" style="transform:scaleX(1.0664);left:171.5px;top:196.39px;font-size:11.5px;color:#222;font-weight:normal;">00183</div>
<div class="t" id="t145" style="transform:scaleX(1.0480);left:281.5px;top:196.39px;font-size:11.5px;color:#222;font-weight:normal;">Plataforma</div>
<div class="t" id="t146" style="transform:scaleX(1.0883);right:1327.5px;top:196.39px;font-size:11.5px;color:#222;font-weight:normal;transform-origin:right center;">1,00</div>
<svg style="position:absolute;left:565px;top:191.70px" width="24" height="21" viewBox="0 0 24 21"><ellipse cx="10" cy="18" rx="5.5" ry="0.9" fill="#000" opacity="0.10"/><g transform="translate(5.2,17.6) rotate(-45)"><line x1="0.3" y1="0" x2="8" y2="0" stroke="#8c8c8c" stroke-width="1.3"/><line x1="1.5" y1="-0.3" x2="7" y2="-0.3" stroke="#f0f0f0" stroke-width="0.6"/><path d="M7 -4.4 L8.2 -4.4 L10.8 -1.2 L10.8 1.2 L8.2 4.4 L7 4.4 Z" fill="#e03a42"/><path d="M10.8 -1.2 L12.6 -3.2 L15.9 -3.2 Q16.6 0 15.9 3.2 L12.6 3.2 L10.8 1.2 Z" fill="#e64c54"/><path d="M7.5 -3.6 L10.5 -0.6 L12.8 -2.5 L15.5 -2.5" fill="none" stroke="#f8a4a8" stroke-width="1"/><path d="M8 4 L10.8 1 L12.8 2.8 L15.6 2.8" fill="none" stroke="#b8202a" stroke-width="0.8"/></g></svg>
<div class="t" id="t147" style="transform:scaleX(1.0612);right:1272px;top:196.39px;font-size:11.5px;color:#222;font-weight:normal;transform-origin:right center;">un</div>
<div class="t" id="t148" style="transform:scaleX(1.1320);left:631.5px;top:196.39px;font-size:11.5px;color:#222;font-weight:normal;">31/12/21</div>
<svg style="position:absolute;left:683px;top:191.70px" width="24" height="21" viewBox="0 0 24 21"><ellipse cx="10" cy="18" rx="5.5" ry="0.9" fill="#000" opacity="0.10"/><g transform="translate(5.2,17.6) rotate(-45)"><line x1="0.3" y1="0" x2="8" y2="0" stroke="#8c8c8c" stroke-width="1.3"/><line x1="1.5" y1="-0.3" x2="7" y2="-0.3" stroke="#f0f0f0" stroke-width="0.6"/><path d="M7 -4.4 L8.2 -4.4 L10.8 -1.2 L10.8 1.2 L8.2 4.4 L7 4.4 Z" fill="#e03a42"/><path d="M10.8 -1.2 L12.6 -3.2 L15.9 -3.2 Q16.6 0 15.9 3.2 L12.6 3.2 L10.8 1.2 Z" fill="#e64c54"/><path d="M7.5 -3.6 L10.5 -0.6 L12.8 -2.5 L15.5 -2.5" fill="none" stroke="#f8a4a8" stroke-width="1"/><path d="M8 4 L10.8 1 L12.8 2.8 L15.6 2.8" fill="none" stroke="#b8202a" stroke-width="0.8"/></g></svg>
<div class="t" id="t149" style="transform:scaleX(1.0712);left:721.5px;top:196.39px;font-size:11.5px;color:#222;font-weight:normal;">A produzir</div>
<div class="t" id="t150" style="transform:scaleX(1.0883);right:1037px;top:196.39px;font-size:11.5px;color:#222;font-weight:normal;transform-origin:right center;">0,00</div>
<div class="t" id="t151" style="transform:scaleX(1.0883);right:967px;top:196.39px;font-size:11.5px;color:#222;font-weight:normal;transform-origin:right center;">1,00</div>
<div style="position:absolute;left:0;top:213.000px;width:1369px;height:21.3px;background:#fff"></div>
<div style="position:absolute;left:38.0px;top:213.000px;width:1px;height:21.3px;background:#d3d7dc"></div>
<div style="position:absolute;left:76.0px;top:213.000px;width:1px;height:21.3px;background:#d3d7dc"></div>
<div style="position:absolute;left:104.0px;top:213.000px;width:1px;height:21.3px;background:#d3d7dc"></div>
<div style="position:absolute;left:164.0px;top:213.000px;width:1px;height:21.3px;background:#d3d7dc"></div>
<div style="position:absolute;left:274.0px;top:213.000px;width:1px;height:21.3px;background:#d3d7dc"></div>
<div style="position:absolute;left:494.0px;top:213.000px;width:1px;height:21.3px;background:#d3d7dc"></div>
<div style="position:absolute;left:594.0px;top:213.000px;width:1px;height:21.3px;background:#d3d7dc"></div>
<div style="position:absolute;left:624.0px;top:213.000px;width:1px;height:21.3px;background:#d3d7dc"></div>
<div style="position:absolute;left:714.0px;top:213.000px;width:1px;height:21.3px;background:#d3d7dc"></div>
<div style="position:absolute;left:789.0px;top:213.000px;width:1px;height:21.3px;background:#d3d7dc"></div>
<div style="position:absolute;left:859.0px;top:213.000px;width:1px;height:21.3px;background:#d3d7dc"></div>
<div style="position:absolute;left:929.0px;top:213.000px;width:1px;height:21.3px;background:#d3d7dc"></div>
<div style="position:absolute;left:12px;top:216.50px;width:13px;height:13px;background:#fff;box-sizing:border-box;border:1px solid #767676;border-radius:2px"></div>
<svg style="position:absolute;left:42px;top:221.00px" width="8" height="8" viewBox="0 0 8 8"><path d="M1.2 1.2 L6.8 6.8 M6.8 1.2 L1.2 6.8" stroke="#b82428" stroke-width="1.9"/></svg>
<svg style="position:absolute;left:55px;top:216.50px" width="15" height="15" viewBox="0 0 14 14"><path d="M2.5 9.5 L10.5 1.5 L12.5 3.5 L4.5 11.5 Z" fill="#f0a040"/><path d="M10.5 1.5 L12.5 3.5 L11.5 4.5 L9.5 2.5 Z" fill="#e88a30"/><path d="M2.5 9.5 L4.5 11.5 L1 13 Z" fill="#f6e0b0"/><path d="M1 13 L1.8 11.3 L2.7 12.2 Z" fill="#333"/></svg>
<svg style="position:absolute;left:83.5px;top:215.00px" width="15" height="15" viewBox="0 0 15 15"><defs><linearGradient id="pg10" x1="0" y1="0" x2="0" y2="1"><stop offset="0" stop-color="#f0f0f0"/><stop offset="0.6" stop-color="#c8c8c8"/><stop offset="1" stop-color="#6a6a6a"/></linearGradient></defs><rect x="3" y="0.5" width="9" height="4" fill="#eee" stroke="#b8b8b8" stroke-width="0.8"/><rect x="0.5" y="4" width="14" height="7" rx="1.5" fill="url(#pg10)" stroke="#999" stroke-width="0.8"/><rect x="3" y="10" width="9" height="4.5" fill="#e8e8e8" stroke="#aaa" stroke-width="0.8"/><circle cx="12.2" cy="6.5" r="0.9" fill="#5c5"/><circle cx="12.2" cy="8.8" r="0.9" fill="#ea3"/></svg>
<div class="t" id="t152" style="transform:scaleX(1.1156);right:1732px;top:217.69px;font-size:11.5px;color:#222;font-weight:normal;transform-origin:right center;">115</div>
<div class="t" id="t153" style="transform:scaleX(1.0664);left:171.5px;top:217.69px;font-size:11.5px;color:#222;font-weight:normal;">00007</div>
<div class="t" id="t154" style="transform:scaleX(1.0503);left:281.5px;top:217.69px;font-size:11.5px;color:#222;font-weight:normal;">carvalho</div>
<div class="t" id="t155" style="transform:scaleX(1.0883);right:1327.5px;top:217.69px;font-size:11.5px;color:#222;font-weight:normal;transform-origin:right center;">1,00</div>
<svg style="position:absolute;left:565px;top:213.00px" width="24" height="21" viewBox="0 0 24 21"><ellipse cx="10" cy="18" rx="5.5" ry="0.9" fill="#000" opacity="0.10"/><g transform="translate(5.2,17.6) rotate(-45)"><line x1="0.3" y1="0" x2="8" y2="0" stroke="#8c8c8c" stroke-width="1.3"/><line x1="1.5" y1="-0.3" x2="7" y2="-0.3" stroke="#f0f0f0" stroke-width="0.6"/><path d="M7 -4.4 L8.2 -4.4 L10.8 -1.2 L10.8 1.2 L8.2 4.4 L7 4.4 Z" fill="#e03a42"/><path d="M10.8 -1.2 L12.6 -3.2 L15.9 -3.2 Q16.6 0 15.9 3.2 L12.6 3.2 L10.8 1.2 Z" fill="#e64c54"/><path d="M7.5 -3.6 L10.5 -0.6 L12.8 -2.5 L15.5 -2.5" fill="none" stroke="#f8a4a8" stroke-width="1"/><path d="M8 4 L10.8 1 L12.8 2.8 L15.6 2.8" fill="none" stroke="#b8202a" stroke-width="0.8"/></g></svg>
<div class="t" id="t156" style="transform:scaleX(0.8735);right:1272px;top:217.69px;font-size:11.5px;color:#222;font-weight:normal;transform-origin:right center;">PC</div>
<div class="t" id="t157" style="transform:scaleX(1.1320);left:631.5px;top:217.69px;font-size:11.5px;color:#222;font-weight:normal;">28/10/21</div>
<svg style="position:absolute;left:683px;top:213.00px" width="24" height="21" viewBox="0 0 24 21"><ellipse cx="10" cy="18" rx="5.5" ry="0.9" fill="#000" opacity="0.10"/><g transform="translate(5.2,17.6) rotate(-45)"><line x1="0.3" y1="0" x2="8" y2="0" stroke="#8c8c8c" stroke-width="1.3"/><line x1="1.5" y1="-0.3" x2="7" y2="-0.3" stroke="#f0f0f0" stroke-width="0.6"/><path d="M7 -4.4 L8.2 -4.4 L10.8 -1.2 L10.8 1.2 L8.2 4.4 L7 4.4 Z" fill="#e03a42"/><path d="M10.8 -1.2 L12.6 -3.2 L15.9 -3.2 Q16.6 0 15.9 3.2 L12.6 3.2 L10.8 1.2 Z" fill="#e64c54"/><path d="M7.5 -3.6 L10.5 -0.6 L12.8 -2.5 L15.5 -2.5" fill="none" stroke="#f8a4a8" stroke-width="1"/><path d="M8 4 L10.8 1 L12.8 2.8 L15.6 2.8" fill="none" stroke="#b8202a" stroke-width="0.8"/></g></svg>
<div class="t" id="t158" style="transform:scaleX(1.0712);left:721.5px;top:217.69px;font-size:11.5px;color:#222;font-weight:normal;">A produzir</div>
<div class="t" id="t159" style="transform:scaleX(1.0883);right:1037px;top:217.69px;font-size:11.5px;color:#222;font-weight:normal;transform-origin:right center;">0,00</div>
<div class="t" id="t160" style="transform:scaleX(1.0883);right:967px;top:217.69px;font-size:11.5px;color:#222;font-weight:normal;transform-origin:right center;">1,00</div>
<div class="t" id="t161" style="transform:scaleX(1.1037);left:936.5px;top:217.69px;font-size:11.5px;color:#1f6e1f;font-weight:normal;">25 #1 (1) Cliente 123</div>
<div style="position:absolute;left:0;top:234.300px;width:1369px;height:21.3px;background:#eff0f3"></div>
<div style="position:absolute;left:38.0px;top:234.300px;width:1px;height:21.3px;background:#d3d7dc"></div>
<div style="position:absolute;left:76.0px;top:234.300px;width:1px;height:21.3px;background:#d3d7dc"></div>
<div style="position:absolute;left:104.0px;top:234.300px;width:1px;height:21.3px;background:#d3d7dc"></div>
<div style="position:absolute;left:164.0px;top:234.300px;width:1px;height:21.3px;background:#d3d7dc"></div>
<div style="position:absolute;left:274.0px;top:234.300px;width:1px;height:21.3px;background:#d3d7dc"></div>
<div style="position:absolute;left:494.0px;top:234.300px;width:1px;height:21.3px;background:#d3d7dc"></div>
<div style="position:absolute;left:594.0px;top:234.300px;width:1px;height:21.3px;background:#d3d7dc"></div>
<div style="position:absolute;left:624.0px;top:234.300px;width:1px;height:21.3px;background:#d3d7dc"></div>
<div style="position:absolute;left:714.0px;top:234.300px;width:1px;height:21.3px;background:#d3d7dc"></div>
<div style="position:absolute;left:789.0px;top:234.300px;width:1px;height:21.3px;background:#d3d7dc"></div>
<div style="position:absolute;left:859.0px;top:234.300px;width:1px;height:21.3px;background:#d3d7dc"></div>
<div style="position:absolute;left:929.0px;top:234.300px;width:1px;height:21.3px;background:#d3d7dc"></div>
<div style="position:absolute;left:12px;top:237.80px;width:13px;height:13px;background:#fff;box-sizing:border-box;border:1px solid #767676;border-radius:2px"></div>
<svg style="position:absolute;left:42px;top:242.30px" width="8" height="8" viewBox="0 0 8 8"><path d="M1.2 1.2 L6.8 6.8 M6.8 1.2 L1.2 6.8" stroke="#b82428" stroke-width="1.9"/></svg>
<svg style="position:absolute;left:55px;top:237.80px" width="15" height="15" viewBox="0 0 14 14"><path d="M2.5 9.5 L10.5 1.5 L12.5 3.5 L4.5 11.5 Z" fill="#f0a040"/><path d="M10.5 1.5 L12.5 3.5 L11.5 4.5 L9.5 2.5 Z" fill="#e88a30"/><path d="M2.5 9.5 L4.5 11.5 L1 13 Z" fill="#f6e0b0"/><path d="M1 13 L1.8 11.3 L2.7 12.2 Z" fill="#333"/></svg>
<svg style="position:absolute;left:83.5px;top:236.30px" width="15" height="15" viewBox="0 0 15 15"><defs><linearGradient id="pg11" x1="0" y1="0" x2="0" y2="1"><stop offset="0" stop-color="#f0f0f0"/><stop offset="0.6" stop-color="#c8c8c8"/><stop offset="1" stop-color="#6a6a6a"/></linearGradient></defs><rect x="3" y="0.5" width="9" height="4" fill="#eee" stroke="#b8b8b8" stroke-width="0.8"/><rect x="0.5" y="4" width="14" height="7" rx="1.5" fill="url(#pg11)" stroke="#999" stroke-width="0.8"/><rect x="3" y="10" width="9" height="4.5" fill="#e8e8e8" stroke="#aaa" stroke-width="0.8"/><circle cx="12.2" cy="6.5" r="0.9" fill="#5c5"/><circle cx="12.2" cy="8.8" r="0.9" fill="#ea3"/></svg>
<div class="t" id="t162" style="transform:scaleX(1.1704);right:1732px;top:238.99px;font-size:11.5px;color:#222;font-weight:normal;transform-origin:right center;">111</div>
<div class="t" id="t163" style="transform:scaleX(1.0664);left:171.5px;top:238.99px;font-size:11.5px;color:#222;font-weight:normal;">00007</div>
<div class="t" id="t164" style="transform:scaleX(1.0503);left:281.5px;top:238.99px;font-size:11.5px;color:#222;font-weight:normal;">carvalho</div>
<div class="t" id="t165" style="transform:scaleX(1.0883);right:1327.5px;top:238.99px;font-size:11.5px;color:#222;font-weight:normal;transform-origin:right center;">1,00</div>
<svg style="position:absolute;left:565px;top:234.30px" width="24" height="21" viewBox="0 0 24 21"><ellipse cx="10" cy="18" rx="5.5" ry="0.9" fill="#000" opacity="0.10"/><g transform="translate(5.2,17.6) rotate(-45)"><line x1="0.3" y1="0" x2="8" y2="0" stroke="#8c8c8c" stroke-width="1.3"/><line x1="1.5" y1="-0.3" x2="7" y2="-0.3" stroke="#f0f0f0" stroke-width="0.6"/><path d="M7 -4.4 L8.2 -4.4 L10.8 -1.2 L10.8 1.2 L8.2 4.4 L7 4.4 Z" fill="#e03a42"/><path d="M10.8 -1.2 L12.6 -3.2 L15.9 -3.2 Q16.6 0 15.9 3.2 L12.6 3.2 L10.8 1.2 Z" fill="#e64c54"/><path d="M7.5 -3.6 L10.5 -0.6 L12.8 -2.5 L15.5 -2.5" fill="none" stroke="#f8a4a8" stroke-width="1"/><path d="M8 4 L10.8 1 L12.8 2.8 L15.6 2.8" fill="none" stroke="#b8202a" stroke-width="0.8"/></g></svg>
<div class="t" id="t166" style="transform:scaleX(0.8735);right:1272px;top:238.99px;font-size:11.5px;color:#222;font-weight:normal;transform-origin:right center;">PC</div>
<div class="t" id="t167" style="transform:scaleX(1.1320);left:631.5px;top:238.99px;font-size:11.5px;color:#222;font-weight:normal;">20/10/21</div>
<svg style="position:absolute;left:683px;top:234.30px" width="24" height="21" viewBox="0 0 24 21"><ellipse cx="10" cy="18" rx="5.5" ry="0.9" fill="#000" opacity="0.10"/><g transform="translate(5.2,17.6) rotate(-45)"><line x1="0.3" y1="0" x2="8" y2="0" stroke="#8c8c8c" stroke-width="1.3"/><line x1="1.5" y1="-0.3" x2="7" y2="-0.3" stroke="#f0f0f0" stroke-width="0.6"/><path d="M7 -4.4 L8.2 -4.4 L10.8 -1.2 L10.8 1.2 L8.2 4.4 L7 4.4 Z" fill="#e03a42"/><path d="M10.8 -1.2 L12.6 -3.2 L15.9 -3.2 Q16.6 0 15.9 3.2 L12.6 3.2 L10.8 1.2 Z" fill="#e64c54"/><path d="M7.5 -3.6 L10.5 -0.6 L12.8 -2.5 L15.5 -2.5" fill="none" stroke="#f8a4a8" stroke-width="1"/><path d="M8 4 L10.8 1 L12.8 2.8 L15.6 2.8" fill="none" stroke="#b8202a" stroke-width="0.8"/></g></svg>
<div class="t" id="t168" style="transform:scaleX(1.0712);left:721.5px;top:238.99px;font-size:11.5px;color:#222;font-weight:normal;">A produzir</div>
<div class="t" id="t169" style="transform:scaleX(1.0883);right:1037px;top:238.99px;font-size:11.5px;color:#222;font-weight:normal;transform-origin:right center;">0,00</div>
<div class="t" id="t170" style="transform:scaleX(1.0883);right:967px;top:238.99px;font-size:11.5px;color:#222;font-weight:normal;transform-origin:right center;">1,00</div>
<div class="t" id="t171" style="transform:scaleX(1.1016);left:936.5px;top:238.99px;font-size:11.5px;color:#1a62d8;font-weight:normal;">129 #1 (1) Cliente 123</div>
<div style="position:absolute;left:0;top:255.600px;width:1369px;height:21.3px;background:#fff"></div>
<div style="position:absolute;left:38.0px;top:255.600px;width:1px;height:21.3px;background:#d3d7dc"></div>
<div style="position:absolute;left:76.0px;top:255.600px;width:1px;height:21.3px;background:#d3d7dc"></div>
<div style="position:absolute;left:104.0px;top:255.600px;width:1px;height:21.3px;background:#d3d7dc"></div>
<div style="position:absolute;left:164.0px;top:255.600px;width:1px;height:21.3px;background:#d3d7dc"></div>
<div style="position:absolute;left:274.0px;top:255.600px;width:1px;height:21.3px;background:#d3d7dc"></div>
<div style="position:absolute;left:494.0px;top:255.600px;width:1px;height:21.3px;background:#d3d7dc"></div>
<div style="position:absolute;left:594.0px;top:255.600px;width:1px;height:21.3px;background:#d3d7dc"></div>
<div style="position:absolute;left:624.0px;top:255.600px;width:1px;height:21.3px;background:#d3d7dc"></div>
<div style="position:absolute;left:714.0px;top:255.600px;width:1px;height:21.3px;background:#d3d7dc"></div>
<div style="position:absolute;left:789.0px;top:255.600px;width:1px;height:21.3px;background:#d3d7dc"></div>
<div style="position:absolute;left:859.0px;top:255.600px;width:1px;height:21.3px;background:#d3d7dc"></div>
<div style="position:absolute;left:929.0px;top:255.600px;width:1px;height:21.3px;background:#d3d7dc"></div>
<div style="position:absolute;left:12px;top:259.10px;width:13px;height:13px;background:#fff;box-sizing:border-box;border:1px solid #767676;border-radius:2px"></div>
<svg style="position:absolute;left:42px;top:263.60px" width="8" height="8" viewBox="0 0 8 8"><path d="M1.2 1.2 L6.8 6.8 M6.8 1.2 L1.2 6.8" stroke="#b82428" stroke-width="1.9"/></svg>
<svg style="position:absolute;left:55px;top:259.10px" width="15" height="15" viewBox="0 0 14 14"><path d="M2.5 9.5 L10.5 1.5 L12.5 3.5 L4.5 11.5 Z" fill="#f0a040"/><path d="M10.5 1.5 L12.5 3.5 L11.5 4.5 L9.5 2.5 Z" fill="#e88a30"/><path d="M2.5 9.5 L4.5 11.5 L1 13 Z" fill="#f6e0b0"/><path d="M1 13 L1.8 11.3 L2.7 12.2 Z" fill="#333"/></svg>
<svg style="position:absolute;left:83.5px;top:257.60px" width="15" height="15" viewBox="0 0 15 15"><defs><linearGradient id="pg12" x1="0" y1="0" x2="0" y2="1"><stop offset="0" stop-color="#f0f0f0"/><stop offset="0.6" stop-color="#c8c8c8"/><stop offset="1" stop-color="#6a6a6a"/></linearGradient></defs><rect x="3" y="0.5" width="9" height="4" fill="#eee" stroke="#b8b8b8" stroke-width="0.8"/><rect x="0.5" y="4" width="14" height="7" rx="1.5" fill="url(#pg12)" stroke="#999" stroke-width="0.8"/><rect x="3" y="10" width="9" height="4.5" fill="#e8e8e8" stroke="#aaa" stroke-width="0.8"/><circle cx="12.2" cy="6.5" r="0.9" fill="#5c5"/><circle cx="12.2" cy="8.8" r="0.9" fill="#ea3"/></svg>
<div class="t" id="t172" style="transform:scaleX(1.1156);right:1732px;top:260.29px;font-size:11.5px;color:#222;font-weight:normal;transform-origin:right center;">110</div>
<div class="t" id="t173" style="transform:scaleX(1.0664);left:171.5px;top:260.29px;font-size:11.5px;color:#222;font-weight:normal;">00007</div>
<div class="t" id="t174" style="transform:scaleX(1.0503);left:281.5px;top:260.29px;font-size:11.5px;color:#222;font-weight:normal;">carvalho</div>
<div class="t" id="t175" style="transform:scaleX(1.0883);right:1327.5px;top:260.29px;font-size:11.5px;color:#222;font-weight:normal;transform-origin:right center;">3,00</div>
<svg style="position:absolute;left:565px;top:255.60px" width="24" height="21" viewBox="0 0 24 21"><ellipse cx="10" cy="18" rx="5.5" ry="0.9" fill="#000" opacity="0.10"/><g transform="translate(5.2,17.6) rotate(-45)"><line x1="0.3" y1="0" x2="8" y2="0" stroke="#8c8c8c" stroke-width="1.3"/><line x1="1.5" y1="-0.3" x2="7" y2="-0.3" stroke="#f0f0f0" stroke-width="0.6"/><path d="M7 -4.4 L8.2 -4.4 L10.8 -1.2 L10.8 1.2 L8.2 4.4 L7 4.4 Z" fill="#e03a42"/><path d="M10.8 -1.2 L12.6 -3.2 L15.9 -3.2 Q16.6 0 15.9 3.2 L12.6 3.2 L10.8 1.2 Z" fill="#e64c54"/><path d="M7.5 -3.6 L10.5 -0.6 L12.8 -2.5 L15.5 -2.5" fill="none" stroke="#f8a4a8" stroke-width="1"/><path d="M8 4 L10.8 1 L12.8 2.8 L15.6 2.8" fill="none" stroke="#b8202a" stroke-width="0.8"/></g></svg>
<div class="t" id="t176" style="transform:scaleX(0.8735);right:1272px;top:260.29px;font-size:11.5px;color:#222;font-weight:normal;transform-origin:right center;">PC</div>
<div class="t" id="t177" style="transform:scaleX(1.1320);left:631.5px;top:260.29px;font-size:11.5px;color:#222;font-weight:normal;">19/07/21</div>
<svg style="position:absolute;left:683px;top:255.60px" width="24" height="21" viewBox="0 0 24 21"><ellipse cx="10" cy="18" rx="5.5" ry="0.9" fill="#000" opacity="0.10"/><g transform="translate(5.2,17.6) rotate(-45)"><line x1="0.3" y1="0" x2="8" y2="0" stroke="#8c8c8c" stroke-width="1.3"/><line x1="1.5" y1="-0.3" x2="7" y2="-0.3" stroke="#f0f0f0" stroke-width="0.6"/><path d="M7 -4.4 L8.2 -4.4 L10.8 -1.2 L10.8 1.2 L8.2 4.4 L7 4.4 Z" fill="#e03a42"/><path d="M10.8 -1.2 L12.6 -3.2 L15.9 -3.2 Q16.6 0 15.9 3.2 L12.6 3.2 L10.8 1.2 Z" fill="#e64c54"/><path d="M7.5 -3.6 L10.5 -0.6 L12.8 -2.5 L15.5 -2.5" fill="none" stroke="#f8a4a8" stroke-width="1"/><path d="M8 4 L10.8 1 L12.8 2.8 L15.6 2.8" fill="none" stroke="#b8202a" stroke-width="0.8"/></g></svg>
<div class="t" id="t178" style="transform:scaleX(1.0712);left:721.5px;top:260.29px;font-size:11.5px;color:#222;font-weight:normal;">A produzir</div>
<div class="t" id="t179" style="transform:scaleX(1.0883);right:1037px;top:260.29px;font-size:11.5px;color:#222;font-weight:normal;transform-origin:right center;">0,00</div>
<div class="t" id="t180" style="transform:scaleX(1.0883);right:967px;top:260.29px;font-size:11.5px;color:#222;font-weight:normal;transform-origin:right center;">3,00</div>
<div class="t" id="t181" style="transform:scaleX(1.1545);left:936.5px;top:260.29px;font-size:11.5px;color:#1a62d8;font-weight:normal;">93 #1 (3) #026</div>
<div style="position:absolute;left:0;top:276.900px;width:1369px;height:21.3px;background:#eff0f3"></div>
<div style="position:absolute;left:38.0px;top:276.900px;width:1px;height:21.3px;background:#d3d7dc"></div>
<div style="position:absolute;left:76.0px;top:276.900px;width:1px;height:21.3px;background:#d3d7dc"></div>
<div style="position:absolute;left:104.0px;top:276.900px;width:1px;height:21.3px;background:#d3d7dc"></div>
<div style="position:absolute;left:164.0px;top:276.900px;width:1px;height:21.3px;background:#d3d7dc"></div>
<div style="position:absolute;left:274.0px;top:276.900px;width:1px;height:21.3px;background:#d3d7dc"></div>
<div style="position:absolute;left:494.0px;top:276.900px;width:1px;height:21.3px;background:#d3d7dc"></div>
<div style="position:absolute;left:594.0px;top:276.900px;width:1px;height:21.3px;background:#d3d7dc"></div>
<div style="position:absolute;left:624.0px;top:276.900px;width:1px;height:21.3px;background:#d3d7dc"></div>
<div style="position:absolute;left:714.0px;top:276.900px;width:1px;height:21.3px;background:#d3d7dc"></div>
<div style="position:absolute;left:789.0px;top:276.900px;width:1px;height:21.3px;background:#d3d7dc"></div>
<div style="position:absolute;left:859.0px;top:276.900px;width:1px;height:21.3px;background:#d3d7dc"></div>
<div style="position:absolute;left:929.0px;top:276.900px;width:1px;height:21.3px;background:#d3d7dc"></div>
<div style="position:absolute;left:12px;top:280.40px;width:13px;height:13px;background:#fff;box-sizing:border-box;border:1px solid #767676;border-radius:2px"></div>
<svg style="position:absolute;left:42px;top:284.90px" width="8" height="8" viewBox="0 0 8 8"><path d="M1.2 1.2 L6.8 6.8 M6.8 1.2 L1.2 6.8" stroke="#b82428" stroke-width="1.9"/></svg>
<svg style="position:absolute;left:55px;top:280.40px" width="15" height="15" viewBox="0 0 14 14"><path d="M2.5 9.5 L10.5 1.5 L12.5 3.5 L4.5 11.5 Z" fill="#f0a040"/><path d="M10.5 1.5 L12.5 3.5 L11.5 4.5 L9.5 2.5 Z" fill="#e88a30"/><path d="M2.5 9.5 L4.5 11.5 L1 13 Z" fill="#f6e0b0"/><path d="M1 13 L1.8 11.3 L2.7 12.2 Z" fill="#333"/></svg>
<svg style="position:absolute;left:83.5px;top:278.90px" width="15" height="15" viewBox="0 0 15 15"><defs><linearGradient id="pg13" x1="0" y1="0" x2="0" y2="1"><stop offset="0" stop-color="#f0f0f0"/><stop offset="0.6" stop-color="#c8c8c8"/><stop offset="1" stop-color="#6a6a6a"/></linearGradient></defs><rect x="3" y="0.5" width="9" height="4" fill="#eee" stroke="#b8b8b8" stroke-width="0.8"/><rect x="0.5" y="4" width="14" height="7" rx="1.5" fill="url(#pg13)" stroke="#999" stroke-width="0.8"/><rect x="3" y="10" width="9" height="4.5" fill="#e8e8e8" stroke="#aaa" stroke-width="0.8"/><circle cx="12.2" cy="6.5" r="0.9" fill="#5c5"/><circle cx="12.2" cy="8.8" r="0.9" fill="#ea3"/></svg>
<div class="t" id="t182" style="transform:scaleX(1.0666);right:1732px;top:281.59px;font-size:11.5px;color:#222;font-weight:normal;transform-origin:right center;">107</div>
<div class="t" id="t183" style="transform:scaleX(1.0664);left:171.5px;top:281.59px;font-size:11.5px;color:#222;font-weight:normal;">00152</div>
<div class="t" id="t184" style="transform:scaleX(1.0708);left:281.5px;top:281.59px;font-size:11.5px;color:#222;font-weight:normal;">mb</div>
<div class="t" id="t185" style="transform:scaleX(1.0883);right:1327.5px;top:281.59px;font-size:11.5px;color:#222;font-weight:normal;transform-origin:right center;">1,00</div>
<svg style="position:absolute;left:565px;top:276.90px" width="24" height="21" viewBox="0 0 24 21"><ellipse cx="10" cy="18" rx="5.5" ry="0.9" fill="#000" opacity="0.10"/><g transform="translate(5.2,17.6) rotate(-45)"><line x1="0.3" y1="0" x2="8" y2="0" stroke="#8c8c8c" stroke-width="1.3"/><line x1="1.5" y1="-0.3" x2="7" y2="-0.3" stroke="#f0f0f0" stroke-width="0.6"/><path d="M7 -4.4 L8.2 -4.4 L10.8 -1.2 L10.8 1.2 L8.2 4.4 L7 4.4 Z" fill="#e03a42"/><path d="M10.8 -1.2 L12.6 -3.2 L15.9 -3.2 Q16.6 0 15.9 3.2 L12.6 3.2 L10.8 1.2 Z" fill="#e64c54"/><path d="M7.5 -3.6 L10.5 -0.6 L12.8 -2.5 L15.5 -2.5" fill="none" stroke="#f8a4a8" stroke-width="1"/><path d="M8 4 L10.8 1 L12.8 2.8 L15.6 2.8" fill="none" stroke="#b8202a" stroke-width="0.8"/></g></svg>
<div class="t" id="t186" style="transform:scaleX(1.0612);right:1272px;top:281.59px;font-size:11.5px;color:#222;font-weight:normal;transform-origin:right center;">un</div>
<div class="t" id="t187" style="transform:scaleX(1.1320);left:631.5px;top:281.59px;font-size:11.5px;color:#222;font-weight:normal;">30/07/22</div>
<svg style="position:absolute;left:683px;top:276.90px" width="24" height="21" viewBox="0 0 24 21"><ellipse cx="10" cy="18" rx="5.5" ry="0.9" fill="#000" opacity="0.10"/><g transform="translate(5.2,17.6) rotate(-45)"><line x1="0.3" y1="0" x2="8" y2="0" stroke="#8c8c8c" stroke-width="1.3"/><line x1="1.5" y1="-0.3" x2="7" y2="-0.3" stroke="#f0f0f0" stroke-width="0.6"/><path d="M7 -4.4 L8.2 -4.4 L10.8 -1.2 L10.8 1.2 L8.2 4.4 L7 4.4 Z" fill="#e03a42"/><path d="M10.8 -1.2 L12.6 -3.2 L15.9 -3.2 Q16.6 0 15.9 3.2 L12.6 3.2 L10.8 1.2 Z" fill="#e64c54"/><path d="M7.5 -3.6 L10.5 -0.6 L12.8 -2.5 L15.5 -2.5" fill="none" stroke="#f8a4a8" stroke-width="1"/><path d="M8 4 L10.8 1 L12.8 2.8 L15.6 2.8" fill="none" stroke="#b8202a" stroke-width="0.8"/></g></svg>
<div class="t" id="t188" style="transform:scaleX(1.0712);left:721.5px;top:281.59px;font-size:11.5px;color:#222;font-weight:normal;">A produzir</div>
<div class="t" id="t189" style="transform:scaleX(1.0883);right:1037px;top:281.59px;font-size:11.5px;color:#222;font-weight:normal;transform-origin:right center;">0,00</div>
<div class="t" id="t190" style="transform:scaleX(1.0883);right:967px;top:281.59px;font-size:11.5px;color:#222;font-weight:normal;transform-origin:right center;">1,00</div>
<div class="t" id="t191" style="transform:scaleX(1.1529);left:936.5px;top:281.59px;font-size:11.5px;color:#1f6e1f;font-weight:normal;">112 #1 (1) #1043</div>
<div style="position:absolute;left:0;top:298.200px;width:1369px;height:21.3px;background:#fff"></div>
<div style="position:absolute;left:38.0px;top:298.200px;width:1px;height:21.3px;background:#d3d7dc"></div>
<div style="position:absolute;left:76.0px;top:298.200px;width:1px;height:21.3px;background:#d3d7dc"></div>
<div style="position:absolute;left:104.0px;top:298.200px;width:1px;height:21.3px;background:#d3d7dc"></div>
<div style="position:absolute;left:164.0px;top:298.200px;width:1px;height:21.3px;background:#d3d7dc"></div>
<div style="position:absolute;left:274.0px;top:298.200px;width:1px;height:21.3px;background:#d3d7dc"></div>
<div style="position:absolute;left:494.0px;top:298.200px;width:1px;height:21.3px;background:#d3d7dc"></div>
<div style="position:absolute;left:594.0px;top:298.200px;width:1px;height:21.3px;background:#d3d7dc"></div>
<div style="position:absolute;left:624.0px;top:298.200px;width:1px;height:21.3px;background:#d3d7dc"></div>
<div style="position:absolute;left:714.0px;top:298.200px;width:1px;height:21.3px;background:#d3d7dc"></div>
<div style="position:absolute;left:789.0px;top:298.200px;width:1px;height:21.3px;background:#d3d7dc"></div>
<div style="position:absolute;left:859.0px;top:298.200px;width:1px;height:21.3px;background:#d3d7dc"></div>
<div style="position:absolute;left:929.0px;top:298.200px;width:1px;height:21.3px;background:#d3d7dc"></div>
<div style="position:absolute;left:12px;top:301.70px;width:13px;height:13px;background:#fff;box-sizing:border-box;border:1px solid #767676;border-radius:2px"></div>
<svg style="position:absolute;left:42px;top:306.20px" width="8" height="8" viewBox="0 0 8 8"><path d="M1.2 1.2 L6.8 6.8 M6.8 1.2 L1.2 6.8" stroke="#b82428" stroke-width="1.9"/></svg>
<svg style="position:absolute;left:55px;top:301.70px" width="15" height="15" viewBox="0 0 14 14"><path d="M2.5 9.5 L10.5 1.5 L12.5 3.5 L4.5 11.5 Z" fill="#f0a040"/><path d="M10.5 1.5 L12.5 3.5 L11.5 4.5 L9.5 2.5 Z" fill="#e88a30"/><path d="M2.5 9.5 L4.5 11.5 L1 13 Z" fill="#f6e0b0"/><path d="M1 13 L1.8 11.3 L2.7 12.2 Z" fill="#333"/></svg>
<svg style="position:absolute;left:83.5px;top:300.20px" width="15" height="15" viewBox="0 0 15 15"><defs><linearGradient id="pg14" x1="0" y1="0" x2="0" y2="1"><stop offset="0" stop-color="#f0f0f0"/><stop offset="0.6" stop-color="#c8c8c8"/><stop offset="1" stop-color="#6a6a6a"/></linearGradient></defs><rect x="3" y="0.5" width="9" height="4" fill="#eee" stroke="#b8b8b8" stroke-width="0.8"/><rect x="0.5" y="4" width="14" height="7" rx="1.5" fill="url(#pg14)" stroke="#999" stroke-width="0.8"/><rect x="3" y="10" width="9" height="4.5" fill="#e8e8e8" stroke="#aaa" stroke-width="0.8"/><circle cx="12.2" cy="6.5" r="0.9" fill="#5c5"/><circle cx="12.2" cy="8.8" r="0.9" fill="#ea3"/></svg>
<div class="t" id="t192" style="transform:scaleX(1.0666);right:1732px;top:302.89px;font-size:11.5px;color:#222;font-weight:normal;transform-origin:right center;">103</div>
<div class="t" id="t193" style="transform:scaleX(1.0664);left:171.5px;top:302.89px;font-size:11.5px;color:#222;font-weight:normal;">00150</div>
<div class="t" id="t194" style="transform:scaleX(1.0613);left:281.5px;top:302.89px;font-size:11.5px;color:#222;font-weight:normal;">Tampo</div>
<div class="t" id="t195" style="transform:scaleX(1.0883);right:1327.5px;top:302.89px;font-size:11.5px;color:#222;font-weight:normal;transform-origin:right center;">1,00</div>
<svg style="position:absolute;left:565px;top:298.20px" width="24" height="21" viewBox="0 0 24 21"><ellipse cx="10" cy="18" rx="5.5" ry="0.9" fill="#000" opacity="0.10"/><g transform="translate(5.2,17.6) rotate(-45)"><line x1="0.3" y1="0" x2="8" y2="0" stroke="#8c8c8c" stroke-width="1.3"/><line x1="1.5" y1="-0.3" x2="7" y2="-0.3" stroke="#f0f0f0" stroke-width="0.6"/><path d="M7 -4.4 L8.2 -4.4 L10.8 -1.2 L10.8 1.2 L8.2 4.4 L7 4.4 Z" fill="#e03a42"/><path d="M10.8 -1.2 L12.6 -3.2 L15.9 -3.2 Q16.6 0 15.9 3.2 L12.6 3.2 L10.8 1.2 Z" fill="#e64c54"/><path d="M7.5 -3.6 L10.5 -0.6 L12.8 -2.5 L15.5 -2.5" fill="none" stroke="#f8a4a8" stroke-width="1"/><path d="M8 4 L10.8 1 L12.8 2.8 L15.6 2.8" fill="none" stroke="#b8202a" stroke-width="0.8"/></g></svg>
<div class="t" id="t196" style="transform:scaleX(1.0612);right:1272px;top:302.89px;font-size:11.5px;color:#222;font-weight:normal;transform-origin:right center;">un</div>
<div class="t" id="t197" style="transform:scaleX(1.1320);left:631.5px;top:302.89px;font-size:11.5px;color:#222;font-weight:normal;">17/06/21</div>
<svg style="position:absolute;left:683px;top:298.20px" width="24" height="21" viewBox="0 0 24 21"><ellipse cx="10" cy="18" rx="5.5" ry="0.9" fill="#000" opacity="0.10"/><g transform="translate(5.2,17.6) rotate(-45)"><line x1="0.3" y1="0" x2="8" y2="0" stroke="#8c8c8c" stroke-width="1.3"/><line x1="1.5" y1="-0.3" x2="7" y2="-0.3" stroke="#f0f0f0" stroke-width="0.6"/><path d="M7 -4.4 L8.2 -4.4 L10.8 -1.2 L10.8 1.2 L8.2 4.4 L7 4.4 Z" fill="#e03a42"/><path d="M10.8 -1.2 L12.6 -3.2 L15.9 -3.2 Q16.6 0 15.9 3.2 L12.6 3.2 L10.8 1.2 Z" fill="#e64c54"/><path d="M7.5 -3.6 L10.5 -0.6 L12.8 -2.5 L15.5 -2.5" fill="none" stroke="#f8a4a8" stroke-width="1"/><path d="M8 4 L10.8 1 L12.8 2.8 L15.6 2.8" fill="none" stroke="#b8202a" stroke-width="0.8"/></g></svg>
<div class="t" id="t198" style="transform:scaleX(1.0712);left:721.5px;top:302.89px;font-size:11.5px;color:#222;font-weight:normal;">A produzir</div>
<div class="t" id="t199" style="transform:scaleX(1.0883);right:1037px;top:302.89px;font-size:11.5px;color:#222;font-weight:normal;transform-origin:right center;">0,00</div>
<div class="t" id="t200" style="transform:scaleX(1.0883);right:967px;top:302.89px;font-size:11.5px;color:#222;font-weight:normal;transform-origin:right center;">1,00</div>
<div style="position:absolute;left:0;top:319.500px;width:1369px;height:21.3px;background:#eff0f3"></div>
<div style="position:absolute;left:38.0px;top:319.500px;width:1px;height:21.3px;background:#d3d7dc"></div>
<div style="position:absolute;left:76.0px;top:319.500px;width:1px;height:21.3px;background:#d3d7dc"></div>
<div style="position:absolute;left:104.0px;top:319.500px;width:1px;height:21.3px;background:#d3d7dc"></div>
<div style="position:absolute;left:164.0px;top:319.500px;width:1px;height:21.3px;background:#d3d7dc"></div>
<div style="position:absolute;left:274.0px;top:319.500px;width:1px;height:21.3px;background:#d3d7dc"></div>
<div style="position:absolute;left:494.0px;top:319.500px;width:1px;height:21.3px;background:#d3d7dc"></div>
<div style="position:absolute;left:594.0px;top:319.500px;width:1px;height:21.3px;background:#d3d7dc"></div>
<div style="position:absolute;left:624.0px;top:319.500px;width:1px;height:21.3px;background:#d3d7dc"></div>
<div style="position:absolute;left:714.0px;top:319.500px;width:1px;height:21.3px;background:#d3d7dc"></div>
<div style="position:absolute;left:789.0px;top:319.500px;width:1px;height:21.3px;background:#d3d7dc"></div>
<div style="position:absolute;left:859.0px;top:319.500px;width:1px;height:21.3px;background:#d3d7dc"></div>
<div style="position:absolute;left:929.0px;top:319.500px;width:1px;height:21.3px;background:#d3d7dc"></div>
<div style="position:absolute;left:12px;top:323.00px;width:13px;height:13px;background:#fff;box-sizing:border-box;border:1px solid #767676;border-radius:2px"></div>
<svg style="position:absolute;left:42px;top:327.50px" width="8" height="8" viewBox="0 0 8 8"><path d="M1.2 1.2 L6.8 6.8 M6.8 1.2 L1.2 6.8" stroke="#b82428" stroke-width="1.9"/></svg>
<svg style="position:absolute;left:55px;top:323.00px" width="15" height="15" viewBox="0 0 14 14"><path d="M2.5 9.5 L10.5 1.5 L12.5 3.5 L4.5 11.5 Z" fill="#f0a040"/><path d="M10.5 1.5 L12.5 3.5 L11.5 4.5 L9.5 2.5 Z" fill="#e88a30"/><path d="M2.5 9.5 L4.5 11.5 L1 13 Z" fill="#f6e0b0"/><path d="M1 13 L1.8 11.3 L2.7 12.2 Z" fill="#333"/></svg>
<svg style="position:absolute;left:83.5px;top:321.50px" width="15" height="15" viewBox="0 0 15 15"><defs><linearGradient id="pg15" x1="0" y1="0" x2="0" y2="1"><stop offset="0" stop-color="#f0f0f0"/><stop offset="0.6" stop-color="#c8c8c8"/><stop offset="1" stop-color="#6a6a6a"/></linearGradient></defs><rect x="3" y="0.5" width="9" height="4" fill="#eee" stroke="#b8b8b8" stroke-width="0.8"/><rect x="0.5" y="4" width="14" height="7" rx="1.5" fill="url(#pg15)" stroke="#999" stroke-width="0.8"/><rect x="3" y="10" width="9" height="4.5" fill="#e8e8e8" stroke="#aaa" stroke-width="0.8"/><circle cx="12.2" cy="6.5" r="0.9" fill="#5c5"/><circle cx="12.2" cy="8.8" r="0.9" fill="#ea3"/></svg>
<div class="t" id="t201" style="transform:scaleX(1.0666);right:1732px;top:324.19px;font-size:11.5px;color:#222;font-weight:normal;transform-origin:right center;">102</div>
<div class="t" id="t202" style="transform:scaleX(1.0664);left:171.5px;top:324.19px;font-size:11.5px;color:#222;font-weight:normal;">00150</div>
<div class="t" id="t203" style="transform:scaleX(1.0613);left:281.5px;top:324.19px;font-size:11.5px;color:#222;font-weight:normal;">Tampo</div>
<div class="t" id="t204" style="transform:scaleX(1.0837);right:1327.5px;top:324.19px;font-size:11.5px;color:#222;font-weight:normal;transform-origin:right center;">20,00</div>
<svg style="position:absolute;left:565px;top:319.50px" width="24" height="21" viewBox="0 0 24 21"><ellipse cx="10" cy="18" rx="5.5" ry="0.9" fill="#000" opacity="0.10"/><g transform="translate(5.2,17.6) rotate(-45)"><line x1="0.3" y1="0" x2="8" y2="0" stroke="#8c8c8c" stroke-width="1.3"/><line x1="1.5" y1="-0.3" x2="7" y2="-0.3" stroke="#f0f0f0" stroke-width="0.6"/><path d="M7 -4.4 L8.2 -4.4 L10.8 -1.2 L10.8 1.2 L8.2 4.4 L7 4.4 Z" fill="#e03a42"/><path d="M10.8 -1.2 L12.6 -3.2 L15.9 -3.2 Q16.6 0 15.9 3.2 L12.6 3.2 L10.8 1.2 Z" fill="#e64c54"/><path d="M7.5 -3.6 L10.5 -0.6 L12.8 -2.5 L15.5 -2.5" fill="none" stroke="#f8a4a8" stroke-width="1"/><path d="M8 4 L10.8 1 L12.8 2.8 L15.6 2.8" fill="none" stroke="#b8202a" stroke-width="0.8"/></g></svg>
<div class="t" id="t205" style="transform:scaleX(1.0612);right:1272px;top:324.19px;font-size:11.5px;color:#222;font-weight:normal;transform-origin:right center;">un</div>
<div class="t" id="t206" style="transform:scaleX(1.1320);left:631.5px;top:324.19px;font-size:11.5px;color:#222;font-weight:normal;">30/06/21</div>
<svg style="position:absolute;left:683px;top:319.50px" width="24" height="21" viewBox="0 0 24 21"><ellipse cx="10" cy="18" rx="5.5" ry="0.9" fill="#000" opacity="0.10"/><g transform="translate(5.2,17.6) rotate(-45)"><line x1="0.3" y1="0" x2="8" y2="0" stroke="#8c8c8c" stroke-width="1.3"/><line x1="1.5" y1="-0.3" x2="7" y2="-0.3" stroke="#f0f0f0" stroke-width="0.6"/><path d="M7 -4.4 L8.2 -4.4 L10.8 -1.2 L10.8 1.2 L8.2 4.4 L7 4.4 Z" fill="#e03a42"/><path d="M10.8 -1.2 L12.6 -3.2 L15.9 -3.2 Q16.6 0 15.9 3.2 L12.6 3.2 L10.8 1.2 Z" fill="#e64c54"/><path d="M7.5 -3.6 L10.5 -0.6 L12.8 -2.5 L15.5 -2.5" fill="none" stroke="#f8a4a8" stroke-width="1"/><path d="M8 4 L10.8 1 L12.8 2.8 L15.6 2.8" fill="none" stroke="#b8202a" stroke-width="0.8"/></g></svg>
<div class="t" id="t207" style="transform:scaleX(1.0712);left:721.5px;top:324.19px;font-size:11.5px;color:#222;font-weight:normal;">A produzir</div>
<div class="t" id="t208" style="transform:scaleX(1.0883);right:1037px;top:324.19px;font-size:11.5px;color:#222;font-weight:normal;transform-origin:right center;">0,00</div>
<div class="t" id="t209" style="transform:scaleX(1.0837);right:967px;top:324.19px;font-size:11.5px;color:#222;font-weight:normal;transform-origin:right center;">20,00</div>
<div style="position:absolute;left:0;top:340.800px;width:1369px;height:21.3px;background:#fff"></div>
<div style="position:absolute;left:38.0px;top:340.800px;width:1px;height:21.3px;background:#d3d7dc"></div>
<div style="position:absolute;left:76.0px;top:340.800px;width:1px;height:21.3px;background:#d3d7dc"></div>
<div style="position:absolute;left:104.0px;top:340.800px;width:1px;height:21.3px;background:#d3d7dc"></div>
<div style="position:absolute;left:164.0px;top:340.800px;width:1px;height:21.3px;background:#d3d7dc"></div>
<div style="position:absolute;left:274.0px;top:340.800px;width:1px;height:21.3px;background:#d3d7dc"></div>
<div style="position:absolute;left:494.0px;top:340.800px;width:1px;height:21.3px;background:#d3d7dc"></div>
<div style="position:absolute;left:594.0px;top:340.800px;width:1px;height:21.3px;background:#d3d7dc"></div>
<div style="position:absolute;left:624.0px;top:340.800px;width:1px;height:21.3px;background:#d3d7dc"></div>
<div style="position:absolute;left:714.0px;top:340.800px;width:1px;height:21.3px;background:#d3d7dc"></div>
<div style="position:absolute;left:789.0px;top:340.800px;width:1px;height:21.3px;background:#d3d7dc"></div>
<div style="position:absolute;left:859.0px;top:340.800px;width:1px;height:21.3px;background:#d3d7dc"></div>
<div style="position:absolute;left:929.0px;top:340.800px;width:1px;height:21.3px;background:#d3d7dc"></div>
<div style="position:absolute;left:12px;top:344.30px;width:13px;height:13px;background:#fff;box-sizing:border-box;border:1px solid #767676;border-radius:2px"></div>
<svg style="position:absolute;left:42px;top:348.80px" width="8" height="8" viewBox="0 0 8 8"><path d="M1.2 1.2 L6.8 6.8 M6.8 1.2 L1.2 6.8" stroke="#b82428" stroke-width="1.9"/></svg>
<svg style="position:absolute;left:55px;top:344.30px" width="15" height="15" viewBox="0 0 14 14"><path d="M2.5 9.5 L10.5 1.5 L12.5 3.5 L4.5 11.5 Z" fill="#f0a040"/><path d="M10.5 1.5 L12.5 3.5 L11.5 4.5 L9.5 2.5 Z" fill="#e88a30"/><path d="M2.5 9.5 L4.5 11.5 L1 13 Z" fill="#f6e0b0"/><path d="M1 13 L1.8 11.3 L2.7 12.2 Z" fill="#333"/></svg>
<svg style="position:absolute;left:83.5px;top:342.80px" width="15" height="15" viewBox="0 0 15 15"><defs><linearGradient id="pg16" x1="0" y1="0" x2="0" y2="1"><stop offset="0" stop-color="#f0f0f0"/><stop offset="0.6" stop-color="#c8c8c8"/><stop offset="1" stop-color="#6a6a6a"/></linearGradient></defs><rect x="3" y="0.5" width="9" height="4" fill="#eee" stroke="#b8b8b8" stroke-width="0.8"/><rect x="0.5" y="4" width="14" height="7" rx="1.5" fill="url(#pg16)" stroke="#999" stroke-width="0.8"/><rect x="3" y="10" width="9" height="4.5" fill="#e8e8e8" stroke="#aaa" stroke-width="0.8"/><circle cx="12.2" cy="6.5" r="0.9" fill="#5c5"/><circle cx="12.2" cy="8.8" r="0.9" fill="#ea3"/></svg>
<div class="t" id="t210" style="transform:scaleX(1.0666);right:1732px;top:345.49px;font-size:11.5px;color:#222;font-weight:normal;transform-origin:right center;">100</div>
<div class="t" id="t211" style="transform:scaleX(1.0664);left:171.5px;top:345.49px;font-size:11.5px;color:#222;font-weight:normal;">00146</div>
<div class="t" id="t212" style="transform:scaleX(1.1434);left:281.5px;top:345.49px;font-size:11.5px;color:#222;font-weight:normal;">Item-1</div>
<div class="t" id="t213" style="transform:scaleX(1.0883);right:1327.5px;top:345.49px;font-size:11.5px;color:#222;font-weight:normal;transform-origin:right center;">3,00</div>
<svg style="position:absolute;left:565px;top:340.80px" width="24" height="21" viewBox="0 0 24 21"><ellipse cx="10" cy="18" rx="5.5" ry="0.9" fill="#000" opacity="0.10"/><g transform="translate(5.2,17.6) rotate(-45)"><line x1="0.3" y1="0" x2="8" y2="0" stroke="#8c8c8c" stroke-width="1.3"/><line x1="1.5" y1="-0.3" x2="7" y2="-0.3" stroke="#f0f0f0" stroke-width="0.6"/><path d="M7 -4.4 L8.2 -4.4 L10.8 -1.2 L10.8 1.2 L8.2 4.4 L7 4.4 Z" fill="#e03a42"/><path d="M10.8 -1.2 L12.6 -3.2 L15.9 -3.2 Q16.6 0 15.9 3.2 L12.6 3.2 L10.8 1.2 Z" fill="#e64c54"/><path d="M7.5 -3.6 L10.5 -0.6 L12.8 -2.5 L15.5 -2.5" fill="none" stroke="#f8a4a8" stroke-width="1"/><path d="M8 4 L10.8 1 L12.8 2.8 L15.6 2.8" fill="none" stroke="#b8202a" stroke-width="0.8"/></g></svg>
<div class="t" id="t214" style="transform:scaleX(1.0612);right:1272px;top:345.49px;font-size:11.5px;color:#222;font-weight:normal;transform-origin:right center;">un</div>
<div class="t" id="t215" style="transform:scaleX(1.1320);left:631.5px;top:345.49px;font-size:11.5px;color:#222;font-weight:normal;">30/04/21</div>
<svg style="position:absolute;left:683px;top:340.80px" width="24" height="21" viewBox="0 0 24 21"><ellipse cx="10" cy="18" rx="5.5" ry="0.9" fill="#000" opacity="0.10"/><g transform="translate(5.2,17.6) rotate(-45)"><line x1="0.3" y1="0" x2="8" y2="0" stroke="#8c8c8c" stroke-width="1.3"/><line x1="1.5" y1="-0.3" x2="7" y2="-0.3" stroke="#f0f0f0" stroke-width="0.6"/><path d="M7 -4.4 L8.2 -4.4 L10.8 -1.2 L10.8 1.2 L8.2 4.4 L7 4.4 Z" fill="#e03a42"/><path d="M10.8 -1.2 L12.6 -3.2 L15.9 -3.2 Q16.6 0 15.9 3.2 L12.6 3.2 L10.8 1.2 Z" fill="#e64c54"/><path d="M7.5 -3.6 L10.5 -0.6 L12.8 -2.5 L15.5 -2.5" fill="none" stroke="#f8a4a8" stroke-width="1"/><path d="M8 4 L10.8 1 L12.8 2.8 L15.6 2.8" fill="none" stroke="#b8202a" stroke-width="0.8"/></g></svg>
<div class="t" id="t216" style="transform:scaleX(1.0712);left:721.5px;top:345.49px;font-size:11.5px;color:#222;font-weight:normal;">A produzir</div>
<div class="t" id="t217" style="transform:scaleX(1.0883);right:1037px;top:345.49px;font-size:11.5px;color:#222;font-weight:normal;transform-origin:right center;">0,00</div>
<div class="t" id="t218" style="transform:scaleX(1.0883);right:967px;top:345.49px;font-size:11.5px;color:#222;font-weight:normal;transform-origin:right center;">3,00</div>
<div class="t" id="t219" style="transform:scaleX(1.0820);left:936.5px;top:345.49px;font-size:11.5px;color:#1a62d8;font-weight:normal;">105 #1 (1) Mercado Sul</div>
<div style="position:absolute;left:0;top:362.100px;width:1369px;height:21.3px;background:#eff0f3"></div>
<div style="position:absolute;left:38.0px;top:362.100px;width:1px;height:21.3px;background:#d3d7dc"></div>
<div style="position:absolute;left:76.0px;top:362.100px;width:1px;height:21.3px;background:#d3d7dc"></div>
<div style="position:absolute;left:104.0px;top:362.100px;width:1px;height:21.3px;background:#d3d7dc"></div>
<div style="position:absolute;left:164.0px;top:362.100px;width:1px;height:21.3px;background:#d3d7dc"></div>
<div style="position:absolute;left:274.0px;top:362.100px;width:1px;height:21.3px;background:#d3d7dc"></div>
<div style="position:absolute;left:494.0px;top:362.100px;width:1px;height:21.3px;background:#d3d7dc"></div>
<div style="position:absolute;left:594.0px;top:362.100px;width:1px;height:21.3px;background:#d3d7dc"></div>
<div style="position:absolute;left:624.0px;top:362.100px;width:1px;height:21.3px;background:#d3d7dc"></div>
<div style="position:absolute;left:714.0px;top:362.100px;width:1px;height:21.3px;background:#d3d7dc"></div>
<div style="position:absolute;left:789.0px;top:362.100px;width:1px;height:21.3px;background:#d3d7dc"></div>
<div style="position:absolute;left:859.0px;top:362.100px;width:1px;height:21.3px;background:#d3d7dc"></div>
<div style="position:absolute;left:929.0px;top:362.100px;width:1px;height:21.3px;background:#d3d7dc"></div>
<div style="position:absolute;left:12px;top:365.60px;width:13px;height:13px;background:#fff;box-sizing:border-box;border:1px solid #767676;border-radius:2px"></div>
<svg style="position:absolute;left:42px;top:370.10px" width="8" height="8" viewBox="0 0 8 8"><path d="M1.2 1.2 L6.8 6.8 M6.8 1.2 L1.2 6.8" stroke="#b82428" stroke-width="1.9"/></svg>
<svg style="position:absolute;left:55px;top:365.60px" width="15" height="15" viewBox="0 0 14 14"><path d="M2.5 9.5 L10.5 1.5 L12.5 3.5 L4.5 11.5 Z" fill="#f0a040"/><path d="M10.5 1.5 L12.5 3.5 L11.5 4.5 L9.5 2.5 Z" fill="#e88a30"/><path d="M2.5 9.5 L4.5 11.5 L1 13 Z" fill="#f6e0b0"/><path d="M1 13 L1.8 11.3 L2.7 12.2 Z" fill="#333"/></svg>
<svg style="position:absolute;left:83.5px;top:364.10px" width="15" height="15" viewBox="0 0 15 15"><defs><linearGradient id="pg17" x1="0" y1="0" x2="0" y2="1"><stop offset="0" stop-color="#f0f0f0"/><stop offset="0.6" stop-color="#c8c8c8"/><stop offset="1" stop-color="#6a6a6a"/></linearGradient></defs><rect x="3" y="0.5" width="9" height="4" fill="#eee" stroke="#b8b8b8" stroke-width="0.8"/><rect x="0.5" y="4" width="14" height="7" rx="1.5" fill="url(#pg17)" stroke="#999" stroke-width="0.8"/><rect x="3" y="10" width="9" height="4.5" fill="#e8e8e8" stroke="#aaa" stroke-width="0.8"/><circle cx="12.2" cy="6.5" r="0.9" fill="#5c5"/><circle cx="12.2" cy="8.8" r="0.9" fill="#ea3"/></svg>
<div class="t" id="t220" style="transform:scaleX(1.0661);right:1732px;top:366.79px;font-size:11.5px;color:#222;font-weight:normal;transform-origin:right center;">99</div>
<div class="t" id="t221" style="transform:scaleX(1.0664);left:171.5px;top:366.79px;font-size:11.5px;color:#222;font-weight:normal;">00030</div>
<div class="t" id="t222" style="transform:scaleX(1.0527);left:281.5px;top:366.79px;font-size:11.5px;color:#222;font-weight:normal;">Frete 2</div>
<div class="t" id="t223" style="transform:scaleX(1.0883);right:1327.5px;top:366.79px;font-size:11.5px;color:#222;font-weight:normal;transform-origin:right center;">1,00</div>
<svg style="position:absolute;left:565px;top:362.10px" width="24" height="21" viewBox="0 0 24 21"><ellipse cx="10" cy="18" rx="5.5" ry="0.9" fill="#000" opacity="0.10"/><g transform="translate(5.2,17.6) rotate(-45)"><line x1="0.3" y1="0" x2="8" y2="0" stroke="#8c8c8c" stroke-width="1.3"/><line x1="1.5" y1="-0.3" x2="7" y2="-0.3" stroke="#f0f0f0" stroke-width="0.6"/><path d="M7 -4.4 L8.2 -4.4 L10.8 -1.2 L10.8 1.2 L8.2 4.4 L7 4.4 Z" fill="#e03a42"/><path d="M10.8 -1.2 L12.6 -3.2 L15.9 -3.2 Q16.6 0 15.9 3.2 L12.6 3.2 L10.8 1.2 Z" fill="#e64c54"/><path d="M7.5 -3.6 L10.5 -0.6 L12.8 -2.5 L15.5 -2.5" fill="none" stroke="#f8a4a8" stroke-width="1"/><path d="M8 4 L10.8 1 L12.8 2.8 L15.6 2.8" fill="none" stroke="#b8202a" stroke-width="0.8"/></g></svg>
<div class="t" id="t224" style="transform:scaleX(1.0612);right:1272px;top:366.79px;font-size:11.5px;color:#222;font-weight:normal;transform-origin:right center;">un</div>
<div class="t" id="t225" style="transform:scaleX(1.1537);left:631.5px;top:366.79px;font-size:11.5px;color:#222;font-weight:normal;">05/11/20</div>
<svg style="position:absolute;left:683px;top:362.10px" width="24" height="21" viewBox="0 0 24 21"><ellipse cx="10" cy="18" rx="5.5" ry="0.9" fill="#000" opacity="0.10"/><g transform="translate(5.2,17.6) rotate(-45)"><line x1="0.3" y1="0" x2="8" y2="0" stroke="#8c8c8c" stroke-width="1.3"/><line x1="1.5" y1="-0.3" x2="7" y2="-0.3" stroke="#f0f0f0" stroke-width="0.6"/><path d="M7 -4.4 L8.2 -4.4 L10.8 -1.2 L10.8 1.2 L8.2 4.4 L7 4.4 Z" fill="#e03a42"/><path d="M10.8 -1.2 L12.6 -3.2 L15.9 -3.2 Q16.6 0 15.9 3.2 L12.6 3.2 L10.8 1.2 Z" fill="#e64c54"/><path d="M7.5 -3.6 L10.5 -0.6 L12.8 -2.5 L15.5 -2.5" fill="none" stroke="#f8a4a8" stroke-width="1"/><path d="M8 4 L10.8 1 L12.8 2.8 L15.6 2.8" fill="none" stroke="#b8202a" stroke-width="0.8"/></g></svg>
<div class="t" id="t226" style="transform:scaleX(1.0712);left:721.5px;top:366.79px;font-size:11.5px;color:#222;font-weight:normal;">A produzir</div>
<div class="t" id="t227" style="transform:scaleX(1.0883);right:1037px;top:366.79px;font-size:11.5px;color:#222;font-weight:normal;transform-origin:right center;">0,00</div>
<div class="t" id="t228" style="transform:scaleX(1.0883);right:967px;top:366.79px;font-size:11.5px;color:#222;font-weight:normal;transform-origin:right center;">1,00</div>
<div style="position:absolute;left:0;top:383.400px;width:1369px;height:21.3px;background:#fff"></div>
<div style="position:absolute;left:38.0px;top:383.400px;width:1px;height:21.3px;background:#d3d7dc"></div>
<div style="position:absolute;left:76.0px;top:383.400px;width:1px;height:21.3px;background:#d3d7dc"></div>
<div style="position:absolute;left:104.0px;top:383.400px;width:1px;height:21.3px;background:#d3d7dc"></div>
<div style="position:absolute;left:164.0px;top:383.400px;width:1px;height:21.3px;background:#d3d7dc"></div>
<div style="position:absolute;left:274.0px;top:383.400px;width:1px;height:21.3px;background:#d3d7dc"></div>
<div style="position:absolute;left:494.0px;top:383.400px;width:1px;height:21.3px;background:#d3d7dc"></div>
<div style="position:absolute;left:594.0px;top:383.400px;width:1px;height:21.3px;background:#d3d7dc"></div>
<div style="position:absolute;left:624.0px;top:383.400px;width:1px;height:21.3px;background:#d3d7dc"></div>
<div style="position:absolute;left:714.0px;top:383.400px;width:1px;height:21.3px;background:#d3d7dc"></div>
<div style="position:absolute;left:789.0px;top:383.400px;width:1px;height:21.3px;background:#d3d7dc"></div>
<div style="position:absolute;left:859.0px;top:383.400px;width:1px;height:21.3px;background:#d3d7dc"></div>
<div style="position:absolute;left:929.0px;top:383.400px;width:1px;height:21.3px;background:#d3d7dc"></div>
<div style="position:absolute;left:12px;top:386.90px;width:13px;height:13px;background:#fff;box-sizing:border-box;border:1px solid #767676;border-radius:2px"></div>
<svg style="position:absolute;left:42px;top:391.40px" width="8" height="8" viewBox="0 0 8 8"><path d="M1.2 1.2 L6.8 6.8 M6.8 1.2 L1.2 6.8" stroke="#b82428" stroke-width="1.9"/></svg>
<svg style="position:absolute;left:55px;top:386.90px" width="15" height="15" viewBox="0 0 14 14"><path d="M2.5 9.5 L10.5 1.5 L12.5 3.5 L4.5 11.5 Z" fill="#f0a040"/><path d="M10.5 1.5 L12.5 3.5 L11.5 4.5 L9.5 2.5 Z" fill="#e88a30"/><path d="M2.5 9.5 L4.5 11.5 L1 13 Z" fill="#f6e0b0"/><path d="M1 13 L1.8 11.3 L2.7 12.2 Z" fill="#333"/></svg>
<svg style="position:absolute;left:83.5px;top:385.40px" width="15" height="15" viewBox="0 0 15 15"><defs><linearGradient id="pg18" x1="0" y1="0" x2="0" y2="1"><stop offset="0" stop-color="#f0f0f0"/><stop offset="0.6" stop-color="#c8c8c8"/><stop offset="1" stop-color="#6a6a6a"/></linearGradient></defs><rect x="3" y="0.5" width="9" height="4" fill="#eee" stroke="#b8b8b8" stroke-width="0.8"/><rect x="0.5" y="4" width="14" height="7" rx="1.5" fill="url(#pg18)" stroke="#999" stroke-width="0.8"/><rect x="3" y="10" width="9" height="4.5" fill="#e8e8e8" stroke="#aaa" stroke-width="0.8"/><circle cx="12.2" cy="6.5" r="0.9" fill="#5c5"/><circle cx="12.2" cy="8.8" r="0.9" fill="#ea3"/></svg>
<div class="t" id="t229" style="transform:scaleX(1.0661);right:1732px;top:388.09px;font-size:11.5px;color:#222;font-weight:normal;transform-origin:right center;">98</div>
<div class="t" id="t230" style="transform:scaleX(1.0664);left:171.5px;top:388.09px;font-size:11.5px;color:#222;font-weight:normal;">00030</div>
<div class="t" id="t231" style="transform:scaleX(1.0527);left:281.5px;top:388.09px;font-size:11.5px;color:#222;font-weight:normal;">Frete 2</div>
<div class="t" id="t232" style="transform:scaleX(1.0883);right:1327.5px;top:388.09px;font-size:11.5px;color:#222;font-weight:normal;transform-origin:right center;">1,00</div>
<svg style="position:absolute;left:565px;top:383.40px" width="24" height="21" viewBox="0 0 24 21"><ellipse cx="10" cy="18" rx="5.5" ry="0.9" fill="#000" opacity="0.10"/><g transform="translate(5.2,17.6) rotate(-45)"><line x1="0.3" y1="0" x2="8" y2="0" stroke="#8c8c8c" stroke-width="1.3"/><line x1="1.5" y1="-0.3" x2="7" y2="-0.3" stroke="#f0f0f0" stroke-width="0.6"/><path d="M7 -4.4 L8.2 -4.4 L10.8 -1.2 L10.8 1.2 L8.2 4.4 L7 4.4 Z" fill="#e03a42"/><path d="M10.8 -1.2 L12.6 -3.2 L15.9 -3.2 Q16.6 0 15.9 3.2 L12.6 3.2 L10.8 1.2 Z" fill="#e64c54"/><path d="M7.5 -3.6 L10.5 -0.6 L12.8 -2.5 L15.5 -2.5" fill="none" stroke="#f8a4a8" stroke-width="1"/><path d="M8 4 L10.8 1 L12.8 2.8 L15.6 2.8" fill="none" stroke="#b8202a" stroke-width="0.8"/></g></svg>
<div class="t" id="t233" style="transform:scaleX(1.0612);right:1272px;top:388.09px;font-size:11.5px;color:#222;font-weight:normal;transform-origin:right center;">un</div>
<div class="t" id="t234" style="transform:scaleX(1.1320);left:631.5px;top:388.09px;font-size:11.5px;color:#222;font-weight:normal;">13/10/20</div>
<svg style="position:absolute;left:683px;top:383.40px" width="24" height="21" viewBox="0 0 24 21"><ellipse cx="10" cy="18" rx="5.5" ry="0.9" fill="#000" opacity="0.10"/><g transform="translate(5.2,17.6) rotate(-45)"><line x1="0.3" y1="0" x2="8" y2="0" stroke="#8c8c8c" stroke-width="1.3"/><line x1="1.5" y1="-0.3" x2="7" y2="-0.3" stroke="#f0f0f0" stroke-width="0.6"/><path d="M7 -4.4 L8.2 -4.4 L10.8 -1.2 L10.8 1.2 L8.2 4.4 L7 4.4 Z" fill="#e03a42"/><path d="M10.8 -1.2 L12.6 -3.2 L15.9 -3.2 Q16.6 0 15.9 3.2 L12.6 3.2 L10.8 1.2 Z" fill="#e64c54"/><path d="M7.5 -3.6 L10.5 -0.6 L12.8 -2.5 L15.5 -2.5" fill="none" stroke="#f8a4a8" stroke-width="1"/><path d="M8 4 L10.8 1 L12.8 2.8 L15.6 2.8" fill="none" stroke="#b8202a" stroke-width="0.8"/></g></svg>
<div class="t" id="t235" style="transform:scaleX(1.0712);left:721.5px;top:388.09px;font-size:11.5px;color:#222;font-weight:normal;">A produzir</div>
<div class="t" id="t236" style="transform:scaleX(1.0883);right:1037px;top:388.09px;font-size:11.5px;color:#222;font-weight:normal;transform-origin:right center;">0,00</div>
<div class="t" id="t237" style="transform:scaleX(1.0883);right:967px;top:388.09px;font-size:11.5px;color:#222;font-weight:normal;transform-origin:right center;">1,00</div>
<div style="position:absolute;left:0;top:404.700px;width:1369px;height:21.3px;background:#eff0f3"></div>
<div style="position:absolute;left:38.0px;top:404.700px;width:1px;height:21.3px;background:#d3d7dc"></div>
<div style="position:absolute;left:76.0px;top:404.700px;width:1px;height:21.3px;background:#d3d7dc"></div>
<div style="position:absolute;left:104.0px;top:404.700px;width:1px;height:21.3px;background:#d3d7dc"></div>
<div style="position:absolute;left:164.0px;top:404.700px;width:1px;height:21.3px;background:#d3d7dc"></div>
<div style="position:absolute;left:274.0px;top:404.700px;width:1px;height:21.3px;background:#d3d7dc"></div>
<div style="position:absolute;left:494.0px;top:404.700px;width:1px;height:21.3px;background:#d3d7dc"></div>
<div style="position:absolute;left:594.0px;top:404.700px;width:1px;height:21.3px;background:#d3d7dc"></div>
<div style="position:absolute;left:624.0px;top:404.700px;width:1px;height:21.3px;background:#d3d7dc"></div>
<div style="position:absolute;left:714.0px;top:404.700px;width:1px;height:21.3px;background:#d3d7dc"></div>
<div style="position:absolute;left:789.0px;top:404.700px;width:1px;height:21.3px;background:#d3d7dc"></div>
<div style="position:absolute;left:859.0px;top:404.700px;width:1px;height:21.3px;background:#d3d7dc"></div>
<div style="position:absolute;left:929.0px;top:404.700px;width:1px;height:21.3px;background:#d3d7dc"></div>
<div style="position:absolute;left:12px;top:408.20px;width:13px;height:13px;background:#fff;box-sizing:border-box;border:1px solid #767676;border-radius:2px"></div>
<svg style="position:absolute;left:42px;top:412.70px" width="8" height="8" viewBox="0 0 8 8"><path d="M1.2 1.2 L6.8 6.8 M6.8 1.2 L1.2 6.8" stroke="#b82428" stroke-width="1.9"/></svg>
<svg style="position:absolute;left:55px;top:408.20px" width="15" height="15" viewBox="0 0 14 14"><path d="M2.5 9.5 L10.5 1.5 L12.5 3.5 L4.5 11.5 Z" fill="#f0a040"/><path d="M10.5 1.5 L12.5 3.5 L11.5 4.5 L9.5 2.5 Z" fill="#e88a30"/><path d="M2.5 9.5 L4.5 11.5 L1 13 Z" fill="#f6e0b0"/><path d="M1 13 L1.8 11.3 L2.7 12.2 Z" fill="#333"/></svg>
<svg style="position:absolute;left:83.5px;top:406.70px" width="15" height="15" viewBox="0 0 15 15"><defs><linearGradient id="pg19" x1="0" y1="0" x2="0" y2="1"><stop offset="0" stop-color="#f0f0f0"/><stop offset="0.6" stop-color="#c8c8c8"/><stop offset="1" stop-color="#6a6a6a"/></linearGradient></defs><rect x="3" y="0.5" width="9" height="4" fill="#eee" stroke="#b8b8b8" stroke-width="0.8"/><rect x="0.5" y="4" width="14" height="7" rx="1.5" fill="url(#pg19)" stroke="#999" stroke-width="0.8"/><rect x="3" y="10" width="9" height="4.5" fill="#e8e8e8" stroke="#aaa" stroke-width="0.8"/><circle cx="12.2" cy="6.5" r="0.9" fill="#5c5"/><circle cx="12.2" cy="8.8" r="0.9" fill="#ea3"/></svg>
<div class="t" id="t238" style="transform:scaleX(1.0661);right:1732px;top:409.39px;font-size:11.5px;color:#222;font-weight:normal;transform-origin:right center;">91</div>
<div class="t" id="t239" style="transform:scaleX(1.0664);left:171.5px;top:409.39px;font-size:11.5px;color:#222;font-weight:normal;">00022</div>
<div class="t" id="t240" style="transform:scaleX(1.0812);left:281.5px;top:409.39px;font-size:11.5px;color:#222;font-weight:normal;">Item-Pai</div>
<div class="t" id="t241" style="transform:scaleX(1.0883);right:1327.5px;top:409.39px;font-size:11.5px;color:#222;font-weight:normal;transform-origin:right center;">1,00</div>
<svg style="position:absolute;left:565px;top:404.70px" width="24" height="21" viewBox="0 0 24 21"><ellipse cx="10" cy="18" rx="5.5" ry="0.9" fill="#000" opacity="0.10"/><g transform="translate(5.2,17.6) rotate(-45)"><line x1="0.3" y1="0" x2="8" y2="0" stroke="#8c8c8c" stroke-width="1.3"/><line x1="1.5" y1="-0.3" x2="7" y2="-0.3" stroke="#f0f0f0" stroke-width="0.6"/><path d="M7 -4.4 L8.2 -4.4 L10.8 -1.2 L10.8 1.2 L8.2 4.4 L7 4.4 Z" fill="#e03a42"/><path d="M10.8 -1.2 L12.6 -3.2 L15.9 -3.2 Q16.6 0 15.9 3.2 L12.6 3.2 L10.8 1.2 Z" fill="#e64c54"/><path d="M7.5 -3.6 L10.5 -0.6 L12.8 -2.5 L15.5 -2.5" fill="none" stroke="#f8a4a8" stroke-width="1"/><path d="M8 4 L10.8 1 L12.8 2.8 L15.6 2.8" fill="none" stroke="#b8202a" stroke-width="0.8"/></g></svg>
<div class="t" id="t242" style="transform:scaleX(1.0612);right:1272px;top:409.39px;font-size:11.5px;color:#222;font-weight:normal;transform-origin:right center;">un</div>
<div class="t" id="t243" style="transform:scaleX(1.1320);left:631.5px;top:409.39px;font-size:11.5px;color:#222;font-weight:normal;">30/06/20</div>
<svg style="position:absolute;left:683px;top:404.70px" width="24" height="21" viewBox="0 0 24 21"><ellipse cx="10" cy="18" rx="5.5" ry="0.9" fill="#000" opacity="0.10"/><g transform="translate(5.2,17.6) rotate(-45)"><line x1="0.3" y1="0" x2="8" y2="0" stroke="#8c8c8c" stroke-width="1.3"/><line x1="1.5" y1="-0.3" x2="7" y2="-0.3" stroke="#f0f0f0" stroke-width="0.6"/><path d="M7 -4.4 L8.2 -4.4 L10.8 -1.2 L10.8 1.2 L8.2 4.4 L7 4.4 Z" fill="#e03a42"/><path d="M10.8 -1.2 L12.6 -3.2 L15.9 -3.2 Q16.6 0 15.9 3.2 L12.6 3.2 L10.8 1.2 Z" fill="#e64c54"/><path d="M7.5 -3.6 L10.5 -0.6 L12.8 -2.5 L15.5 -2.5" fill="none" stroke="#f8a4a8" stroke-width="1"/><path d="M8 4 L10.8 1 L12.8 2.8 L15.6 2.8" fill="none" stroke="#b8202a" stroke-width="0.8"/></g></svg>
<div class="t" id="t244" style="transform:scaleX(1.0712);left:721.5px;top:409.39px;font-size:11.5px;color:#222;font-weight:normal;">A produzir</div>
<div class="t" id="t245" style="transform:scaleX(1.0883);right:1037px;top:409.39px;font-size:11.5px;color:#222;font-weight:normal;transform-origin:right center;">0,00</div>
<div class="t" id="t246" style="transform:scaleX(1.0883);right:967px;top:409.39px;font-size:11.5px;color:#222;font-weight:normal;transform-origin:right center;">1,00</div>
<div class="t" id="t247" style="transform:scaleX(1.1037);left:936.5px;top:409.39px;font-size:11.5px;color:#1f6e1f;font-weight:normal;">21 #1 (1) Cliente 123</div>
<div style="position:absolute;left:0;top:426.000px;width:1369px;height:21.3px;background:#fff"></div>
<div style="position:absolute;left:38.0px;top:426.000px;width:1px;height:21.3px;background:#d3d7dc"></div>
<div style="position:absolute;left:76.0px;top:426.000px;width:1px;height:21.3px;background:#d3d7dc"></div>
<div style="position:absolute;left:104.0px;top:426.000px;width:1px;height:21.3px;background:#d3d7dc"></div>
<div style="position:absolute;left:164.0px;top:426.000px;width:1px;height:21.3px;background:#d3d7dc"></div>
<div style="position:absolute;left:274.0px;top:426.000px;width:1px;height:21.3px;background:#d3d7dc"></div>
<div style="position:absolute;left:494.0px;top:426.000px;width:1px;height:21.3px;background:#d3d7dc"></div>
<div style="position:absolute;left:594.0px;top:426.000px;width:1px;height:21.3px;background:#d3d7dc"></div>
<div style="position:absolute;left:624.0px;top:426.000px;width:1px;height:21.3px;background:#d3d7dc"></div>
<div style="position:absolute;left:714.0px;top:426.000px;width:1px;height:21.3px;background:#d3d7dc"></div>
<div style="position:absolute;left:789.0px;top:426.000px;width:1px;height:21.3px;background:#d3d7dc"></div>
<div style="position:absolute;left:859.0px;top:426.000px;width:1px;height:21.3px;background:#d3d7dc"></div>
<div style="position:absolute;left:929.0px;top:426.000px;width:1px;height:21.3px;background:#d3d7dc"></div>
<div style="position:absolute;left:12px;top:429.50px;width:13px;height:13px;background:#fff;box-sizing:border-box;border:1px solid #767676;border-radius:2px"></div>
<svg style="position:absolute;left:42px;top:434.00px" width="8" height="8" viewBox="0 0 8 8"><path d="M1.2 1.2 L6.8 6.8 M6.8 1.2 L1.2 6.8" stroke="#b82428" stroke-width="1.9"/></svg>
<svg style="position:absolute;left:55px;top:429.50px" width="15" height="15" viewBox="0 0 14 14"><path d="M2.5 9.5 L10.5 1.5 L12.5 3.5 L4.5 11.5 Z" fill="#f0a040"/><path d="M10.5 1.5 L12.5 3.5 L11.5 4.5 L9.5 2.5 Z" fill="#e88a30"/><path d="M2.5 9.5 L4.5 11.5 L1 13 Z" fill="#f6e0b0"/><path d="M1 13 L1.8 11.3 L2.7 12.2 Z" fill="#333"/></svg>
<svg style="position:absolute;left:83.5px;top:428.00px" width="15" height="15" viewBox="0 0 15 15"><defs><linearGradient id="pg20" x1="0" y1="0" x2="0" y2="1"><stop offset="0" stop-color="#f0f0f0"/><stop offset="0.6" stop-color="#c8c8c8"/><stop offset="1" stop-color="#6a6a6a"/></linearGradient></defs><rect x="3" y="0.5" width="9" height="4" fill="#eee" stroke="#b8b8b8" stroke-width="0.8"/><rect x="0.5" y="4" width="14" height="7" rx="1.5" fill="url(#pg20)" stroke="#999" stroke-width="0.8"/><rect x="3" y="10" width="9" height="4.5" fill="#e8e8e8" stroke="#aaa" stroke-width="0.8"/><circle cx="12.2" cy="6.5" r="0.9" fill="#5c5"/><circle cx="12.2" cy="8.8" r="0.9" fill="#ea3"/></svg>
<div class="t" id="t248" style="transform:scaleX(1.0661);right:1732px;top:430.69px;font-size:11.5px;color:#222;font-weight:normal;transform-origin:right center;">90</div>
<div class="t" id="t249" style="transform:scaleX(1.0953);left:171.5px;top:430.69px;font-size:11.5px;color:#222;font-weight:normal;">00011</div>
<div class="t" id="t250" style="transform:scaleX(1.0270);left:281.5px;top:430.69px;font-size:11.5px;color:#222;font-weight:normal;">Parafusos para Bicicleta Candemil Lt...</div>
<div class="t" id="t251" style="transform:scaleX(1.0837);right:1327.5px;top:430.69px;font-size:11.5px;color:#222;font-weight:normal;transform-origin:right center;">10,00</div>
<svg style="position:absolute;left:565px;top:426.00px" width="24" height="21" viewBox="0 0 24 21"><ellipse cx="10" cy="18" rx="5.5" ry="0.9" fill="#000" opacity="0.10"/><g transform="translate(5.2,17.6) rotate(-45)"><line x1="0.3" y1="0" x2="8" y2="0" stroke="#8c8c8c" stroke-width="1.3"/><line x1="1.5" y1="-0.3" x2="7" y2="-0.3" stroke="#f0f0f0" stroke-width="0.6"/><path d="M7 -4.4 L8.2 -4.4 L10.8 -1.2 L10.8 1.2 L8.2 4.4 L7 4.4 Z" fill="#e03a42"/><path d="M10.8 -1.2 L12.6 -3.2 L15.9 -3.2 Q16.6 0 15.9 3.2 L12.6 3.2 L10.8 1.2 Z" fill="#e64c54"/><path d="M7.5 -3.6 L10.5 -0.6 L12.8 -2.5 L15.5 -2.5" fill="none" stroke="#f8a4a8" stroke-width="1"/><path d="M8 4 L10.8 1 L12.8 2.8 L15.6 2.8" fill="none" stroke="#b8202a" stroke-width="0.8"/></g></svg>
<div class="t" id="t252" style="transform:scaleX(0.8735);right:1272px;top:430.69px;font-size:11.5px;color:#222;font-weight:normal;transform-origin:right center;">PC</div>
<div class="t" id="t253" style="transform:scaleX(1.1320);left:631.5px;top:430.69px;font-size:11.5px;color:#222;font-weight:normal;">30/06/20</div>
<svg style="position:absolute;left:683px;top:426.00px" width="24" height="21" viewBox="0 0 24 21"><ellipse cx="10" cy="18" rx="5.5" ry="0.9" fill="#000" opacity="0.10"/><g transform="translate(5.2,17.6) rotate(-45)"><line x1="0.3" y1="0" x2="8" y2="0" stroke="#8c8c8c" stroke-width="1.3"/><line x1="1.5" y1="-0.3" x2="7" y2="-0.3" stroke="#f0f0f0" stroke-width="0.6"/><path d="M7 -4.4 L8.2 -4.4 L10.8 -1.2 L10.8 1.2 L8.2 4.4 L7 4.4 Z" fill="#e03a42"/><path d="M10.8 -1.2 L12.6 -3.2 L15.9 -3.2 Q16.6 0 15.9 3.2 L12.6 3.2 L10.8 1.2 Z" fill="#e64c54"/><path d="M7.5 -3.6 L10.5 -0.6 L12.8 -2.5 L15.5 -2.5" fill="none" stroke="#f8a4a8" stroke-width="1"/><path d="M8 4 L10.8 1 L12.8 2.8 L15.6 2.8" fill="none" stroke="#b8202a" stroke-width="0.8"/></g></svg>
<div class="t" id="t254" style="transform:scaleX(1.0712);left:721.5px;top:430.69px;font-size:11.5px;color:#222;font-weight:normal;">A produzir</div>
<div class="t" id="t255" style="transform:scaleX(1.0883);right:1037px;top:430.69px;font-size:11.5px;color:#222;font-weight:normal;transform-origin:right center;">0,00</div>
<div class="t" id="t256" style="transform:scaleX(1.0837);right:967px;top:430.69px;font-size:11.5px;color:#222;font-weight:normal;transform-origin:right center;">10,00</div>
<div class="t" id="t257" style="transform:scaleX(1.1016);left:936.5px;top:430.69px;font-size:11.5px;color:#1f6e1f;font-weight:normal;">25 #1 (10) Cliente 123</div>
<div style="position:absolute;left:0;top:447.300px;width:1369px;height:21.3px;background:#eff0f3"></div>
<div style="position:absolute;left:38.0px;top:447.300px;width:1px;height:21.3px;background:#d3d7dc"></div>
<div style="position:absolute;left:76.0px;top:447.300px;width:1px;height:21.3px;background:#d3d7dc"></div>
<div style="position:absolute;left:104.0px;top:447.300px;width:1px;height:21.3px;background:#d3d7dc"></div>
<div style="position:absolute;left:164.0px;top:447.300px;width:1px;height:21.3px;background:#d3d7dc"></div>
<div style="position:absolute;left:274.0px;top:447.300px;width:1px;height:21.3px;background:#d3d7dc"></div>
<div style="position:absolute;left:494.0px;top:447.300px;width:1px;height:21.3px;background:#d3d7dc"></div>
<div style="position:absolute;left:594.0px;top:447.300px;width:1px;height:21.3px;background:#d3d7dc"></div>
<div style="position:absolute;left:624.0px;top:447.300px;width:1px;height:21.3px;background:#d3d7dc"></div>
<div style="position:absolute;left:714.0px;top:447.300px;width:1px;height:21.3px;background:#d3d7dc"></div>
<div style="position:absolute;left:789.0px;top:447.300px;width:1px;height:21.3px;background:#d3d7dc"></div>
<div style="position:absolute;left:859.0px;top:447.300px;width:1px;height:21.3px;background:#d3d7dc"></div>
<div style="position:absolute;left:929.0px;top:447.300px;width:1px;height:21.3px;background:#d3d7dc"></div>
<div style="position:absolute;left:12px;top:450.80px;width:13px;height:13px;background:#fff;box-sizing:border-box;border:1px solid #767676;border-radius:2px"></div>
<svg style="position:absolute;left:42px;top:455.30px" width="8" height="8" viewBox="0 0 8 8"><path d="M1.2 1.2 L6.8 6.8 M6.8 1.2 L1.2 6.8" stroke="#b82428" stroke-width="1.9"/></svg>
<svg style="position:absolute;left:55px;top:450.80px" width="15" height="15" viewBox="0 0 14 14"><path d="M2.5 9.5 L10.5 1.5 L12.5 3.5 L4.5 11.5 Z" fill="#f0a040"/><path d="M10.5 1.5 L12.5 3.5 L11.5 4.5 L9.5 2.5 Z" fill="#e88a30"/><path d="M2.5 9.5 L4.5 11.5 L1 13 Z" fill="#f6e0b0"/><path d="M1 13 L1.8 11.3 L2.7 12.2 Z" fill="#333"/></svg>
<svg style="position:absolute;left:83.5px;top:449.30px" width="15" height="15" viewBox="0 0 15 15"><defs><linearGradient id="pg21" x1="0" y1="0" x2="0" y2="1"><stop offset="0" stop-color="#f0f0f0"/><stop offset="0.6" stop-color="#c8c8c8"/><stop offset="1" stop-color="#6a6a6a"/></linearGradient></defs><rect x="3" y="0.5" width="9" height="4" fill="#eee" stroke="#b8b8b8" stroke-width="0.8"/><rect x="0.5" y="4" width="14" height="7" rx="1.5" fill="url(#pg21)" stroke="#999" stroke-width="0.8"/><rect x="3" y="10" width="9" height="4.5" fill="#e8e8e8" stroke="#aaa" stroke-width="0.8"/><circle cx="12.2" cy="6.5" r="0.9" fill="#5c5"/><circle cx="12.2" cy="8.8" r="0.9" fill="#ea3"/></svg>
<div class="t" id="t258" style="transform:scaleX(1.0661);right:1732px;top:451.99px;font-size:11.5px;color:#222;font-weight:normal;transform-origin:right center;">89</div>
<div class="t" id="t259" style="transform:scaleX(1.0953);left:171.5px;top:451.99px;font-size:11.5px;color:#222;font-weight:normal;">00011</div>
<div class="t" id="t260" style="transform:scaleX(1.0270);left:281.5px;top:451.99px;font-size:11.5px;color:#222;font-weight:normal;">Parafusos para Bicicleta Candemil Lt...</div>
<div class="t" id="t261" style="transform:scaleX(1.0883);right:1327.5px;top:451.99px;font-size:11.5px;color:#222;font-weight:normal;transform-origin:right center;">1,00</div>
<svg style="position:absolute;left:565px;top:447.30px" width="24" height="21" viewBox="0 0 24 21"><ellipse cx="10" cy="18" rx="5.5" ry="0.9" fill="#000" opacity="0.10"/><g transform="translate(5.2,17.6) rotate(-45)"><line x1="0.3" y1="0" x2="8" y2="0" stroke="#8c8c8c" stroke-width="1.3"/><line x1="1.5" y1="-0.3" x2="7" y2="-0.3" stroke="#f0f0f0" stroke-width="0.6"/><path d="M7 -4.4 L8.2 -4.4 L10.8 -1.2 L10.8 1.2 L8.2 4.4 L7 4.4 Z" fill="#e03a42"/><path d="M10.8 -1.2 L12.6 -3.2 L15.9 -3.2 Q16.6 0 15.9 3.2 L12.6 3.2 L10.8 1.2 Z" fill="#e64c54"/><path d="M7.5 -3.6 L10.5 -0.6 L12.8 -2.5 L15.5 -2.5" fill="none" stroke="#f8a4a8" stroke-width="1"/><path d="M8 4 L10.8 1 L12.8 2.8 L15.6 2.8" fill="none" stroke="#b8202a" stroke-width="0.8"/></g></svg>
<div class="t" id="t262" style="transform:scaleX(0.8735);right:1272px;top:451.99px;font-size:11.5px;color:#222;font-weight:normal;transform-origin:right center;">PC</div>
<div class="t" id="t263" style="transform:scaleX(1.1320);left:631.5px;top:451.99px;font-size:11.5px;color:#222;font-weight:normal;">30/06/20</div>
<svg style="position:absolute;left:683px;top:447.30px" width="24" height="21" viewBox="0 0 24 21"><ellipse cx="10" cy="18" rx="5.5" ry="0.9" fill="#000" opacity="0.10"/><g transform="translate(5.2,17.6) rotate(-45)"><line x1="0.3" y1="0" x2="8" y2="0" stroke="#8c8c8c" stroke-width="1.3"/><line x1="1.5" y1="-0.3" x2="7" y2="-0.3" stroke="#f0f0f0" stroke-width="0.6"/><path d="M7 -4.4 L8.2 -4.4 L10.8 -1.2 L10.8 1.2 L8.2 4.4 L7 4.4 Z" fill="#e03a42"/><path d="M10.8 -1.2 L12.6 -3.2 L15.9 -3.2 Q16.6 0 15.9 3.2 L12.6 3.2 L10.8 1.2 Z" fill="#e64c54"/><path d="M7.5 -3.6 L10.5 -0.6 L12.8 -2.5 L15.5 -2.5" fill="none" stroke="#f8a4a8" stroke-width="1"/><path d="M8 4 L10.8 1 L12.8 2.8 L15.6 2.8" fill="none" stroke="#b8202a" stroke-width="0.8"/></g></svg>
<div class="t" id="t264" style="transform:scaleX(1.0712);left:721.5px;top:451.99px;font-size:11.5px;color:#222;font-weight:normal;">A produzir</div>
<div class="t" id="t265" style="transform:scaleX(1.0883);right:1037px;top:451.99px;font-size:11.5px;color:#222;font-weight:normal;transform-origin:right center;">0,00</div>
<div class="t" id="t266" style="transform:scaleX(1.0883);right:967px;top:451.99px;font-size:11.5px;color:#222;font-weight:normal;transform-origin:right center;">3,00</div>
<div class="t" id="t267" style="transform:scaleX(1.1037);left:936.5px;top:451.99px;font-size:11.5px;color:#1f6e1f;font-weight:normal;">25 #1 (1) Cliente 123</div>
<div style="position:absolute;left:0;top:468.600px;width:1369px;height:21.3px;background:#fff"></div>
<div style="position:absolute;left:38.0px;top:468.600px;width:1px;height:21.3px;background:#d3d7dc"></div>
<div style="position:absolute;left:76.0px;top:468.600px;width:1px;height:21.3px;background:#d3d7dc"></div>
<div style="position:absolute;left:104.0px;top:468.600px;width:1px;height:21.3px;background:#d3d7dc"></div>
<div style="position:absolute;left:164.0px;top:468.600px;width:1px;height:21.3px;background:#d3d7dc"></div>
<div style="position:absolute;left:274.0px;top:468.600px;width:1px;height:21.3px;background:#d3d7dc"></div>
<div style="position:absolute;left:494.0px;top:468.600px;width:1px;height:21.3px;background:#d3d7dc"></div>
<div style="position:absolute;left:594.0px;top:468.600px;width:1px;height:21.3px;background:#d3d7dc"></div>
<div style="position:absolute;left:624.0px;top:468.600px;width:1px;height:21.3px;background:#d3d7dc"></div>
<div style="position:absolute;left:714.0px;top:468.600px;width:1px;height:21.3px;background:#d3d7dc"></div>
<div style="position:absolute;left:789.0px;top:468.600px;width:1px;height:21.3px;background:#d3d7dc"></div>
<div style="position:absolute;left:859.0px;top:468.600px;width:1px;height:21.3px;background:#d3d7dc"></div>
<div style="position:absolute;left:929.0px;top:468.600px;width:1px;height:21.3px;background:#d3d7dc"></div>
<div style="position:absolute;left:12px;top:472.10px;width:13px;height:13px;background:#fff;box-sizing:border-box;border:1px solid #767676;border-radius:2px"></div>
<svg style="position:absolute;left:42px;top:476.60px" width="8" height="8" viewBox="0 0 8 8"><path d="M1.2 1.2 L6.8 6.8 M6.8 1.2 L1.2 6.8" stroke="#b82428" stroke-width="1.9"/></svg>
<svg style="position:absolute;left:55px;top:472.10px" width="15" height="15" viewBox="0 0 14 14"><path d="M2.5 9.5 L10.5 1.5 L12.5 3.5 L4.5 11.5 Z" fill="#f0a040"/><path d="M10.5 1.5 L12.5 3.5 L11.5 4.5 L9.5 2.5 Z" fill="#e88a30"/><path d="M2.5 9.5 L4.5 11.5 L1 13 Z" fill="#f6e0b0"/><path d="M1 13 L1.8 11.3 L2.7 12.2 Z" fill="#333"/></svg>
<svg style="position:absolute;left:83.5px;top:470.60px" width="15" height="15" viewBox="0 0 15 15"><defs><linearGradient id="pg22" x1="0" y1="0" x2="0" y2="1"><stop offset="0" stop-color="#f0f0f0"/><stop offset="0.6" stop-color="#c8c8c8"/><stop offset="1" stop-color="#6a6a6a"/></linearGradient></defs><rect x="3" y="0.5" width="9" height="4" fill="#eee" stroke="#b8b8b8" stroke-width="0.8"/><rect x="0.5" y="4" width="14" height="7" rx="1.5" fill="url(#pg22)" stroke="#999" stroke-width="0.8"/><rect x="3" y="10" width="9" height="4.5" fill="#e8e8e8" stroke="#aaa" stroke-width="0.8"/><circle cx="12.2" cy="6.5" r="0.9" fill="#5c5"/><circle cx="12.2" cy="8.8" r="0.9" fill="#ea3"/></svg>
<div class="t" id="t268" style="transform:scaleX(1.0661);right:1732px;top:473.29px;font-size:11.5px;color:#222;font-weight:normal;transform-origin:right center;">88</div>
<div class="t" id="t269" style="transform:scaleX(1.0953);left:171.5px;top:473.29px;font-size:11.5px;color:#222;font-weight:normal;">00011</div>
<div class="t" id="t270" style="transform:scaleX(1.0270);left:281.5px;top:473.29px;font-size:11.5px;color:#222;font-weight:normal;">Parafusos para Bicicleta Candemil Lt...</div>
<div class="t" id="t271" style="transform:scaleX(1.0837);right:1327.5px;top:473.29px;font-size:11.5px;color:#222;font-weight:normal;transform-origin:right center;">30,00</div>
<svg style="position:absolute;left:565px;top:468.60px" width="24" height="21" viewBox="0 0 24 21"><ellipse cx="10" cy="18" rx="5.5" ry="0.9" fill="#000" opacity="0.10"/><g transform="translate(5.2,17.6) rotate(-45)"><line x1="0.3" y1="0" x2="8" y2="0" stroke="#8c8c8c" stroke-width="1.3"/><line x1="1.5" y1="-0.3" x2="7" y2="-0.3" stroke="#f0f0f0" stroke-width="0.6"/><path d="M7 -4.4 L8.2 -4.4 L10.8 -1.2 L10.8 1.2 L8.2 4.4 L7 4.4 Z" fill="#e03a42"/><path d="M10.8 -1.2 L12.6 -3.2 L15.9 -3.2 Q16.6 0 15.9 3.2 L12.6 3.2 L10.8 1.2 Z" fill="#e64c54"/><path d="M7.5 -3.6 L10.5 -0.6 L12.8 -2.5 L15.5 -2.5" fill="none" stroke="#f8a4a8" stroke-width="1"/><path d="M8 4 L10.8 1 L12.8 2.8 L15.6 2.8" fill="none" stroke="#b8202a" stroke-width="0.8"/></g></svg>
<div class="t" id="t272" style="transform:scaleX(0.8735);right:1272px;top:473.29px;font-size:11.5px;color:#222;font-weight:normal;transform-origin:right center;">PC</div>
<div class="t" id="t273" style="transform:scaleX(1.1320);left:631.5px;top:473.29px;font-size:11.5px;color:#222;font-weight:normal;">30/06/20</div>
<svg style="position:absolute;left:683px;top:468.60px" width="24" height="21" viewBox="0 0 24 21"><ellipse cx="10" cy="18" rx="5.5" ry="0.9" fill="#000" opacity="0.10"/><g transform="translate(5.2,17.6) rotate(-45)"><line x1="0.3" y1="0" x2="8" y2="0" stroke="#8c8c8c" stroke-width="1.3"/><line x1="1.5" y1="-0.3" x2="7" y2="-0.3" stroke="#f0f0f0" stroke-width="0.6"/><path d="M7 -4.4 L8.2 -4.4 L10.8 -1.2 L10.8 1.2 L8.2 4.4 L7 4.4 Z" fill="#e03a42"/><path d="M10.8 -1.2 L12.6 -3.2 L15.9 -3.2 Q16.6 0 15.9 3.2 L12.6 3.2 L10.8 1.2 Z" fill="#e64c54"/><path d="M7.5 -3.6 L10.5 -0.6 L12.8 -2.5 L15.5 -2.5" fill="none" stroke="#f8a4a8" stroke-width="1"/><path d="M8 4 L10.8 1 L12.8 2.8 L15.6 2.8" fill="none" stroke="#b8202a" stroke-width="0.8"/></g></svg>
<div class="t" id="t274" style="transform:scaleX(1.0712);left:721.5px;top:473.29px;font-size:11.5px;color:#222;font-weight:normal;">A produzir</div>
<div class="t" id="t275" style="transform:scaleX(1.0883);right:1037px;top:473.29px;font-size:11.5px;color:#222;font-weight:normal;transform-origin:right center;">0,00</div>
<div class="t" id="t276" style="transform:scaleX(1.0837);right:967px;top:473.29px;font-size:11.5px;color:#222;font-weight:normal;transform-origin:right center;">30,00</div>
<div class="t" id="t277" style="transform:scaleX(1.1016);left:936.5px;top:473.29px;font-size:11.5px;color:#1f6e1f;font-weight:normal;">25 #1 (30) Cliente 123</div>
<div style="position:absolute;left:0;top:489.900px;width:1369px;height:21.3px;background:#eff0f3"></div>
<div style="position:absolute;left:38.0px;top:489.900px;width:1px;height:21.3px;background:#d3d7dc"></div>
<div style="position:absolute;left:76.0px;top:489.900px;width:1px;height:21.3px;background:#d3d7dc"></div>
<div style="position:absolute;left:104.0px;top:489.900px;width:1px;height:21.3px;background:#d3d7dc"></div>
<div style="position:absolute;left:164.0px;top:489.900px;width:1px;height:21.3px;background:#d3d7dc"></div>
<div style="position:absolute;left:274.0px;top:489.900px;width:1px;height:21.3px;background:#d3d7dc"></div>
<div style="position:absolute;left:494.0px;top:489.900px;width:1px;height:21.3px;background:#d3d7dc"></div>
<div style="position:absolute;left:594.0px;top:489.900px;width:1px;height:21.3px;background:#d3d7dc"></div>
<div style="position:absolute;left:624.0px;top:489.900px;width:1px;height:21.3px;background:#d3d7dc"></div>
<div style="position:absolute;left:714.0px;top:489.900px;width:1px;height:21.3px;background:#d3d7dc"></div>
<div style="position:absolute;left:789.0px;top:489.900px;width:1px;height:21.3px;background:#d3d7dc"></div>
<div style="position:absolute;left:859.0px;top:489.900px;width:1px;height:21.3px;background:#d3d7dc"></div>
<div style="position:absolute;left:929.0px;top:489.900px;width:1px;height:21.3px;background:#d3d7dc"></div>
<div style="position:absolute;left:12px;top:493.40px;width:13px;height:13px;background:#fff;box-sizing:border-box;border:1px solid #767676;border-radius:2px"></div>
<svg style="position:absolute;left:42px;top:497.90px" width="8" height="8" viewBox="0 0 8 8"><path d="M1.2 1.2 L6.8 6.8 M6.8 1.2 L1.2 6.8" stroke="#b82428" stroke-width="1.9"/></svg>
<svg style="position:absolute;left:55px;top:493.40px" width="15" height="15" viewBox="0 0 14 14"><path d="M2.5 9.5 L10.5 1.5 L12.5 3.5 L4.5 11.5 Z" fill="#f0a040"/><path d="M10.5 1.5 L12.5 3.5 L11.5 4.5 L9.5 2.5 Z" fill="#e88a30"/><path d="M2.5 9.5 L4.5 11.5 L1 13 Z" fill="#f6e0b0"/><path d="M1 13 L1.8 11.3 L2.7 12.2 Z" fill="#333"/></svg>
<svg style="position:absolute;left:83.5px;top:491.90px" width="15" height="15" viewBox="0 0 15 15"><defs><linearGradient id="pg23" x1="0" y1="0" x2="0" y2="1"><stop offset="0" stop-color="#f0f0f0"/><stop offset="0.6" stop-color="#c8c8c8"/><stop offset="1" stop-color="#6a6a6a"/></linearGradient></defs><rect x="3" y="0.5" width="9" height="4" fill="#eee" stroke="#b8b8b8" stroke-width="0.8"/><rect x="0.5" y="4" width="14" height="7" rx="1.5" fill="url(#pg23)" stroke="#999" stroke-width="0.8"/><rect x="3" y="10" width="9" height="4.5" fill="#e8e8e8" stroke="#aaa" stroke-width="0.8"/><circle cx="12.2" cy="6.5" r="0.9" fill="#5c5"/><circle cx="12.2" cy="8.8" r="0.9" fill="#ea3"/></svg>
<div class="t" id="t278" style="transform:scaleX(1.0661);right:1732px;top:494.59px;font-size:11.5px;color:#222;font-weight:normal;transform-origin:right center;">87</div>
<div class="t" id="t279" style="transform:scaleX(1.0664);left:171.5px;top:494.59px;font-size:11.5px;color:#222;font-weight:normal;">00030</div>
<div class="t" id="t280" style="transform:scaleX(1.0527);left:281.5px;top:494.59px;font-size:11.5px;color:#222;font-weight:normal;">Frete 2</div>
<div class="t" id="t281" style="transform:scaleX(1.0883);right:1327.5px;top:494.59px;font-size:11.5px;color:#222;font-weight:normal;transform-origin:right center;">1,00</div>
<svg style="position:absolute;left:565px;top:489.90px" width="24" height="21" viewBox="0 0 24 21"><ellipse cx="10" cy="18" rx="5.5" ry="0.9" fill="#000" opacity="0.10"/><g transform="translate(5.2,17.6) rotate(-45)"><line x1="0.3" y1="0" x2="8" y2="0" stroke="#8c8c8c" stroke-width="1.3"/><line x1="1.5" y1="-0.3" x2="7" y2="-0.3" stroke="#f0f0f0" stroke-width="0.6"/><path d="M7 -4.4 L8.2 -4.4 L10.8 -1.2 L10.8 1.2 L8.2 4.4 L7 4.4 Z" fill="#e03a42"/><path d="M10.8 -1.2 L12.6 -3.2 L15.9 -3.2 Q16.6 0 15.9 3.2 L12.6 3.2 L10.8 1.2 Z" fill="#e64c54"/><path d="M7.5 -3.6 L10.5 -0.6 L12.8 -2.5 L15.5 -2.5" fill="none" stroke="#f8a4a8" stroke-width="1"/><path d="M8 4 L10.8 1 L12.8 2.8 L15.6 2.8" fill="none" stroke="#b8202a" stroke-width="0.8"/></g></svg>
<div class="t" id="t282" style="transform:scaleX(1.0612);right:1272px;top:494.59px;font-size:11.5px;color:#222;font-weight:normal;transform-origin:right center;">un</div>
<div class="t" id="t283" style="transform:scaleX(1.1320);left:631.5px;top:494.59px;font-size:11.5px;color:#222;font-weight:normal;">08/06/20</div>
<svg style="position:absolute;left:683px;top:489.90px" width="24" height="21" viewBox="0 0 24 21"><ellipse cx="10" cy="18" rx="5.5" ry="0.9" fill="#000" opacity="0.10"/><g transform="translate(5.2,17.6) rotate(-45)"><line x1="0.3" y1="0" x2="8" y2="0" stroke="#8c8c8c" stroke-width="1.3"/><line x1="1.5" y1="-0.3" x2="7" y2="-0.3" stroke="#f0f0f0" stroke-width="0.6"/><path d="M7 -4.4 L8.2 -4.4 L10.8 -1.2 L10.8 1.2 L8.2 4.4 L7 4.4 Z" fill="#e03a42"/><path d="M10.8 -1.2 L12.6 -3.2 L15.9 -3.2 Q16.6 0 15.9 3.2 L12.6 3.2 L10.8 1.2 Z" fill="#e64c54"/><path d="M7.5 -3.6 L10.5 -0.6 L12.8 -2.5 L15.5 -2.5" fill="none" stroke="#f8a4a8" stroke-width="1"/><path d="M8 4 L10.8 1 L12.8 2.8 L15.6 2.8" fill="none" stroke="#b8202a" stroke-width="0.8"/></g></svg>
<div class="t" id="t284" style="transform:scaleX(1.0712);left:721.5px;top:494.59px;font-size:11.5px;color:#222;font-weight:normal;">A produzir</div>
<div class="t" id="t285" style="transform:scaleX(1.0883);right:1037px;top:494.59px;font-size:11.5px;color:#222;font-weight:normal;transform-origin:right center;">0,00</div>
<div class="t" id="t286" style="transform:scaleX(1.0883);right:967px;top:494.59px;font-size:11.5px;color:#222;font-weight:normal;transform-origin:right center;">1,00</div>
<div style="position:absolute;left:0;top:511.200px;width:1369px;height:21.3px;background:#fff"></div>
<div style="position:absolute;left:38.0px;top:511.200px;width:1px;height:21.3px;background:#d3d7dc"></div>
<div style="position:absolute;left:76.0px;top:511.200px;width:1px;height:21.3px;background:#d3d7dc"></div>
<div style="position:absolute;left:104.0px;top:511.200px;width:1px;height:21.3px;background:#d3d7dc"></div>
<div style="position:absolute;left:164.0px;top:511.200px;width:1px;height:21.3px;background:#d3d7dc"></div>
<div style="position:absolute;left:274.0px;top:511.200px;width:1px;height:21.3px;background:#d3d7dc"></div>
<div style="position:absolute;left:494.0px;top:511.200px;width:1px;height:21.3px;background:#d3d7dc"></div>
<div style="position:absolute;left:594.0px;top:511.200px;width:1px;height:21.3px;background:#d3d7dc"></div>
<div style="position:absolute;left:624.0px;top:511.200px;width:1px;height:21.3px;background:#d3d7dc"></div>
<div style="position:absolute;left:714.0px;top:511.200px;width:1px;height:21.3px;background:#d3d7dc"></div>
<div style="position:absolute;left:789.0px;top:511.200px;width:1px;height:21.3px;background:#d3d7dc"></div>
<div style="position:absolute;left:859.0px;top:511.200px;width:1px;height:21.3px;background:#d3d7dc"></div>
<div style="position:absolute;left:929.0px;top:511.200px;width:1px;height:21.3px;background:#d3d7dc"></div>
<div style="position:absolute;left:12px;top:514.70px;width:13px;height:13px;background:#fff;box-sizing:border-box;border:1px solid #767676;border-radius:2px"></div>
<svg style="position:absolute;left:42px;top:519.20px" width="8" height="8" viewBox="0 0 8 8"><path d="M1.2 1.2 L6.8 6.8 M6.8 1.2 L1.2 6.8" stroke="#b82428" stroke-width="1.9"/></svg>
<svg style="position:absolute;left:55px;top:514.70px" width="15" height="15" viewBox="0 0 14 14"><path d="M2.5 9.5 L10.5 1.5 L12.5 3.5 L4.5 11.5 Z" fill="#f0a040"/><path d="M10.5 1.5 L12.5 3.5 L11.5 4.5 L9.5 2.5 Z" fill="#e88a30"/><path d="M2.5 9.5 L4.5 11.5 L1 13 Z" fill="#f6e0b0"/><path d="M1 13 L1.8 11.3 L2.7 12.2 Z" fill="#333"/></svg>
<svg style="position:absolute;left:83.5px;top:513.20px" width="15" height="15" viewBox="0 0 15 15"><defs><linearGradient id="pg24" x1="0" y1="0" x2="0" y2="1"><stop offset="0" stop-color="#f0f0f0"/><stop offset="0.6" stop-color="#c8c8c8"/><stop offset="1" stop-color="#6a6a6a"/></linearGradient></defs><rect x="3" y="0.5" width="9" height="4" fill="#eee" stroke="#b8b8b8" stroke-width="0.8"/><rect x="0.5" y="4" width="14" height="7" rx="1.5" fill="url(#pg24)" stroke="#999" stroke-width="0.8"/><rect x="3" y="10" width="9" height="4.5" fill="#e8e8e8" stroke="#aaa" stroke-width="0.8"/><circle cx="12.2" cy="6.5" r="0.9" fill="#5c5"/><circle cx="12.2" cy="8.8" r="0.9" fill="#ea3"/></svg>
<div class="t" id="t287" style="transform:scaleX(1.0661);right:1732px;top:515.89px;font-size:11.5px;color:#222;font-weight:normal;transform-origin:right center;">86</div>
<div class="t" id="t288" style="transform:scaleX(1.0664);left:171.5px;top:515.89px;font-size:11.5px;color:#222;font-weight:normal;">00022</div>
<div class="t" id="t289" style="transform:scaleX(1.0812);left:281.5px;top:515.89px;font-size:11.5px;color:#222;font-weight:normal;">Item-Pai</div>
<div class="t" id="t290" style="transform:scaleX(1.0883);right:1327.5px;top:515.89px;font-size:11.5px;color:#222;font-weight:normal;transform-origin:right center;">3,00</div>
<svg style="position:absolute;left:565px;top:511.20px" width="24" height="21" viewBox="0 0 24 21"><ellipse cx="10" cy="18" rx="5.5" ry="0.9" fill="#000" opacity="0.10"/><g transform="translate(5.2,17.6) rotate(-45)"><line x1="0.3" y1="0" x2="8" y2="0" stroke="#8c8c8c" stroke-width="1.3"/><line x1="1.5" y1="-0.3" x2="7" y2="-0.3" stroke="#f0f0f0" stroke-width="0.6"/><path d="M7 -4.4 L8.2 -4.4 L10.8 -1.2 L10.8 1.2 L8.2 4.4 L7 4.4 Z" fill="#e03a42"/><path d="M10.8 -1.2 L12.6 -3.2 L15.9 -3.2 Q16.6 0 15.9 3.2 L12.6 3.2 L10.8 1.2 Z" fill="#e64c54"/><path d="M7.5 -3.6 L10.5 -0.6 L12.8 -2.5 L15.5 -2.5" fill="none" stroke="#f8a4a8" stroke-width="1"/><path d="M8 4 L10.8 1 L12.8 2.8 L15.6 2.8" fill="none" stroke="#b8202a" stroke-width="0.8"/></g></svg>
<div class="t" id="t291" style="transform:scaleX(1.0612);right:1272px;top:515.89px;font-size:11.5px;color:#222;font-weight:normal;transform-origin:right center;">un</div>
<div class="t" id="t292" style="transform:scaleX(1.1320);left:631.5px;top:515.89px;font-size:11.5px;color:#222;font-weight:normal;">10/06/20</div>
<svg style="position:absolute;left:683px;top:511.20px" width="24" height="21" viewBox="0 0 24 21"><ellipse cx="10" cy="18" rx="5.5" ry="0.9" fill="#000" opacity="0.10"/><g transform="translate(5.2,17.6) rotate(-45)"><line x1="0.3" y1="0" x2="8" y2="0" stroke="#8c8c8c" stroke-width="1.3"/><line x1="1.5" y1="-0.3" x2="7" y2="-0.3" stroke="#f0f0f0" stroke-width="0.6"/><path d="M7 -4.4 L8.2 -4.4 L10.8 -1.2 L10.8 1.2 L8.2 4.4 L7 4.4 Z" fill="#e03a42"/><path d="M10.8 -1.2 L12.6 -3.2 L15.9 -3.2 Q16.6 0 15.9 3.2 L12.6 3.2 L10.8 1.2 Z" fill="#e64c54"/><path d="M7.5 -3.6 L10.5 -0.6 L12.8 -2.5 L15.5 -2.5" fill="none" stroke="#f8a4a8" stroke-width="1"/><path d="M8 4 L10.8 1 L12.8 2.8 L15.6 2.8" fill="none" stroke="#b8202a" stroke-width="0.8"/></g></svg>
<div class="t" id="t293" style="transform:scaleX(1.0712);left:721.5px;top:515.89px;font-size:11.5px;color:#222;font-weight:normal;">A produzir</div>
<div class="t" id="t294" style="transform:scaleX(1.0883);right:1037px;top:515.89px;font-size:11.5px;color:#222;font-weight:normal;transform-origin:right center;">0,00</div>
<div class="t" id="t295" style="transform:scaleX(1.0883);right:967px;top:515.89px;font-size:11.5px;color:#222;font-weight:normal;transform-origin:right center;">3,00</div>
<div class="t" id="t296" style="transform:scaleX(1.1037);left:936.5px;top:515.89px;font-size:11.5px;color:#1f6e1f;font-weight:normal;">21 #1 (3) Cliente 123</div>
<div style="position:absolute;left:0;top:532.500px;width:1369px;height:21.3px;background:#eff0f3"></div>
<div style="position:absolute;left:38.0px;top:532.500px;width:1px;height:21.3px;background:#d3d7dc"></div>
<div style="position:absolute;left:76.0px;top:532.500px;width:1px;height:21.3px;background:#d3d7dc"></div>
<div style="position:absolute;left:104.0px;top:532.500px;width:1px;height:21.3px;background:#d3d7dc"></div>
<div style="position:absolute;left:164.0px;top:532.500px;width:1px;height:21.3px;background:#d3d7dc"></div>
<div style="position:absolute;left:274.0px;top:532.500px;width:1px;height:21.3px;background:#d3d7dc"></div>
<div style="position:absolute;left:494.0px;top:532.500px;width:1px;height:21.3px;background:#d3d7dc"></div>
<div style="position:absolute;left:594.0px;top:532.500px;width:1px;height:21.3px;background:#d3d7dc"></div>
<div style="position:absolute;left:624.0px;top:532.500px;width:1px;height:21.3px;background:#d3d7dc"></div>
<div style="position:absolute;left:714.0px;top:532.500px;width:1px;height:21.3px;background:#d3d7dc"></div>
<div style="position:absolute;left:789.0px;top:532.500px;width:1px;height:21.3px;background:#d3d7dc"></div>
<div style="position:absolute;left:859.0px;top:532.500px;width:1px;height:21.3px;background:#d3d7dc"></div>
<div style="position:absolute;left:929.0px;top:532.500px;width:1px;height:21.3px;background:#d3d7dc"></div>
<div style="position:absolute;left:12px;top:536.00px;width:13px;height:13px;background:#fff;box-sizing:border-box;border:1px solid #767676;border-radius:2px"></div>
<svg style="position:absolute;left:42px;top:540.50px" width="8" height="8" viewBox="0 0 8 8"><path d="M1.2 1.2 L6.8 6.8 M6.8 1.2 L1.2 6.8" stroke="#b82428" stroke-width="1.9"/></svg>
<svg style="position:absolute;left:55px;top:536.00px" width="15" height="15" viewBox="0 0 14 14"><path d="M2.5 9.5 L10.5 1.5 L12.5 3.5 L4.5 11.5 Z" fill="#f0a040"/><path d="M10.5 1.5 L12.5 3.5 L11.5 4.5 L9.5 2.5 Z" fill="#e88a30"/><path d="M2.5 9.5 L4.5 11.5 L1 13 Z" fill="#f6e0b0"/><path d="M1 13 L1.8 11.3 L2.7 12.2 Z" fill="#333"/></svg>
<svg style="position:absolute;left:83.5px;top:534.50px" width="15" height="15" viewBox="0 0 15 15"><defs><linearGradient id="pg25" x1="0" y1="0" x2="0" y2="1"><stop offset="0" stop-color="#f0f0f0"/><stop offset="0.6" stop-color="#c8c8c8"/><stop offset="1" stop-color="#6a6a6a"/></linearGradient></defs><rect x="3" y="0.5" width="9" height="4" fill="#eee" stroke="#b8b8b8" stroke-width="0.8"/><rect x="0.5" y="4" width="14" height="7" rx="1.5" fill="url(#pg25)" stroke="#999" stroke-width="0.8"/><rect x="3" y="10" width="9" height="4.5" fill="#e8e8e8" stroke="#aaa" stroke-width="0.8"/><circle cx="12.2" cy="6.5" r="0.9" fill="#5c5"/><circle cx="12.2" cy="8.8" r="0.9" fill="#ea3"/></svg>
<div class="t" id="t297" style="transform:scaleX(1.0661);right:1732px;top:537.19px;font-size:11.5px;color:#222;font-weight:normal;transform-origin:right center;">85</div>
<div class="t" id="t298" style="transform:scaleX(1.0664);left:171.5px;top:537.19px;font-size:11.5px;color:#222;font-weight:normal;">00030</div>
<div class="t" id="t299" style="transform:scaleX(1.0527);left:281.5px;top:537.19px;font-size:11.5px;color:#222;font-weight:normal;">Frete 2</div>
<div class="t" id="t300" style="transform:scaleX(1.0883);right:1327.5px;top:537.19px;font-size:11.5px;color:#222;font-weight:normal;transform-origin:right center;">5,00</div>
<svg style="position:absolute;left:565px;top:532.50px" width="24" height="21" viewBox="0 0 24 21"><ellipse cx="10" cy="18" rx="5.5" ry="0.9" fill="#000" opacity="0.10"/><g transform="translate(5.2,17.6) rotate(-45)"><line x1="0.3" y1="0" x2="8" y2="0" stroke="#8c8c8c" stroke-width="1.3"/><line x1="1.5" y1="-0.3" x2="7" y2="-0.3" stroke="#f0f0f0" stroke-width="0.6"/><path d="M7 -4.4 L8.2 -4.4 L10.8 -1.2 L10.8 1.2 L8.2 4.4 L7 4.4 Z" fill="#e03a42"/><path d="M10.8 -1.2 L12.6 -3.2 L15.9 -3.2 Q16.6 0 15.9 3.2 L12.6 3.2 L10.8 1.2 Z" fill="#e64c54"/><path d="M7.5 -3.6 L10.5 -0.6 L12.8 -2.5 L15.5 -2.5" fill="none" stroke="#f8a4a8" stroke-width="1"/><path d="M8 4 L10.8 1 L12.8 2.8 L15.6 2.8" fill="none" stroke="#b8202a" stroke-width="0.8"/></g></svg>
<div class="t" id="t301" style="transform:scaleX(1.0612);right:1272px;top:537.19px;font-size:11.5px;color:#222;font-weight:normal;transform-origin:right center;">un</div>
<div class="t" id="t302" style="transform:scaleX(1.1320);left:631.5px;top:537.19px;font-size:11.5px;color:#222;font-weight:normal;">28/05/20</div>
<svg style="position:absolute;left:683px;top:532.50px" width="24" height="21" viewBox="0 0 24 21"><ellipse cx="10" cy="18" rx="5.5" ry="0.9" fill="#000" opacity="0.10"/><g transform="translate(5.2,17.6) rotate(-45)"><line x1="0.3" y1="0" x2="8" y2="0" stroke="#8c8c8c" stroke-width="1.3"/><line x1="1.5" y1="-0.3" x2="7" y2="-0.3" stroke="#f0f0f0" stroke-width="0.6"/><path d="M7 -4.4 L8.2 -4.4 L10.8 -1.2 L10.8 1.2 L8.2 4.4 L7 4.4 Z" fill="#e03a42"/><path d="M10.8 -1.2 L12.6 -3.2 L15.9 -3.2 Q16.6 0 15.9 3.2 L12.6 3.2 L10.8 1.2 Z" fill="#e64c54"/><path d="M7.5 -3.6 L10.5 -0.6 L12.8 -2.5 L15.5 -2.5" fill="none" stroke="#f8a4a8" stroke-width="1"/><path d="M8 4 L10.8 1 L12.8 2.8 L15.6 2.8" fill="none" stroke="#b8202a" stroke-width="0.8"/></g></svg>
<div class="t" id="t303" style="transform:scaleX(1.0712);left:721.5px;top:537.19px;font-size:11.5px;color:#222;font-weight:normal;">A produzir</div>
<div class="t" id="t304" style="transform:scaleX(1.0883);right:1037px;top:537.19px;font-size:11.5px;color:#222;font-weight:normal;transform-origin:right center;">0,00</div>
<div class="t" id="t305" style="transform:scaleX(1.0883);right:967px;top:537.19px;font-size:11.5px;color:#222;font-weight:normal;transform-origin:right center;">5,00</div>
<div style="position:absolute;left:0;top:553.800px;width:1369px;height:21.3px;background:#fff"></div>
<div style="position:absolute;left:38.0px;top:553.800px;width:1px;height:21.3px;background:#d3d7dc"></div>
<div style="position:absolute;left:76.0px;top:553.800px;width:1px;height:21.3px;background:#d3d7dc"></div>
<div style="position:absolute;left:104.0px;top:553.800px;width:1px;height:21.3px;background:#d3d7dc"></div>
<div style="position:absolute;left:164.0px;top:553.800px;width:1px;height:21.3px;background:#d3d7dc"></div>
<div style="position:absolute;left:274.0px;top:553.800px;width:1px;height:21.3px;background:#d3d7dc"></div>
<div style="position:absolute;left:494.0px;top:553.800px;width:1px;height:21.3px;background:#d3d7dc"></div>
<div style="position:absolute;left:594.0px;top:553.800px;width:1px;height:21.3px;background:#d3d7dc"></div>
<div style="position:absolute;left:624.0px;top:553.800px;width:1px;height:21.3px;background:#d3d7dc"></div>
<div style="position:absolute;left:714.0px;top:553.800px;width:1px;height:21.3px;background:#d3d7dc"></div>
<div style="position:absolute;left:789.0px;top:553.800px;width:1px;height:21.3px;background:#d3d7dc"></div>
<div style="position:absolute;left:859.0px;top:553.800px;width:1px;height:21.3px;background:#d3d7dc"></div>
<div style="position:absolute;left:929.0px;top:553.800px;width:1px;height:21.3px;background:#d3d7dc"></div>
<div style="position:absolute;left:12px;top:557.30px;width:13px;height:13px;background:#fff;box-sizing:border-box;border:1px solid #767676;border-radius:2px"></div>
<svg style="position:absolute;left:42px;top:561.80px" width="8" height="8" viewBox="0 0 8 8"><path d="M1.2 1.2 L6.8 6.8 M6.8 1.2 L1.2 6.8" stroke="#b82428" stroke-width="1.9"/></svg>
<svg style="position:absolute;left:55px;top:557.30px" width="15" height="15" viewBox="0 0 14 14"><path d="M2.5 9.5 L10.5 1.5 L12.5 3.5 L4.5 11.5 Z" fill="#f0a040"/><path d="M10.5 1.5 L12.5 3.5 L11.5 4.5 L9.5 2.5 Z" fill="#e88a30"/><path d="M2.5 9.5 L4.5 11.5 L1 13 Z" fill="#f6e0b0"/><path d="M1 13 L1.8 11.3 L2.7 12.2 Z" fill="#333"/></svg>
<svg style="position:absolute;left:83.5px;top:555.80px" width="15" height="15" viewBox="0 0 15 15"><defs><linearGradient id="pg26" x1="0" y1="0" x2="0" y2="1"><stop offset="0" stop-color="#f0f0f0"/><stop offset="0.6" stop-color="#c8c8c8"/><stop offset="1" stop-color="#6a6a6a"/></linearGradient></defs><rect x="3" y="0.5" width="9" height="4" fill="#eee" stroke="#b8b8b8" stroke-width="0.8"/><rect x="0.5" y="4" width="14" height="7" rx="1.5" fill="url(#pg26)" stroke="#999" stroke-width="0.8"/><rect x="3" y="10" width="9" height="4.5" fill="#e8e8e8" stroke="#aaa" stroke-width="0.8"/><circle cx="12.2" cy="6.5" r="0.9" fill="#5c5"/><circle cx="12.2" cy="8.8" r="0.9" fill="#ea3"/></svg>
<div class="t" id="t306" style="transform:scaleX(1.0661);right:1732px;top:558.49px;font-size:11.5px;color:#222;font-weight:normal;transform-origin:right center;">84</div>
<div class="t" id="t307" style="transform:scaleX(1.0664);left:171.5px;top:558.49px;font-size:11.5px;color:#222;font-weight:normal;">00030</div>
<div class="t" id="t308" style="transform:scaleX(1.0527);left:281.5px;top:558.49px;font-size:11.5px;color:#222;font-weight:normal;">Frete 2</div>
<div class="t" id="t309" style="transform:scaleX(1.0883);right:1327.5px;top:558.49px;font-size:11.5px;color:#222;font-weight:normal;transform-origin:right center;">5,00</div>
<svg style="position:absolute;left:565px;top:553.80px" width="24" height="21" viewBox="0 0 24 21"><ellipse cx="10" cy="18" rx="5.5" ry="0.9" fill="#000" opacity="0.10"/><g transform="translate(5.2,17.6) rotate(-45)"><line x1="0.3" y1="0" x2="8" y2="0" stroke="#8c8c8c" stroke-width="1.3"/><line x1="1.5" y1="-0.3" x2="7" y2="-0.3" stroke="#f0f0f0" stroke-width="0.6"/><path d="M7 -4.4 L8.2 -4.4 L10.8 -1.2 L10.8 1.2 L8.2 4.4 L7 4.4 Z" fill="#e03a42"/><path d="M10.8 -1.2 L12.6 -3.2 L15.9 -3.2 Q16.6 0 15.9 3.2 L12.6 3.2 L10.8 1.2 Z" fill="#e64c54"/><path d="M7.5 -3.6 L10.5 -0.6 L12.8 -2.5 L15.5 -2.5" fill="none" stroke="#f8a4a8" stroke-width="1"/><path d="M8 4 L10.8 1 L12.8 2.8 L15.6 2.8" fill="none" stroke="#b8202a" stroke-width="0.8"/></g></svg>
<div class="t" id="t310" style="transform:scaleX(1.0612);right:1272px;top:558.49px;font-size:11.5px;color:#222;font-weight:normal;transform-origin:right center;">un</div>
<div class="t" id="t311" style="transform:scaleX(1.1320);left:631.5px;top:558.49px;font-size:11.5px;color:#222;font-weight:normal;">28/05/20</div>
<svg style="position:absolute;left:683px;top:553.80px" width="24" height="21" viewBox="0 0 24 21"><ellipse cx="10" cy="18" rx="5.5" ry="0.9" fill="#000" opacity="0.10"/><g transform="translate(5.2,17.6) rotate(-45)"><line x1="0.3" y1="0" x2="8" y2="0" stroke="#8c8c8c" stroke-width="1.3"/><line x1="1.5" y1="-0.3" x2="7" y2="-0.3" stroke="#f0f0f0" stroke-width="0.6"/><path d="M7 -4.4 L8.2 -4.4 L10.8 -1.2 L10.8 1.2 L8.2 4.4 L7 4.4 Z" fill="#e03a42"/><path d="M10.8 -1.2 L12.6 -3.2 L15.9 -3.2 Q16.6 0 15.9 3.2 L12.6 3.2 L10.8 1.2 Z" fill="#e64c54"/><path d="M7.5 -3.6 L10.5 -0.6 L12.8 -2.5 L15.5 -2.5" fill="none" stroke="#f8a4a8" stroke-width="1"/><path d="M8 4 L10.8 1 L12.8 2.8 L15.6 2.8" fill="none" stroke="#b8202a" stroke-width="0.8"/></g></svg>
<div class="t" id="t312" style="transform:scaleX(1.0712);left:721.5px;top:558.49px;font-size:11.5px;color:#222;font-weight:normal;">A produzir</div>
<div class="t" id="t313" style="transform:scaleX(1.0883);right:1037px;top:558.49px;font-size:11.5px;color:#222;font-weight:normal;transform-origin:right center;">0,00</div>
<div class="t" id="t314" style="transform:scaleX(1.0883);right:967px;top:558.49px;font-size:11.5px;color:#222;font-weight:normal;transform-origin:right center;">5,00</div>
<div style="position:absolute;left:0;top:575.100px;width:1369px;height:21.3px;background:#eff0f3"></div>
<div style="position:absolute;left:38.0px;top:575.100px;width:1px;height:21.3px;background:#d3d7dc"></div>
<div style="position:absolute;left:76.0px;top:575.100px;width:1px;height:21.3px;background:#d3d7dc"></div>
<div style="position:absolute;left:104.0px;top:575.100px;width:1px;height:21.3px;background:#d3d7dc"></div>
<div style="position:absolute;left:164.0px;top:575.100px;width:1px;height:21.3px;background:#d3d7dc"></div>
<div style="position:absolute;left:274.0px;top:575.100px;width:1px;height:21.3px;background:#d3d7dc"></div>
<div style="position:absolute;left:494.0px;top:575.100px;width:1px;height:21.3px;background:#d3d7dc"></div>
<div style="position:absolute;left:594.0px;top:575.100px;width:1px;height:21.3px;background:#d3d7dc"></div>
<div style="position:absolute;left:624.0px;top:575.100px;width:1px;height:21.3px;background:#d3d7dc"></div>
<div style="position:absolute;left:714.0px;top:575.100px;width:1px;height:21.3px;background:#d3d7dc"></div>
<div style="position:absolute;left:789.0px;top:575.100px;width:1px;height:21.3px;background:#d3d7dc"></div>
<div style="position:absolute;left:859.0px;top:575.100px;width:1px;height:21.3px;background:#d3d7dc"></div>
<div style="position:absolute;left:929.0px;top:575.100px;width:1px;height:21.3px;background:#d3d7dc"></div>
<div style="position:absolute;left:12px;top:578.60px;width:13px;height:13px;background:#fff;box-sizing:border-box;border:1px solid #767676;border-radius:2px"></div>
<svg style="position:absolute;left:42px;top:583.10px" width="8" height="8" viewBox="0 0 8 8"><path d="M1.2 1.2 L6.8 6.8 M6.8 1.2 L1.2 6.8" stroke="#b82428" stroke-width="1.9"/></svg>
<svg style="position:absolute;left:55px;top:578.60px" width="15" height="15" viewBox="0 0 14 14"><path d="M2.5 9.5 L10.5 1.5 L12.5 3.5 L4.5 11.5 Z" fill="#f0a040"/><path d="M10.5 1.5 L12.5 3.5 L11.5 4.5 L9.5 2.5 Z" fill="#e88a30"/><path d="M2.5 9.5 L4.5 11.5 L1 13 Z" fill="#f6e0b0"/><path d="M1 13 L1.8 11.3 L2.7 12.2 Z" fill="#333"/></svg>
<svg style="position:absolute;left:83.5px;top:577.10px" width="15" height="15" viewBox="0 0 15 15"><defs><linearGradient id="pg27" x1="0" y1="0" x2="0" y2="1"><stop offset="0" stop-color="#f0f0f0"/><stop offset="0.6" stop-color="#c8c8c8"/><stop offset="1" stop-color="#6a6a6a"/></linearGradient></defs><rect x="3" y="0.5" width="9" height="4" fill="#eee" stroke="#b8b8b8" stroke-width="0.8"/><rect x="0.5" y="4" width="14" height="7" rx="1.5" fill="url(#pg27)" stroke="#999" stroke-width="0.8"/><rect x="3" y="10" width="9" height="4.5" fill="#e8e8e8" stroke="#aaa" stroke-width="0.8"/><circle cx="12.2" cy="6.5" r="0.9" fill="#5c5"/><circle cx="12.2" cy="8.8" r="0.9" fill="#ea3"/></svg>
<div class="t" id="t315" style="transform:scaleX(1.0661);right:1732px;top:579.79px;font-size:11.5px;color:#222;font-weight:normal;transform-origin:right center;">83</div>
<div class="t" id="t316" style="transform:scaleX(1.0664);left:171.5px;top:579.79px;font-size:11.5px;color:#222;font-weight:normal;">00108</div>
<div class="t" id="t317" style="transform:scaleX(0.9787);left:281.5px;top:579.79px;font-size:11.5px;color:#222;font-weight:normal;">Mesa</div>
<div class="t" id="t318" style="transform:scaleX(1.0837);right:1327.5px;top:579.79px;font-size:11.5px;color:#222;font-weight:normal;transform-origin:right center;">22,00</div>
<svg style="position:absolute;left:565px;top:575.10px" width="24" height="21" viewBox="0 0 24 21"><ellipse cx="10" cy="18" rx="5.5" ry="0.9" fill="#000" opacity="0.10"/><g transform="translate(5.2,17.6) rotate(-45)"><line x1="0.3" y1="0" x2="8" y2="0" stroke="#8c8c8c" stroke-width="1.3"/><line x1="1.5" y1="-0.3" x2="7" y2="-0.3" stroke="#f0f0f0" stroke-width="0.6"/><path d="M7 -4.4 L8.2 -4.4 L10.8 -1.2 L10.8 1.2 L8.2 4.4 L7 4.4 Z" fill="#e03a42"/><path d="M10.8 -1.2 L12.6 -3.2 L15.9 -3.2 Q16.6 0 15.9 3.2 L12.6 3.2 L10.8 1.2 Z" fill="#e64c54"/><path d="M7.5 -3.6 L10.5 -0.6 L12.8 -2.5 L15.5 -2.5" fill="none" stroke="#f8a4a8" stroke-width="1"/><path d="M8 4 L10.8 1 L12.8 2.8 L15.6 2.8" fill="none" stroke="#b8202a" stroke-width="0.8"/></g></svg>
<div class="t" id="t319" style="transform:scaleX(1.0612);right:1272px;top:579.79px;font-size:11.5px;color:#222;font-weight:normal;transform-origin:right center;">un</div>
<div class="t" id="t320" style="transform:scaleX(1.1320);left:631.5px;top:579.79px;font-size:11.5px;color:#222;font-weight:normal;">20/04/20</div>
<svg style="position:absolute;left:683px;top:575.10px" width="24" height="21" viewBox="0 0 24 21"><ellipse cx="10" cy="18" rx="5.5" ry="0.9" fill="#000" opacity="0.10"/><g transform="translate(5.2,17.6) rotate(-45)"><line x1="0.3" y1="0" x2="8" y2="0" stroke="#8c8c8c" stroke-width="1.3"/><line x1="1.5" y1="-0.3" x2="7" y2="-0.3" stroke="#f0f0f0" stroke-width="0.6"/><path d="M7 -4.4 L8.2 -4.4 L10.8 -1.2 L10.8 1.2 L8.2 4.4 L7 4.4 Z" fill="#e03a42"/><path d="M10.8 -1.2 L12.6 -3.2 L15.9 -3.2 Q16.6 0 15.9 3.2 L12.6 3.2 L10.8 1.2 Z" fill="#e64c54"/><path d="M7.5 -3.6 L10.5 -0.6 L12.8 -2.5 L15.5 -2.5" fill="none" stroke="#f8a4a8" stroke-width="1"/><path d="M8 4 L10.8 1 L12.8 2.8 L15.6 2.8" fill="none" stroke="#b8202a" stroke-width="0.8"/></g></svg>
<div class="t" id="t321" style="transform:scaleX(1.0712);left:721.5px;top:579.79px;font-size:11.5px;color:#222;font-weight:normal;">A produzir</div>
<div class="t" id="t322" style="transform:scaleX(1.0883);right:1037px;top:579.79px;font-size:11.5px;color:#222;font-weight:normal;transform-origin:right center;">0,00</div>
<div class="t" id="t323" style="transform:scaleX(1.0837);right:967px;top:579.79px;font-size:11.5px;color:#222;font-weight:normal;transform-origin:right center;">22,00</div>
<div style="position:absolute;left:0;top:596.400px;width:1369px;height:21.3px;background:#fff"></div>
<div style="position:absolute;left:38.0px;top:596.400px;width:1px;height:21.3px;background:#d3d7dc"></div>
<div style="position:absolute;left:76.0px;top:596.400px;width:1px;height:21.3px;background:#d3d7dc"></div>
<div style="position:absolute;left:104.0px;top:596.400px;width:1px;height:21.3px;background:#d3d7dc"></div>
<div style="position:absolute;left:164.0px;top:596.400px;width:1px;height:21.3px;background:#d3d7dc"></div>
<div style="position:absolute;left:274.0px;top:596.400px;width:1px;height:21.3px;background:#d3d7dc"></div>
<div style="position:absolute;left:494.0px;top:596.400px;width:1px;height:21.3px;background:#d3d7dc"></div>
<div style="position:absolute;left:594.0px;top:596.400px;width:1px;height:21.3px;background:#d3d7dc"></div>
<div style="position:absolute;left:624.0px;top:596.400px;width:1px;height:21.3px;background:#d3d7dc"></div>
<div style="position:absolute;left:714.0px;top:596.400px;width:1px;height:21.3px;background:#d3d7dc"></div>
<div style="position:absolute;left:789.0px;top:596.400px;width:1px;height:21.3px;background:#d3d7dc"></div>
<div style="position:absolute;left:859.0px;top:596.400px;width:1px;height:21.3px;background:#d3d7dc"></div>
<div style="position:absolute;left:929.0px;top:596.400px;width:1px;height:21.3px;background:#d3d7dc"></div>
<div style="position:absolute;left:12px;top:599.90px;width:13px;height:13px;background:#fff;box-sizing:border-box;border:1px solid #767676;border-radius:2px"></div>
<svg style="position:absolute;left:42px;top:604.40px" width="8" height="8" viewBox="0 0 8 8"><path d="M1.2 1.2 L6.8 6.8 M6.8 1.2 L1.2 6.8" stroke="#b82428" stroke-width="1.9"/></svg>
<svg style="position:absolute;left:55px;top:599.90px" width="15" height="15" viewBox="0 0 14 14"><path d="M2.5 9.5 L10.5 1.5 L12.5 3.5 L4.5 11.5 Z" fill="#f0a040"/><path d="M10.5 1.5 L12.5 3.5 L11.5 4.5 L9.5 2.5 Z" fill="#e88a30"/><path d="M2.5 9.5 L4.5 11.5 L1 13 Z" fill="#f6e0b0"/><path d="M1 13 L1.8 11.3 L2.7 12.2 Z" fill="#333"/></svg>
<svg style="position:absolute;left:83.5px;top:598.40px" width="15" height="15" viewBox="0 0 15 15"><defs><linearGradient id="pg28" x1="0" y1="0" x2="0" y2="1"><stop offset="0" stop-color="#f0f0f0"/><stop offset="0.6" stop-color="#c8c8c8"/><stop offset="1" stop-color="#6a6a6a"/></linearGradient></defs><rect x="3" y="0.5" width="9" height="4" fill="#eee" stroke="#b8b8b8" stroke-width="0.8"/><rect x="0.5" y="4" width="14" height="7" rx="1.5" fill="url(#pg28)" stroke="#999" stroke-width="0.8"/><rect x="3" y="10" width="9" height="4.5" fill="#e8e8e8" stroke="#aaa" stroke-width="0.8"/><circle cx="12.2" cy="6.5" r="0.9" fill="#5c5"/><circle cx="12.2" cy="8.8" r="0.9" fill="#ea3"/></svg>
<div class="t" id="t324" style="transform:scaleX(1.0661);right:1732px;top:601.09px;font-size:11.5px;color:#222;font-weight:normal;transform-origin:right center;">82</div>
<div class="t" id="t325" style="transform:scaleX(1.0664);left:171.5px;top:601.09px;font-size:11.5px;color:#222;font-weight:normal;">00099</div>
<div class="t" id="t326" style="transform:scaleX(1.0232);left:281.5px;top:601.09px;font-size:11.5px;color:#222;font-weight:normal;">FabricadoAgregado</div>
<div class="t" id="t327" style="transform:scaleX(1.0883);right:1327.5px;top:601.09px;font-size:11.5px;color:#222;font-weight:normal;transform-origin:right center;">1,00</div>
<svg style="position:absolute;left:565px;top:596.40px" width="24" height="21" viewBox="0 0 24 21"><ellipse cx="10" cy="18" rx="5.5" ry="0.9" fill="#000" opacity="0.10"/><g transform="translate(5.2,17.6) rotate(-45)"><line x1="0.3" y1="0" x2="8" y2="0" stroke="#8c8c8c" stroke-width="1.3"/><line x1="1.5" y1="-0.3" x2="7" y2="-0.3" stroke="#f0f0f0" stroke-width="0.6"/><path d="M7 -4.4 L8.2 -4.4 L10.8 -1.2 L10.8 1.2 L8.2 4.4 L7 4.4 Z" fill="#e03a42"/><path d="M10.8 -1.2 L12.6 -3.2 L15.9 -3.2 Q16.6 0 15.9 3.2 L12.6 3.2 L10.8 1.2 Z" fill="#e64c54"/><path d="M7.5 -3.6 L10.5 -0.6 L12.8 -2.5 L15.5 -2.5" fill="none" stroke="#f8a4a8" stroke-width="1"/><path d="M8 4 L10.8 1 L12.8 2.8 L15.6 2.8" fill="none" stroke="#b8202a" stroke-width="0.8"/></g></svg>
<div class="t" id="t328" style="transform:scaleX(1.0612);right:1272px;top:601.09px;font-size:11.5px;color:#222;font-weight:normal;transform-origin:right center;">un</div>
<div class="t" id="t329" style="transform:scaleX(1.1320);left:631.5px;top:601.09px;font-size:11.5px;color:#222;font-weight:normal;">20/04/20</div>
<svg style="position:absolute;left:683px;top:596.40px" width="24" height="21" viewBox="0 0 24 21"><ellipse cx="10" cy="18" rx="5.5" ry="0.9" fill="#000" opacity="0.10"/><g transform="translate(5.2,17.6) rotate(-45)"><line x1="0.3" y1="0" x2="8" y2="0" stroke="#8c8c8c" stroke-width="1.3"/><line x1="1.5" y1="-0.3" x2="7" y2="-0.3" stroke="#f0f0f0" stroke-width="0.6"/><path d="M7 -4.4 L8.2 -4.4 L10.8 -1.2 L10.8 1.2 L8.2 4.4 L7 4.4 Z" fill="#e03a42"/><path d="M10.8 -1.2 L12.6 -3.2 L15.9 -3.2 Q16.6 0 15.9 3.2 L12.6 3.2 L10.8 1.2 Z" fill="#e64c54"/><path d="M7.5 -3.6 L10.5 -0.6 L12.8 -2.5 L15.5 -2.5" fill="none" stroke="#f8a4a8" stroke-width="1"/><path d="M8 4 L10.8 1 L12.8 2.8 L15.6 2.8" fill="none" stroke="#b8202a" stroke-width="0.8"/></g></svg>
<div class="t" id="t330" style="transform:scaleX(1.0712);left:721.5px;top:601.09px;font-size:11.5px;color:#222;font-weight:normal;">A produzir</div>
<div class="t" id="t331" style="transform:scaleX(1.0883);right:1037px;top:601.09px;font-size:11.5px;color:#222;font-weight:normal;transform-origin:right center;">0,00</div>
<div class="t" id="t332" style="transform:scaleX(1.0883);right:967px;top:601.09px;font-size:11.5px;color:#222;font-weight:normal;transform-origin:right center;">1,00</div>
<div style="position:absolute;left:0;top:617.700px;width:1369px;height:21.3px;background:#eff0f3"></div>
<div style="position:absolute;left:38.0px;top:617.700px;width:1px;height:21.3px;background:#d3d7dc"></div>
<div style="position:absolute;left:76.0px;top:617.700px;width:1px;height:21.3px;background:#d3d7dc"></div>
<div style="position:absolute;left:104.0px;top:617.700px;width:1px;height:21.3px;background:#d3d7dc"></div>
<div style="position:absolute;left:164.0px;top:617.700px;width:1px;height:21.3px;background:#d3d7dc"></div>
<div style="position:absolute;left:274.0px;top:617.700px;width:1px;height:21.3px;background:#d3d7dc"></div>
<div style="position:absolute;left:494.0px;top:617.700px;width:1px;height:21.3px;background:#d3d7dc"></div>
<div style="position:absolute;left:594.0px;top:617.700px;width:1px;height:21.3px;background:#d3d7dc"></div>
<div style="position:absolute;left:624.0px;top:617.700px;width:1px;height:21.3px;background:#d3d7dc"></div>
<div style="position:absolute;left:714.0px;top:617.700px;width:1px;height:21.3px;background:#d3d7dc"></div>
<div style="position:absolute;left:789.0px;top:617.700px;width:1px;height:21.3px;background:#d3d7dc"></div>
<div style="position:absolute;left:859.0px;top:617.700px;width:1px;height:21.3px;background:#d3d7dc"></div>
<div style="position:absolute;left:929.0px;top:617.700px;width:1px;height:21.3px;background:#d3d7dc"></div>
<div style="position:absolute;left:12px;top:621.20px;width:13px;height:13px;background:#fff;box-sizing:border-box;border:1px solid #767676;border-radius:2px"></div>
<svg style="position:absolute;left:42px;top:625.70px" width="8" height="8" viewBox="0 0 8 8"><path d="M1.2 1.2 L6.8 6.8 M6.8 1.2 L1.2 6.8" stroke="#b82428" stroke-width="1.9"/></svg>
<svg style="position:absolute;left:55px;top:621.20px" width="15" height="15" viewBox="0 0 14 14"><path d="M2.5 9.5 L10.5 1.5 L12.5 3.5 L4.5 11.5 Z" fill="#f0a040"/><path d="M10.5 1.5 L12.5 3.5 L11.5 4.5 L9.5 2.5 Z" fill="#e88a30"/><path d="M2.5 9.5 L4.5 11.5 L1 13 Z" fill="#f6e0b0"/><path d="M1 13 L1.8 11.3 L2.7 12.2 Z" fill="#333"/></svg>
<svg style="position:absolute;left:83.5px;top:619.70px" width="15" height="15" viewBox="0 0 15 15"><defs><linearGradient id="pg29" x1="0" y1="0" x2="0" y2="1"><stop offset="0" stop-color="#f0f0f0"/><stop offset="0.6" stop-color="#c8c8c8"/><stop offset="1" stop-color="#6a6a6a"/></linearGradient></defs><rect x="3" y="0.5" width="9" height="4" fill="#eee" stroke="#b8b8b8" stroke-width="0.8"/><rect x="0.5" y="4" width="14" height="7" rx="1.5" fill="url(#pg29)" stroke="#999" stroke-width="0.8"/><rect x="3" y="10" width="9" height="4.5" fill="#e8e8e8" stroke="#aaa" stroke-width="0.8"/><circle cx="12.2" cy="6.5" r="0.9" fill="#5c5"/><circle cx="12.2" cy="8.8" r="0.9" fill="#ea3"/></svg>
<div class="t" id="t333" style="transform:scaleX(1.0661);right:1732px;top:622.39px;font-size:11.5px;color:#222;font-weight:normal;transform-origin:right center;">81</div>
<div class="t" id="t334" style="transform:scaleX(1.0664);left:171.5px;top:622.39px;font-size:11.5px;color:#222;font-weight:normal;">00101</div>
<div class="t" id="t335" style="transform:scaleX(1.0219);left:281.5px;top:622.39px;font-size:11.5px;color:#222;font-weight:normal;">FA_02</div>
<div class="t" id="t336" style="transform:scaleX(1.0802);right:1327.5px;top:622.39px;font-size:11.5px;color:#222;font-weight:normal;transform-origin:right center;">100,00</div>
<svg style="position:absolute;left:565px;top:617.70px" width="24" height="21" viewBox="0 0 24 21"><ellipse cx="10" cy="18" rx="5.5" ry="0.9" fill="#000" opacity="0.10"/><g transform="translate(5.2,17.6) rotate(-45)"><line x1="0.3" y1="0" x2="8" y2="0" stroke="#8c8c8c" stroke-width="1.3"/><line x1="1.5" y1="-0.3" x2="7" y2="-0.3" stroke="#f0f0f0" stroke-width="0.6"/><path d="M7 -4.4 L8.2 -4.4 L10.8 -1.2 L10.8 1.2 L8.2 4.4 L7 4.4 Z" fill="#e03a42"/><path d="M10.8 -1.2 L12.6 -3.2 L15.9 -3.2 Q16.6 0 15.9 3.2 L12.6 3.2 L10.8 1.2 Z" fill="#e64c54"/><path d="M7.5 -3.6 L10.5 -0.6 L12.8 -2.5 L15.5 -2.5" fill="none" stroke="#f8a4a8" stroke-width="1"/><path d="M8 4 L10.8 1 L12.8 2.8 L15.6 2.8" fill="none" stroke="#b8202a" stroke-width="0.8"/></g></svg>
<div class="t" id="t337" style="transform:scaleX(1.0612);right:1272px;top:622.39px;font-size:11.5px;color:#222;font-weight:normal;transform-origin:right center;">un</div>
<div class="t" id="t338" style="transform:scaleX(1.1320);left:631.5px;top:622.39px;font-size:11.5px;color:#222;font-weight:normal;">20/04/20</div>
<svg style="position:absolute;left:683px;top:617.70px" width="24" height="21" viewBox="0 0 24 21"><ellipse cx="10" cy="18" rx="5.5" ry="0.9" fill="#000" opacity="0.10"/><g transform="translate(5.2,17.6) rotate(-45)"><line x1="0.3" y1="0" x2="8" y2="0" stroke="#8c8c8c" stroke-width="1.3"/><line x1="1.5" y1="-0.3" x2="7" y2="-0.3" stroke="#f0f0f0" stroke-width="0.6"/><path d="M7 -4.4 L8.2 -4.4 L10.8 -1.2 L10.8 1.2 L8.2 4.4 L7 4.4 Z" fill="#e03a42"/><path d="M10.8 -1.2 L12.6 -3.2 L15.9 -3.2 Q16.6 0 15.9 3.2 L12.6 3.2 L10.8 1.2 Z" fill="#e64c54"/><path d="M7.5 -3.6 L10.5 -0.6 L12.8 -2.5 L15.5 -2.5" fill="none" stroke="#f8a4a8" stroke-width="1"/><path d="M8 4 L10.8 1 L12.8 2.8 L15.6 2.8" fill="none" stroke="#b8202a" stroke-width="0.8"/></g></svg>
<div class="t" id="t339" style="transform:scaleX(1.0712);left:721.5px;top:622.39px;font-size:11.5px;color:#222;font-weight:normal;">A produzir</div>
<div class="t" id="t340" style="transform:scaleX(1.0883);right:1037px;top:622.39px;font-size:11.5px;color:#222;font-weight:normal;transform-origin:right center;">0,00</div>
<div class="t" id="t341" style="transform:scaleX(1.0802);right:967px;top:622.39px;font-size:11.5px;color:#222;font-weight:normal;transform-origin:right center;">100,00</div>
<div style="position:absolute;left:0;top:639.000px;width:1369px;height:21.3px;background:#fff"></div>
<div style="position:absolute;left:38.0px;top:639.000px;width:1px;height:21.3px;background:#d3d7dc"></div>
<div style="position:absolute;left:76.0px;top:639.000px;width:1px;height:21.3px;background:#d3d7dc"></div>
<div style="position:absolute;left:104.0px;top:639.000px;width:1px;height:21.3px;background:#d3d7dc"></div>
<div style="position:absolute;left:164.0px;top:639.000px;width:1px;height:21.3px;background:#d3d7dc"></div>
<div style="position:absolute;left:274.0px;top:639.000px;width:1px;height:21.3px;background:#d3d7dc"></div>
<div style="position:absolute;left:494.0px;top:639.000px;width:1px;height:21.3px;background:#d3d7dc"></div>
<div style="position:absolute;left:594.0px;top:639.000px;width:1px;height:21.3px;background:#d3d7dc"></div>
<div style="position:absolute;left:624.0px;top:639.000px;width:1px;height:21.3px;background:#d3d7dc"></div>
<div style="position:absolute;left:714.0px;top:639.000px;width:1px;height:21.3px;background:#d3d7dc"></div>
<div style="position:absolute;left:789.0px;top:639.000px;width:1px;height:21.3px;background:#d3d7dc"></div>
<div style="position:absolute;left:859.0px;top:639.000px;width:1px;height:21.3px;background:#d3d7dc"></div>
<div style="position:absolute;left:929.0px;top:639.000px;width:1px;height:21.3px;background:#d3d7dc"></div>
<div style="position:absolute;left:12px;top:642.50px;width:13px;height:13px;background:#fff;box-sizing:border-box;border:1px solid #767676;border-radius:2px"></div>
<svg style="position:absolute;left:42px;top:647.00px" width="8" height="8" viewBox="0 0 8 8"><path d="M1.2 1.2 L6.8 6.8 M6.8 1.2 L1.2 6.8" stroke="#b82428" stroke-width="1.9"/></svg>
<svg style="position:absolute;left:55px;top:642.50px" width="15" height="15" viewBox="0 0 14 14"><path d="M2.5 9.5 L10.5 1.5 L12.5 3.5 L4.5 11.5 Z" fill="#f0a040"/><path d="M10.5 1.5 L12.5 3.5 L11.5 4.5 L9.5 2.5 Z" fill="#e88a30"/><path d="M2.5 9.5 L4.5 11.5 L1 13 Z" fill="#f6e0b0"/><path d="M1 13 L1.8 11.3 L2.7 12.2 Z" fill="#333"/></svg>
<svg style="position:absolute;left:83.5px;top:641.00px" width="15" height="15" viewBox="0 0 15 15"><defs><linearGradient id="pg30" x1="0" y1="0" x2="0" y2="1"><stop offset="0" stop-color="#f0f0f0"/><stop offset="0.6" stop-color="#c8c8c8"/><stop offset="1" stop-color="#6a6a6a"/></linearGradient></defs><rect x="3" y="0.5" width="9" height="4" fill="#eee" stroke="#b8b8b8" stroke-width="0.8"/><rect x="0.5" y="4" width="14" height="7" rx="1.5" fill="url(#pg30)" stroke="#999" stroke-width="0.8"/><rect x="3" y="10" width="9" height="4.5" fill="#e8e8e8" stroke="#aaa" stroke-width="0.8"/><circle cx="12.2" cy="6.5" r="0.9" fill="#5c5"/><circle cx="12.2" cy="8.8" r="0.9" fill="#ea3"/></svg>
<div class="t" id="t342" style="transform:scaleX(1.0661);right:1732px;top:643.69px;font-size:11.5px;color:#222;font-weight:normal;transform-origin:right center;">80</div>
<div class="t" id="t343" style="transform:scaleX(1.0664);left:171.5px;top:643.69px;font-size:11.5px;color:#222;font-weight:normal;">00100</div>
<div class="t" id="t344" style="transform:scaleX(1.0219);left:281.5px;top:643.69px;font-size:11.5px;color:#222;font-weight:normal;">FA_01</div>
<div class="t" id="t345" style="transform:scaleX(1.0802);right:1327.5px;top:643.69px;font-size:11.5px;color:#222;font-weight:normal;transform-origin:right center;">100,00</div>
<svg style="position:absolute;left:565px;top:639.00px" width="24" height="21" viewBox="0 0 24 21"><ellipse cx="10" cy="18" rx="5.5" ry="0.9" fill="#000" opacity="0.10"/><g transform="translate(5.2,17.6) rotate(-45)"><line x1="0.3" y1="0" x2="8" y2="0" stroke="#8c8c8c" stroke-width="1.3"/><line x1="1.5" y1="-0.3" x2="7" y2="-0.3" stroke="#f0f0f0" stroke-width="0.6"/><path d="M7 -4.4 L8.2 -4.4 L10.8 -1.2 L10.8 1.2 L8.2 4.4 L7 4.4 Z" fill="#e03a42"/><path d="M10.8 -1.2 L12.6 -3.2 L15.9 -3.2 Q16.6 0 15.9 3.2 L12.6 3.2 L10.8 1.2 Z" fill="#e64c54"/><path d="M7.5 -3.6 L10.5 -0.6 L12.8 -2.5 L15.5 -2.5" fill="none" stroke="#f8a4a8" stroke-width="1"/><path d="M8 4 L10.8 1 L12.8 2.8 L15.6 2.8" fill="none" stroke="#b8202a" stroke-width="0.8"/></g></svg>
<div class="t" id="t346" style="transform:scaleX(1.0612);right:1272px;top:643.69px;font-size:11.5px;color:#222;font-weight:normal;transform-origin:right center;">un</div>
<div class="t" id="t347" style="transform:scaleX(1.1320);left:631.5px;top:643.69px;font-size:11.5px;color:#222;font-weight:normal;">20/04/20</div>
<svg style="position:absolute;left:683px;top:639.00px" width="24" height="21" viewBox="0 0 24 21"><ellipse cx="10" cy="18" rx="5.5" ry="0.9" fill="#000" opacity="0.10"/><g transform="translate(5.2,17.6) rotate(-45)"><line x1="0.3" y1="0" x2="8" y2="0" stroke="#8c8c8c" stroke-width="1.3"/><line x1="1.5" y1="-0.3" x2="7" y2="-0.3" stroke="#f0f0f0" stroke-width="0.6"/><path d="M7 -4.4 L8.2 -4.4 L10.8 -1.2 L10.8 1.2 L8.2 4.4 L7 4.4 Z" fill="#e03a42"/><path d="M10.8 -1.2 L12.6 -3.2 L15.9 -3.2 Q16.6 0 15.9 3.2 L12.6 3.2 L10.8 1.2 Z" fill="#e64c54"/><path d="M7.5 -3.6 L10.5 -0.6 L12.8 -2.5 L15.5 -2.5" fill="none" stroke="#f8a4a8" stroke-width="1"/><path d="M8 4 L10.8 1 L12.8 2.8 L15.6 2.8" fill="none" stroke="#b8202a" stroke-width="0.8"/></g></svg>
<div class="t" id="t348" style="transform:scaleX(1.0712);left:721.5px;top:643.69px;font-size:11.5px;color:#222;font-weight:normal;">A produzir</div>
<div class="t" id="t349" style="transform:scaleX(1.0883);right:1037px;top:643.69px;font-size:11.5px;color:#222;font-weight:normal;transform-origin:right center;">0,00</div>
<div class="t" id="t350" style="transform:scaleX(1.0802);right:967px;top:643.69px;font-size:11.5px;color:#222;font-weight:normal;transform-origin:right center;">100,00</div>
<div style="position:absolute;left:0;top:660.300px;width:1369px;height:21.3px;background:#eff0f3"></div>
<div style="position:absolute;left:38.0px;top:660.300px;width:1px;height:21.3px;background:#d3d7dc"></div>
<div style="position:absolute;left:76.0px;top:660.300px;width:1px;height:21.3px;background:#d3d7dc"></div>
<div style="position:absolute;left:104.0px;top:660.300px;width:1px;height:21.3px;background:#d3d7dc"></div>
<div style="position:absolute;left:164.0px;top:660.300px;width:1px;height:21.3px;background:#d3d7dc"></div>
<div style="position:absolute;left:274.0px;top:660.300px;width:1px;height:21.3px;background:#d3d7dc"></div>
<div style="position:absolute;left:494.0px;top:660.300px;width:1px;height:21.3px;background:#d3d7dc"></div>
<div style="position:absolute;left:594.0px;top:660.300px;width:1px;height:21.3px;background:#d3d7dc"></div>
<div style="position:absolute;left:624.0px;top:660.300px;width:1px;height:21.3px;background:#d3d7dc"></div>
<div style="position:absolute;left:714.0px;top:660.300px;width:1px;height:21.3px;background:#d3d7dc"></div>
<div style="position:absolute;left:789.0px;top:660.300px;width:1px;height:21.3px;background:#d3d7dc"></div>
<div style="position:absolute;left:859.0px;top:660.300px;width:1px;height:21.3px;background:#d3d7dc"></div>
<div style="position:absolute;left:929.0px;top:660.300px;width:1px;height:21.3px;background:#d3d7dc"></div>
<div style="position:absolute;left:12px;top:663.80px;width:13px;height:13px;background:#fff;box-sizing:border-box;border:1px solid #767676;border-radius:2px"></div>
<svg style="position:absolute;left:42px;top:668.30px" width="8" height="8" viewBox="0 0 8 8"><path d="M1.2 1.2 L6.8 6.8 M6.8 1.2 L1.2 6.8" stroke="#b82428" stroke-width="1.9"/></svg>
<svg style="position:absolute;left:55px;top:663.80px" width="15" height="15" viewBox="0 0 14 14"><path d="M2.5 9.5 L10.5 1.5 L12.5 3.5 L4.5 11.5 Z" fill="#f0a040"/><path d="M10.5 1.5 L12.5 3.5 L11.5 4.5 L9.5 2.5 Z" fill="#e88a30"/><path d="M2.5 9.5 L4.5 11.5 L1 13 Z" fill="#f6e0b0"/><path d="M1 13 L1.8 11.3 L2.7 12.2 Z" fill="#333"/></svg>
<svg style="position:absolute;left:83.5px;top:662.30px" width="15" height="15" viewBox="0 0 15 15"><defs><linearGradient id="pg31" x1="0" y1="0" x2="0" y2="1"><stop offset="0" stop-color="#f0f0f0"/><stop offset="0.6" stop-color="#c8c8c8"/><stop offset="1" stop-color="#6a6a6a"/></linearGradient></defs><rect x="3" y="0.5" width="9" height="4" fill="#eee" stroke="#b8b8b8" stroke-width="0.8"/><rect x="0.5" y="4" width="14" height="7" rx="1.5" fill="url(#pg31)" stroke="#999" stroke-width="0.8"/><rect x="3" y="10" width="9" height="4.5" fill="#e8e8e8" stroke="#aaa" stroke-width="0.8"/><circle cx="12.2" cy="6.5" r="0.9" fill="#5c5"/><circle cx="12.2" cy="8.8" r="0.9" fill="#ea3"/></svg>
<div class="t" id="t351" style="transform:scaleX(1.0661);right:1732px;top:664.99px;font-size:11.5px;color:#222;font-weight:normal;transform-origin:right center;">79</div>
<div class="t" id="t352" style="transform:scaleX(1.0664);left:171.5px;top:664.99px;font-size:11.5px;color:#222;font-weight:normal;">00100</div>
<div class="t" id="t353" style="transform:scaleX(0.9787);left:281.5px;top:664.99px;font-size:11.5px;color:#222;font-weight:normal;">Mesa</div>
<div class="t" id="t354" style="transform:scaleX(1.0802);right:1327.5px;top:664.99px;font-size:11.5px;color:#222;font-weight:normal;transform-origin:right center;">100,00</div>
<svg style="position:absolute;left:565px;top:660.30px" width="24" height="21" viewBox="0 0 24 21"><ellipse cx="10" cy="18" rx="5.5" ry="0.9" fill="#000" opacity="0.10"/><g transform="translate(5.2,17.6) rotate(-45)"><line x1="0.3" y1="0" x2="8" y2="0" stroke="#8c8c8c" stroke-width="1.3"/><line x1="1.5" y1="-0.3" x2="7" y2="-0.3" stroke="#f0f0f0" stroke-width="0.6"/><path d="M7 -4.4 L8.2 -4.4 L10.8 -1.2 L10.8 1.2 L8.2 4.4 L7 4.4 Z" fill="#e03a42"/><path d="M10.8 -1.2 L12.6 -3.2 L15.9 -3.2 Q16.6 0 15.9 3.2 L12.6 3.2 L10.8 1.2 Z" fill="#e64c54"/><path d="M7.5 -3.6 L10.5 -0.6 L12.8 -2.5 L15.5 -2.5" fill="none" stroke="#f8a4a8" stroke-width="1"/><path d="M8 4 L10.8 1 L12.8 2.8 L15.6 2.8" fill="none" stroke="#b8202a" stroke-width="0.8"/></g></svg>
<div class="t" id="t355" style="transform:scaleX(1.0612);right:1272px;top:664.99px;font-size:11.5px;color:#222;font-weight:normal;transform-origin:right center;">un</div>
<div class="t" id="t356" style="transform:scaleX(1.1320);left:631.5px;top:664.99px;font-size:11.5px;color:#222;font-weight:normal;">20/04/20</div>
<svg style="position:absolute;left:683px;top:660.30px" width="24" height="21" viewBox="0 0 24 21"><ellipse cx="10" cy="18" rx="5.5" ry="0.9" fill="#000" opacity="0.10"/><g transform="translate(5.2,17.6) rotate(-45)"><line x1="0.3" y1="0" x2="8" y2="0" stroke="#8c8c8c" stroke-width="1.3"/><line x1="1.5" y1="-0.3" x2="7" y2="-0.3" stroke="#f0f0f0" stroke-width="0.6"/><path d="M7 -4.4 L8.2 -4.4 L10.8 -1.2 L10.8 1.2 L8.2 4.4 L7 4.4 Z" fill="#e03a42"/><path d="M10.8 -1.2 L12.6 -3.2 L15.9 -3.2 Q16.6 0 15.9 3.2 L12.6 3.2 L10.8 1.2 Z" fill="#e64c54"/><path d="M7.5 -3.6 L10.5 -0.6 L12.8 -2.5 L15.5 -2.5" fill="none" stroke="#f8a4a8" stroke-width="1"/><path d="M8 4 L10.8 1 L12.8 2.8 L15.6 2.8" fill="none" stroke="#b8202a" stroke-width="0.8"/></g></svg>
<div class="t" id="t357" style="transform:scaleX(1.0712);left:721.5px;top:664.99px;font-size:11.5px;color:#222;font-weight:normal;">A produzir</div>
<div class="t" id="t358" style="transform:scaleX(1.0883);right:1037px;top:664.99px;font-size:11.5px;color:#222;font-weight:normal;transform-origin:right center;">0,00</div>
<div class="t" id="t359" style="transform:scaleX(1.0802);right:967px;top:664.99px;font-size:11.5px;color:#222;font-weight:normal;transform-origin:right center;">100,00</div>
</div>
<div style="position:absolute;left:58px;top:203px;width:24px;height:25px;box-sizing:border-box;border:3px solid #f00;border-radius:2px"></div>
<div style="position:absolute;left:1897px;top:206px;width:15px;height:669px;background:#f1f1f1"></div>
<div style="position:absolute;left:1898px;top:223px;width:13px;height:400px;background:#c1c1c1"></div>
<svg style="position:absolute;left:1900px;top:212px" width="9" height="5" viewBox="0 0 9 5"><path d="M0.5 4.5 L4.5 0.5 L8.5 4.5 Z" fill="#a3a3a3"/></svg>
<svg style="position:absolute;left:1900px;top:863px" width="9" height="5" viewBox="0 0 9 5"><path d="M0.5 0.5 L4.5 4.5 L8.5 0.5 Z" fill="#505050"/></svg>
<div style="position:absolute;left:7px;top:875px;width:1890px;height:17px;background:#f1f1f1"></div>
<div style="position:absolute;left:1897px;top:875px;width:15px;height:17px;background:#dcdcdc"></div>
<svg style="position:absolute;left:12px;top:879.5px" width="5" height="9" viewBox="0 0 5 9"><path d="M4.5 0.5 L0.5 4.5 L4.5 8.5 Z" fill="#a3a3a3"/></svg>
<svg style="position:absolute;left:1885px;top:879.5px" width="5" height="9" viewBox="0 0 5 9"><path d="M0.5 0.5 L4.5 4.5 L0.5 8.5 Z" fill="#a3a3a3"/></svg>
</body></html>
